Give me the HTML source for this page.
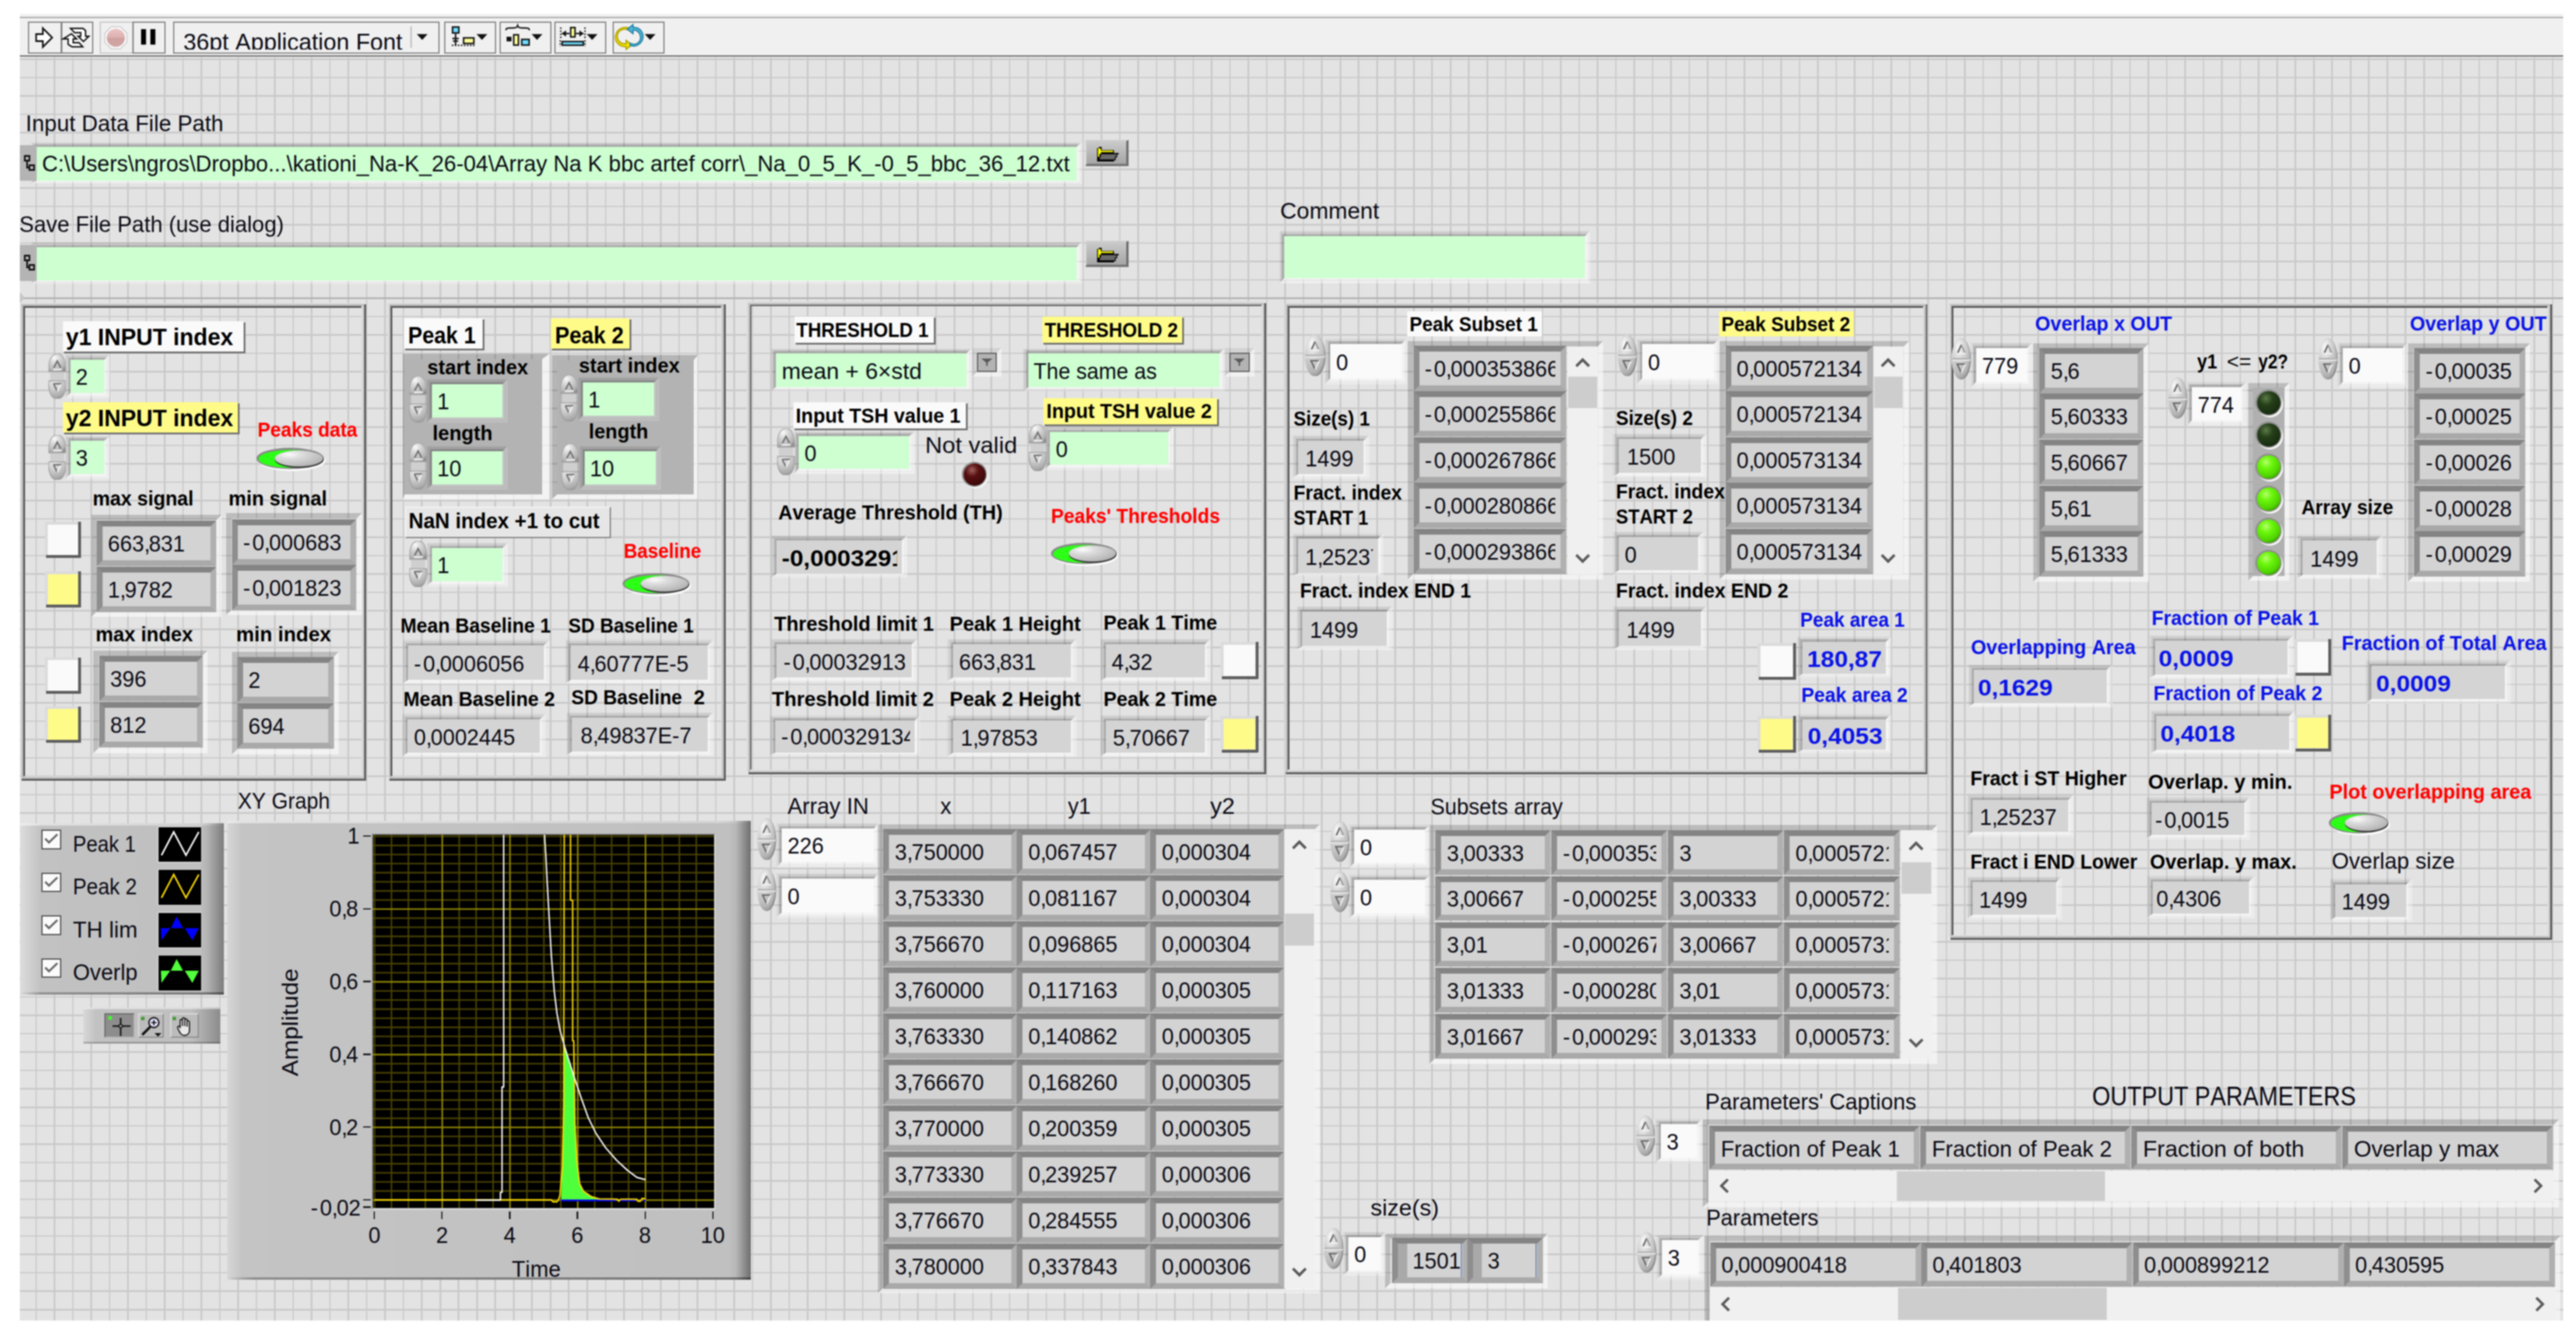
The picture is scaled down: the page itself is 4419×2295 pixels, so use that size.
<!DOCTYPE html>
<html lang="en"><head><meta charset="utf-8"><title>LabVIEW front panel</title>
<style>
html,body{margin:0;padding:0;background:#fff}
body{width:4419px;height:2295px;overflow:hidden;position:relative;font-family:"Liberation Sans",sans-serif}
#r{position:absolute;left:0;top:0;width:4419px;height:2295px;overflow:hidden;filter:blur(0.9px)}
#r div,#r span,#r svg{position:absolute;box-sizing:border-box}
.t{white-space:pre;line-height:1;transform-origin:0 0;font-kerning:none;letter-spacing:0}
#r .t span{position:static}
</style></head>
<body>
<svg width="0" height="0" style="position:absolute"><defs>
<radialGradient id="spg" cx="35%" cy="22%" r="85%"><stop offset="0" stop-color="#fafafa"/><stop offset=".35" stop-color="#d6d6d6"/><stop offset=".8" stop-color="#b4b4b4"/><stop offset="1" stop-color="#8e8e8e"/></radialGradient>
<radialGradient id="spg2" cx="35%" cy="10%" r="95%"><stop offset="0" stop-color="#e8e8e8"/><stop offset=".45" stop-color="#cacaca"/><stop offset=".85" stop-color="#a8a8a8"/><stop offset="1" stop-color="#888"/></radialGradient>
<linearGradient id="sps" x1="0" y1="0" x2="1" y2="1"><stop offset="0" stop-color="#ececec"/><stop offset=".5" stop-color="#bcbcbc"/><stop offset="1" stop-color="#7a7a7a"/></linearGradient>
<radialGradient id="knob" cx="30%" cy="25%" r="90%"><stop offset="0" stop-color="#fcfcfc"/><stop offset=".3" stop-color="#dcdcdc"/><stop offset=".75" stop-color="#bcbcbc"/><stop offset="1" stop-color="#a4a4a4"/></radialGradient>
<radialGradient id="ledon" cx="38%" cy="30%" r="75%"><stop offset="0" stop-color="#b6ff6a"/><stop offset=".35" stop-color="#6cf60e"/><stop offset=".8" stop-color="#4fd400"/><stop offset="1" stop-color="#3a9a00"/></radialGradient>
<radialGradient id="ledoff" cx="38%" cy="30%" r="75%"><stop offset="0" stop-color="#5c7a48"/><stop offset=".4" stop-color="#26401a"/><stop offset="1" stop-color="#16280e"/></radialGradient>
<radialGradient id="ledred" cx="38%" cy="30%" r="75%"><stop offset="0" stop-color="#a06060"/><stop offset=".4" stop-color="#581010"/><stop offset="1" stop-color="#380808"/></radialGradient>
<linearGradient id="abg" x1="0" y1="0" x2="0" y2="1"><stop offset="0" stop-color="#ecc4c4"/><stop offset=".5" stop-color="#dcaeae"/><stop offset=".52" stop-color="#cfa0a0"/><stop offset="1" stop-color="#d2a6a6"/></linearGradient>
</defs></svg>
<div id="r">
<div style="left:34px;top:24px;width:4362.5px;height:2241px;background:#e3e3e3"></div>
<div style="left:60.7px;top:97.5px;width:2.6px;height:2167.5px;background:#c9c9c9"></div>
<div style="left:92.21px;top:97.5px;width:2.6px;height:2167.5px;background:#c9c9c9"></div>
<div style="left:123.72px;top:97.5px;width:2.6px;height:2167.5px;background:#c9c9c9"></div>
<div style="left:155.23px;top:97.5px;width:2.6px;height:2167.5px;background:#c9c9c9"></div>
<div style="left:186.74px;top:97.5px;width:2.6px;height:2167.5px;background:#c9c9c9"></div>
<div style="left:218.25px;top:97.5px;width:2.6px;height:2167.5px;background:#c9c9c9"></div>
<div style="left:249.76px;top:97.5px;width:2.6px;height:2167.5px;background:#c9c9c9"></div>
<div style="left:281.27px;top:97.5px;width:2.6px;height:2167.5px;background:#c9c9c9"></div>
<div style="left:312.78px;top:97.5px;width:2.6px;height:2167.5px;background:#c9c9c9"></div>
<div style="left:344.29px;top:97.5px;width:2.6px;height:2167.5px;background:#c9c9c9"></div>
<div style="left:375.8px;top:97.5px;width:2.6px;height:2167.5px;background:#c9c9c9"></div>
<div style="left:407.31px;top:97.5px;width:2.6px;height:2167.5px;background:#c9c9c9"></div>
<div style="left:438.82px;top:97.5px;width:2.6px;height:2167.5px;background:#c9c9c9"></div>
<div style="left:470.33px;top:97.5px;width:2.6px;height:2167.5px;background:#c9c9c9"></div>
<div style="left:501.84px;top:97.5px;width:2.6px;height:2167.5px;background:#c9c9c9"></div>
<div style="left:533.35px;top:97.5px;width:2.6px;height:2167.5px;background:#c9c9c9"></div>
<div style="left:564.86px;top:97.5px;width:2.6px;height:2167.5px;background:#c9c9c9"></div>
<div style="left:596.37px;top:97.5px;width:2.6px;height:2167.5px;background:#c9c9c9"></div>
<div style="left:627.88px;top:97.5px;width:2.6px;height:2167.5px;background:#c9c9c9"></div>
<div style="left:659.39px;top:97.5px;width:2.6px;height:2167.5px;background:#c9c9c9"></div>
<div style="left:690.9px;top:97.5px;width:2.6px;height:2167.5px;background:#c9c9c9"></div>
<div style="left:722.41px;top:97.5px;width:2.6px;height:2167.5px;background:#c9c9c9"></div>
<div style="left:753.92px;top:97.5px;width:2.6px;height:2167.5px;background:#c9c9c9"></div>
<div style="left:785.43px;top:97.5px;width:2.6px;height:2167.5px;background:#c9c9c9"></div>
<div style="left:816.94px;top:97.5px;width:2.6px;height:2167.5px;background:#c9c9c9"></div>
<div style="left:848.45px;top:97.5px;width:2.6px;height:2167.5px;background:#c9c9c9"></div>
<div style="left:879.96px;top:97.5px;width:2.6px;height:2167.5px;background:#c9c9c9"></div>
<div style="left:911.47px;top:97.5px;width:2.6px;height:2167.5px;background:#c9c9c9"></div>
<div style="left:942.98px;top:97.5px;width:2.6px;height:2167.5px;background:#c9c9c9"></div>
<div style="left:974.49px;top:97.5px;width:2.6px;height:2167.5px;background:#c9c9c9"></div>
<div style="left:1006px;top:97.5px;width:2.6px;height:2167.5px;background:#c9c9c9"></div>
<div style="left:1037.51px;top:97.5px;width:2.6px;height:2167.5px;background:#c9c9c9"></div>
<div style="left:1069.02px;top:97.5px;width:2.6px;height:2167.5px;background:#c9c9c9"></div>
<div style="left:1100.53px;top:97.5px;width:2.6px;height:2167.5px;background:#c9c9c9"></div>
<div style="left:1132.04px;top:97.5px;width:2.6px;height:2167.5px;background:#c9c9c9"></div>
<div style="left:1163.55px;top:97.5px;width:2.6px;height:2167.5px;background:#c9c9c9"></div>
<div style="left:1195.06px;top:97.5px;width:2.6px;height:2167.5px;background:#c9c9c9"></div>
<div style="left:1226.57px;top:97.5px;width:2.6px;height:2167.5px;background:#c9c9c9"></div>
<div style="left:1258.08px;top:97.5px;width:2.6px;height:2167.5px;background:#c9c9c9"></div>
<div style="left:1289.59px;top:97.5px;width:2.6px;height:2167.5px;background:#c9c9c9"></div>
<div style="left:1321.1px;top:97.5px;width:2.6px;height:2167.5px;background:#c9c9c9"></div>
<div style="left:1352.61px;top:97.5px;width:2.6px;height:2167.5px;background:#c9c9c9"></div>
<div style="left:1384.12px;top:97.5px;width:2.6px;height:2167.5px;background:#c9c9c9"></div>
<div style="left:1415.63px;top:97.5px;width:2.6px;height:2167.5px;background:#c9c9c9"></div>
<div style="left:1447.14px;top:97.5px;width:2.6px;height:2167.5px;background:#c9c9c9"></div>
<div style="left:1478.65px;top:97.5px;width:2.6px;height:2167.5px;background:#c9c9c9"></div>
<div style="left:1510.16px;top:97.5px;width:2.6px;height:2167.5px;background:#c9c9c9"></div>
<div style="left:1541.67px;top:97.5px;width:2.6px;height:2167.5px;background:#c9c9c9"></div>
<div style="left:1573.18px;top:97.5px;width:2.6px;height:2167.5px;background:#c9c9c9"></div>
<div style="left:1604.69px;top:97.5px;width:2.6px;height:2167.5px;background:#c9c9c9"></div>
<div style="left:1636.2px;top:97.5px;width:2.6px;height:2167.5px;background:#c9c9c9"></div>
<div style="left:1667.71px;top:97.5px;width:2.6px;height:2167.5px;background:#c9c9c9"></div>
<div style="left:1699.22px;top:97.5px;width:2.6px;height:2167.5px;background:#c9c9c9"></div>
<div style="left:1730.73px;top:97.5px;width:2.6px;height:2167.5px;background:#c9c9c9"></div>
<div style="left:1762.24px;top:97.5px;width:2.6px;height:2167.5px;background:#c9c9c9"></div>
<div style="left:1793.75px;top:97.5px;width:2.6px;height:2167.5px;background:#c9c9c9"></div>
<div style="left:1825.26px;top:97.5px;width:2.6px;height:2167.5px;background:#c9c9c9"></div>
<div style="left:1856.77px;top:97.5px;width:2.6px;height:2167.5px;background:#c9c9c9"></div>
<div style="left:1888.28px;top:97.5px;width:2.6px;height:2167.5px;background:#c9c9c9"></div>
<div style="left:1919.79px;top:97.5px;width:2.6px;height:2167.5px;background:#c9c9c9"></div>
<div style="left:1951.3px;top:97.5px;width:2.6px;height:2167.5px;background:#c9c9c9"></div>
<div style="left:1982.81px;top:97.5px;width:2.6px;height:2167.5px;background:#c9c9c9"></div>
<div style="left:2014.32px;top:97.5px;width:2.6px;height:2167.5px;background:#c9c9c9"></div>
<div style="left:2045.83px;top:97.5px;width:2.6px;height:2167.5px;background:#c9c9c9"></div>
<div style="left:2077.34px;top:97.5px;width:2.6px;height:2167.5px;background:#c9c9c9"></div>
<div style="left:2108.85px;top:97.5px;width:2.6px;height:2167.5px;background:#c9c9c9"></div>
<div style="left:2140.36px;top:97.5px;width:2.6px;height:2167.5px;background:#c9c9c9"></div>
<div style="left:2171.87px;top:97.5px;width:2.6px;height:2167.5px;background:#c9c9c9"></div>
<div style="left:2203.38px;top:97.5px;width:2.6px;height:2167.5px;background:#c9c9c9"></div>
<div style="left:2234.89px;top:97.5px;width:2.6px;height:2167.5px;background:#c9c9c9"></div>
<div style="left:2266.4px;top:97.5px;width:2.6px;height:2167.5px;background:#c9c9c9"></div>
<div style="left:2297.91px;top:97.5px;width:2.6px;height:2167.5px;background:#c9c9c9"></div>
<div style="left:2329.42px;top:97.5px;width:2.6px;height:2167.5px;background:#c9c9c9"></div>
<div style="left:2360.93px;top:97.5px;width:2.6px;height:2167.5px;background:#c9c9c9"></div>
<div style="left:2392.44px;top:97.5px;width:2.6px;height:2167.5px;background:#c9c9c9"></div>
<div style="left:2423.95px;top:97.5px;width:2.6px;height:2167.5px;background:#c9c9c9"></div>
<div style="left:2455.46px;top:97.5px;width:2.6px;height:2167.5px;background:#c9c9c9"></div>
<div style="left:2486.97px;top:97.5px;width:2.6px;height:2167.5px;background:#c9c9c9"></div>
<div style="left:2518.48px;top:97.5px;width:2.6px;height:2167.5px;background:#c9c9c9"></div>
<div style="left:2549.99px;top:97.5px;width:2.6px;height:2167.5px;background:#c9c9c9"></div>
<div style="left:2581.5px;top:97.5px;width:2.6px;height:2167.5px;background:#c9c9c9"></div>
<div style="left:2613.01px;top:97.5px;width:2.6px;height:2167.5px;background:#c9c9c9"></div>
<div style="left:2644.52px;top:97.5px;width:2.6px;height:2167.5px;background:#c9c9c9"></div>
<div style="left:2676.03px;top:97.5px;width:2.6px;height:2167.5px;background:#c9c9c9"></div>
<div style="left:2707.54px;top:97.5px;width:2.6px;height:2167.5px;background:#c9c9c9"></div>
<div style="left:2739.05px;top:97.5px;width:2.6px;height:2167.5px;background:#c9c9c9"></div>
<div style="left:2770.56px;top:97.5px;width:2.6px;height:2167.5px;background:#c9c9c9"></div>
<div style="left:2802.07px;top:97.5px;width:2.6px;height:2167.5px;background:#c9c9c9"></div>
<div style="left:2833.58px;top:97.5px;width:2.6px;height:2167.5px;background:#c9c9c9"></div>
<div style="left:2865.09px;top:97.5px;width:2.6px;height:2167.5px;background:#c9c9c9"></div>
<div style="left:2896.6px;top:97.5px;width:2.6px;height:2167.5px;background:#c9c9c9"></div>
<div style="left:2928.11px;top:97.5px;width:2.6px;height:2167.5px;background:#c9c9c9"></div>
<div style="left:2959.62px;top:97.5px;width:2.6px;height:2167.5px;background:#c9c9c9"></div>
<div style="left:2991.13px;top:97.5px;width:2.6px;height:2167.5px;background:#c9c9c9"></div>
<div style="left:3022.64px;top:97.5px;width:2.6px;height:2167.5px;background:#c9c9c9"></div>
<div style="left:3054.15px;top:97.5px;width:2.6px;height:2167.5px;background:#c9c9c9"></div>
<div style="left:3085.66px;top:97.5px;width:2.6px;height:2167.5px;background:#c9c9c9"></div>
<div style="left:3117.17px;top:97.5px;width:2.6px;height:2167.5px;background:#c9c9c9"></div>
<div style="left:3148.68px;top:97.5px;width:2.6px;height:2167.5px;background:#c9c9c9"></div>
<div style="left:3180.19px;top:97.5px;width:2.6px;height:2167.5px;background:#c9c9c9"></div>
<div style="left:3211.7px;top:97.5px;width:2.6px;height:2167.5px;background:#c9c9c9"></div>
<div style="left:3243.21px;top:97.5px;width:2.6px;height:2167.5px;background:#c9c9c9"></div>
<div style="left:3274.72px;top:97.5px;width:2.6px;height:2167.5px;background:#c9c9c9"></div>
<div style="left:3306.23px;top:97.5px;width:2.6px;height:2167.5px;background:#c9c9c9"></div>
<div style="left:3337.74px;top:97.5px;width:2.6px;height:2167.5px;background:#c9c9c9"></div>
<div style="left:3369.25px;top:97.5px;width:2.6px;height:2167.5px;background:#c9c9c9"></div>
<div style="left:3400.76px;top:97.5px;width:2.6px;height:2167.5px;background:#c9c9c9"></div>
<div style="left:3432.27px;top:97.5px;width:2.6px;height:2167.5px;background:#c9c9c9"></div>
<div style="left:3463.78px;top:97.5px;width:2.6px;height:2167.5px;background:#c9c9c9"></div>
<div style="left:3495.29px;top:97.5px;width:2.6px;height:2167.5px;background:#c9c9c9"></div>
<div style="left:3526.8px;top:97.5px;width:2.6px;height:2167.5px;background:#c9c9c9"></div>
<div style="left:3558.31px;top:97.5px;width:2.6px;height:2167.5px;background:#c9c9c9"></div>
<div style="left:3589.82px;top:97.5px;width:2.6px;height:2167.5px;background:#c9c9c9"></div>
<div style="left:3621.33px;top:97.5px;width:2.6px;height:2167.5px;background:#c9c9c9"></div>
<div style="left:3652.84px;top:97.5px;width:2.6px;height:2167.5px;background:#c9c9c9"></div>
<div style="left:3684.35px;top:97.5px;width:2.6px;height:2167.5px;background:#c9c9c9"></div>
<div style="left:3715.86px;top:97.5px;width:2.6px;height:2167.5px;background:#c9c9c9"></div>
<div style="left:3747.37px;top:97.5px;width:2.6px;height:2167.5px;background:#c9c9c9"></div>
<div style="left:3778.88px;top:97.5px;width:2.6px;height:2167.5px;background:#c9c9c9"></div>
<div style="left:3810.39px;top:97.5px;width:2.6px;height:2167.5px;background:#c9c9c9"></div>
<div style="left:3841.9px;top:97.5px;width:2.6px;height:2167.5px;background:#c9c9c9"></div>
<div style="left:3873.41px;top:97.5px;width:2.6px;height:2167.5px;background:#c9c9c9"></div>
<div style="left:3904.92px;top:97.5px;width:2.6px;height:2167.5px;background:#c9c9c9"></div>
<div style="left:3936.43px;top:97.5px;width:2.6px;height:2167.5px;background:#c9c9c9"></div>
<div style="left:3967.94px;top:97.5px;width:2.6px;height:2167.5px;background:#c9c9c9"></div>
<div style="left:3999.45px;top:97.5px;width:2.6px;height:2167.5px;background:#c9c9c9"></div>
<div style="left:4030.96px;top:97.5px;width:2.6px;height:2167.5px;background:#c9c9c9"></div>
<div style="left:4062.47px;top:97.5px;width:2.6px;height:2167.5px;background:#c9c9c9"></div>
<div style="left:4093.98px;top:97.5px;width:2.6px;height:2167.5px;background:#c9c9c9"></div>
<div style="left:4125.49px;top:97.5px;width:2.6px;height:2167.5px;background:#c9c9c9"></div>
<div style="left:4157px;top:97.5px;width:2.6px;height:2167.5px;background:#c9c9c9"></div>
<div style="left:4188.51px;top:97.5px;width:2.6px;height:2167.5px;background:#c9c9c9"></div>
<div style="left:4220.02px;top:97.5px;width:2.6px;height:2167.5px;background:#c9c9c9"></div>
<div style="left:4251.53px;top:97.5px;width:2.6px;height:2167.5px;background:#c9c9c9"></div>
<div style="left:4283.04px;top:97.5px;width:2.6px;height:2167.5px;background:#c9c9c9"></div>
<div style="left:4314.55px;top:97.5px;width:2.6px;height:2167.5px;background:#c9c9c9"></div>
<div style="left:4346.06px;top:97.5px;width:2.6px;height:2167.5px;background:#c9c9c9"></div>
<div style="left:4377.57px;top:97.5px;width:2.6px;height:2167.5px;background:#c9c9c9"></div>
<div style="left:34px;top:100.2px;width:4362.5px;height:2.6px;background:#c9c9c9"></div>
<div style="left:34px;top:131.74px;width:4362.5px;height:2.6px;background:#c9c9c9"></div>
<div style="left:34px;top:163.28px;width:4362.5px;height:2.6px;background:#c9c9c9"></div>
<div style="left:34px;top:194.82px;width:4362.5px;height:2.6px;background:#c9c9c9"></div>
<div style="left:34px;top:226.36px;width:4362.5px;height:2.6px;background:#c9c9c9"></div>
<div style="left:34px;top:257.9px;width:4362.5px;height:2.6px;background:#c9c9c9"></div>
<div style="left:34px;top:289.44px;width:4362.5px;height:2.6px;background:#c9c9c9"></div>
<div style="left:34px;top:320.98px;width:4362.5px;height:2.6px;background:#c9c9c9"></div>
<div style="left:34px;top:352.52px;width:4362.5px;height:2.6px;background:#c9c9c9"></div>
<div style="left:34px;top:384.06px;width:4362.5px;height:2.6px;background:#c9c9c9"></div>
<div style="left:34px;top:415.6px;width:4362.5px;height:2.6px;background:#c9c9c9"></div>
<div style="left:34px;top:447.14px;width:4362.5px;height:2.6px;background:#c9c9c9"></div>
<div style="left:34px;top:478.68px;width:4362.5px;height:2.6px;background:#c9c9c9"></div>
<div style="left:34px;top:510.22px;width:4362.5px;height:2.6px;background:#b3b3b3"></div>
<div style="left:34px;top:541.76px;width:4362.5px;height:2.6px;background:#c9c9c9"></div>
<div style="left:34px;top:573.3px;width:4362.5px;height:2.6px;background:#c9c9c9"></div>
<div style="left:34px;top:604.84px;width:4362.5px;height:2.6px;background:#c9c9c9"></div>
<div style="left:34px;top:636.38px;width:4362.5px;height:2.6px;background:#c9c9c9"></div>
<div style="left:34px;top:667.92px;width:4362.5px;height:2.6px;background:#c9c9c9"></div>
<div style="left:34px;top:699.46px;width:4362.5px;height:2.6px;background:#c9c9c9"></div>
<div style="left:34px;top:731px;width:4362.5px;height:2.6px;background:#c9c9c9"></div>
<div style="left:34px;top:762.54px;width:4362.5px;height:2.6px;background:#c9c9c9"></div>
<div style="left:34px;top:794.08px;width:4362.5px;height:2.6px;background:#c9c9c9"></div>
<div style="left:34px;top:825.62px;width:4362.5px;height:2.6px;background:#c9c9c9"></div>
<div style="left:34px;top:857.16px;width:4362.5px;height:2.6px;background:#c9c9c9"></div>
<div style="left:34px;top:888.7px;width:4362.5px;height:2.6px;background:#c9c9c9"></div>
<div style="left:34px;top:920.24px;width:4362.5px;height:2.6px;background:#c9c9c9"></div>
<div style="left:34px;top:951.78px;width:4362.5px;height:2.6px;background:#c9c9c9"></div>
<div style="left:34px;top:983.32px;width:4362.5px;height:2.6px;background:#c9c9c9"></div>
<div style="left:34px;top:1014.86px;width:4362.5px;height:2.6px;background:#c9c9c9"></div>
<div style="left:34px;top:1046.4px;width:4362.5px;height:2.6px;background:#c9c9c9"></div>
<div style="left:34px;top:1077.94px;width:4362.5px;height:2.6px;background:#c9c9c9"></div>
<div style="left:34px;top:1109.48px;width:4362.5px;height:2.6px;background:#c9c9c9"></div>
<div style="left:34px;top:1141.02px;width:4362.5px;height:2.6px;background:#c9c9c9"></div>
<div style="left:34px;top:1172.56px;width:4362.5px;height:2.6px;background:#c9c9c9"></div>
<div style="left:34px;top:1204.1px;width:4362.5px;height:2.6px;background:#c9c9c9"></div>
<div style="left:34px;top:1235.64px;width:4362.5px;height:2.6px;background:#c9c9c9"></div>
<div style="left:34px;top:1267.18px;width:4362.5px;height:2.6px;background:#c9c9c9"></div>
<div style="left:34px;top:1298.72px;width:4362.5px;height:2.6px;background:#c9c9c9"></div>
<div style="left:34px;top:1330.26px;width:4362.5px;height:2.6px;background:#c9c9c9"></div>
<div style="left:34px;top:1361.8px;width:4362.5px;height:2.6px;background:#c9c9c9"></div>
<div style="left:34px;top:1393.34px;width:4362.5px;height:2.6px;background:#c9c9c9"></div>
<div style="left:34px;top:1424.88px;width:4362.5px;height:2.6px;background:#c9c9c9"></div>
<div style="left:34px;top:1456.42px;width:4362.5px;height:2.6px;background:#c9c9c9"></div>
<div style="left:34px;top:1487.96px;width:4362.5px;height:2.6px;background:#c9c9c9"></div>
<div style="left:34px;top:1519.5px;width:4362.5px;height:2.6px;background:#c9c9c9"></div>
<div style="left:34px;top:1551.04px;width:4362.5px;height:2.6px;background:#c9c9c9"></div>
<div style="left:34px;top:1582.58px;width:4362.5px;height:2.6px;background:#c9c9c9"></div>
<div style="left:34px;top:1614.12px;width:4362.5px;height:2.6px;background:#c9c9c9"></div>
<div style="left:34px;top:1645.66px;width:4362.5px;height:2.6px;background:#c9c9c9"></div>
<div style="left:34px;top:1677.2px;width:4362.5px;height:2.6px;background:#c9c9c9"></div>
<div style="left:34px;top:1708.74px;width:4362.5px;height:2.6px;background:#c9c9c9"></div>
<div style="left:34px;top:1740.28px;width:4362.5px;height:2.6px;background:#c9c9c9"></div>
<div style="left:34px;top:1771.82px;width:4362.5px;height:2.6px;background:#c9c9c9"></div>
<div style="left:34px;top:1803.36px;width:4362.5px;height:2.6px;background:#c9c9c9"></div>
<div style="left:34px;top:1834.9px;width:4362.5px;height:2.6px;background:#c9c9c9"></div>
<div style="left:34px;top:1866.44px;width:4362.5px;height:2.6px;background:#c9c9c9"></div>
<div style="left:34px;top:1897.98px;width:4362.5px;height:2.6px;background:#c9c9c9"></div>
<div style="left:34px;top:1929.52px;width:4362.5px;height:2.6px;background:#c9c9c9"></div>
<div style="left:34px;top:1961.06px;width:4362.5px;height:2.6px;background:#c9c9c9"></div>
<div style="left:34px;top:1992.6px;width:4362.5px;height:2.6px;background:#c9c9c9"></div>
<div style="left:34px;top:2024.14px;width:4362.5px;height:2.6px;background:#c9c9c9"></div>
<div style="left:34px;top:2055.68px;width:4362.5px;height:2.6px;background:#c9c9c9"></div>
<div style="left:34px;top:2087.22px;width:4362.5px;height:2.6px;background:#c9c9c9"></div>
<div style="left:34px;top:2118.76px;width:4362.5px;height:2.6px;background:#c9c9c9"></div>
<div style="left:34px;top:2150.3px;width:4362.5px;height:2.6px;background:#c9c9c9"></div>
<div style="left:34px;top:2181.84px;width:4362.5px;height:2.6px;background:#c9c9c9"></div>
<div style="left:34px;top:2213.38px;width:4362.5px;height:2.6px;background:#c9c9c9"></div>
<div style="left:34px;top:2244.92px;width:4362.5px;height:2.6px;background:#c9c9c9"></div>
<svg style="left:34px;top:500px" width="10" height="22" viewBox="0 0 10 22"><path d="M0 1 L8.5 10.5 L0 20 Z" fill="#c6c6c6"/></svg>
<div style="left:34px;top:24px;width:4362.5px;height:73.5px;background:#f0f0f0"></div>
<div style="left:34px;top:28.5px;width:4362.5px;height:2.5px;background:#a2a2a2"></div>
<div style="left:34px;top:94.9px;width:4362.5px;height:2.5px;background:#5c5c5c"></div>
<div style="left:48px;top:37px;width:58.6px;height:54.7px;border:2.6px solid #7f7f7f;box-sizing:border-box"></div>
<div style="left:104px;top:37px;width:56.4px;height:54.7px;border:2.6px solid #7f7f7f;box-sizing:border-box"></div>
<div style="left:171px;top:37px;width:58.6px;height:54.7px;border:2.6px solid #c6c6c6;box-sizing:border-box"></div>
<div style="left:227px;top:37px;width:56.5px;height:54.7px;border:2.6px solid #7f7f7f;box-sizing:border-box"></div>
<div style="left:297px;top:37px;width:456.6px;height:54.7px;border:2.6px solid #7f7f7f;box-sizing:border-box"></div>
<div style="left:762px;top:37px;width:89px;height:54.7px;border:2.6px solid #7f7f7f;box-sizing:border-box"></div>
<div style="left:857px;top:37px;width:88.5px;height:54.7px;border:2.6px solid #7f7f7f;box-sizing:border-box"></div>
<div style="left:951px;top:37px;width:88.8px;height:54.7px;border:2.6px solid #7f7f7f;box-sizing:border-box"></div>
<div style="left:1051px;top:37px;width:88.6px;height:54.7px;border:2.6px solid #7f7f7f;box-sizing:border-box"></div>
<svg style="left:34px;top:24px" width="1120" height="76" viewBox="34 24 1120 76"><path d="M62 58.5 L73.5 58.5 L73.5 48.5 L89.5 64.5 L73.5 80.5 L73.5 70.5 L62 70.5 Z" fill="#fff" stroke="#111" stroke-width="2.8" stroke-linejoin="miter"/><path d="M121 48.8 L142.5 48.8 L146.8 52.5 L146.8 62.3 L152.4 62.3 L143.2 71 L134 62.3 L138.5 62.3 L138.5 56 L128 56 Z" fill="#fff" stroke="#111" stroke-width="2.4" stroke-linejoin="miter"/><path d="M142 80.3 L123.5 80.3 L116.9 76 L116.9 66.8 L108.2 66.8 L122.5 58 L131.4 66.8 L125.5 66.8 L125.5 73.2 L135.5 73.2 Z" fill="#fff" stroke="#111" stroke-width="2.4" stroke-linejoin="miter"/><polygon points="217.64,72.65 206.55,83.74 190.85,83.74 179.76,72.65 179.76,56.95 190.85,45.86 206.55,45.86 217.64,56.95" fill="#fafafa" stroke="#cfcfcf" stroke-width="2"/><circle cx="198.7" cy="64.8" r="15.5" fill="url(#abg)"/><rect x="242" y="50" width="8.5" height="26.5" fill="#000"/><rect x="258" y="50" width="8.5" height="26.5" fill="#000"/><rect x="704" y="45" width="2.4" height="37" fill="#bdbdbd"/><path d="M715 58.5 L733.5 58.5 L724.25 68.5 Z" fill="#111"/><rect x="776.3" y="46.3" width="10.8" height="10.2" fill="#6fdcff" stroke="#111" stroke-width="2.6"/><path d="M781.5 58 L781.5 78" stroke="#111" stroke-width="2.6"/><path d="M776 66 L787 66 M777 70.5 L786 70.5" stroke="#111" stroke-width="2.4"/><rect x="795.3" y="65" width="17.6" height="9.5" fill="#ffff9a" stroke="#111" stroke-width="2.6"/><path d="M775 77.7 L815 77.7" stroke="#111" stroke-width="2.4" stroke-dasharray="2.6 2.6"/><path d="M817.5 58.5 L836 58.5 L826.75 68.5 Z" fill="#111"/><path d="M868 52 C868 47 872 48 880 48 C886 48 887 47 888 43.5 C889 47 890 48 896 48 C904 48 908 47 908 52" fill="none" stroke="#111" stroke-width="2.4"/><rect x="869" y="63" width="8.5" height="8" fill="#111"/><rect x="881.3" y="59.7" width="8" height="17.6" fill="#ffff9a" stroke="#111" stroke-width="2.6"/><rect x="895" y="67.6" width="12.7" height="9.7" fill="#6fdcff" stroke="#111" stroke-width="2.6"/><path d="M912 58.5 L930.5 58.5 L921.25 68.5 Z" fill="#111"/><rect x="979" y="47.3" width="7.4" height="16" fill="#ffff9a" stroke="#111" stroke-width="2.6"/><path d="M962 47 L962 67 M1003.5 47 L1003.5 67" stroke="#111" stroke-width="2.4" stroke-dasharray="2.6 2.6"/><path d="M964 57.5 L977 57.5 M988 57.5 L1001 57.5" stroke="#111" stroke-width="2.4"/><path d="M964 57.5 L971 52 L971 63 Z M1001 57.5 L994 52 L994 63 Z" fill="#111"/><rect x="964.3" y="71.3" width="36.4" height="6.2" fill="#6fdcff" stroke="#111" stroke-width="2.6"/><path d="M961 69 L961 80 M1003.7 69 L1003.7 80" stroke="#111" stroke-width="2.2" stroke-dasharray="2.6 2.6"/><path d="M1006.5 58.5 L1025 58.5 L1015.75 68.5 Z" fill="#111"/><path d="M1079 52 C1066 46 1056 56 1060 67 C1062 73 1068 76 1074 75 L1074 69 L1084 77 L1074 85 L1074 80 C1060 81 1052 68 1057 57 C1061 48 1071 45 1079 48 Z" fill="#f0e000" stroke="#a89a00" stroke-width="1.8"/><path d="M1081 74 C1093 80 1101 70 1098 60 C1096 54 1091 51 1086 52 L1086 58 L1076 50 L1086 42 L1086 47 C1099 46 1106 58 1102 69 C1098 78 1088 81 1081 78 Z" fill="#4fb4d8" stroke="#1c7a9c" stroke-width="1.8"/><path d="M1106 58.5 L1124.5 58.5 L1115.25 68.5 Z" fill="#111"/></svg>
<div style="left:300px;top:40px;width:400px;height:45px;overflow:hidden"><span class="t" style="left:14.5px;top:11.52px;font-size:40.02px;color:#0a0a14">36pt Application Font</span></div>
<span class="t" style="left:43.5px;top:193.33px;font-size:38px;color:#0a0a14;transform:scaleX(1.0108);">Input Data File Path</span>
<span class="t" style="left:33px;top:366.33px;font-size:38px;color:#0a0a14;transform:scaleX(0.9951);">Save File Path (use dialog)</span>
<span class="t" style="left:2196px;top:342.83px;font-size:38px;color:#0a0a14;transform:scaleX(1.0321);">Comment</span>
<div style="left:53.5px;top:243.5px;width:1802px;height:71.5px;border-style:solid;border-width:2.34px 2.34px 1.56px 2.34px;border-color:rgba(0,0,0,0.05) rgba(255,255,255,0.42) rgba(255,255,255,0.42) rgba(0,0,0,0.05)"></div>
<div style="left:55.84px;top:245.84px;width:1797.32px;height:67.6px;border-style:solid;border-width:2.52px 2.52px 1.68px 2.52px;border-color:rgba(0,0,0,0.13) rgba(255,255,255,0.52) rgba(255,255,255,0.52) rgba(0,0,0,0.13)"></div>
<div style="left:58.36px;top:248.36px;width:1792.28px;height:63.4px;border-style:solid;border-width:4.14px 4.14px 2.76px 4.14px;border-color:rgba(0,0,0,0.24) rgba(255,255,255,0.62) rgba(255,255,255,0.62) rgba(0,0,0,0.24);background:#cdffd0;background-clip:padding-box"></div>
<div style="left:34px;top:248.5px;width:28.5px;height:61.5px;background:#b4b4b4"></div>
<svg style="left:38px;top:263.75px" width="22" height="34" viewBox="0 0 22 34"><path d="M4.5 3.5 h8 v8 h-8 Z M12.5 19.5 h8 v8 h-8 Z M8.5 11.5 v12 h4" fill="none" stroke="#111" stroke-width="2.8"/></svg>
<div style="left:53.5px;top:415px;width:1802px;height:71.5px;border-style:solid;border-width:2.34px 2.34px 1.56px 2.34px;border-color:rgba(0,0,0,0.05) rgba(255,255,255,0.42) rgba(255,255,255,0.42) rgba(0,0,0,0.05)"></div>
<div style="left:55.84px;top:417.34px;width:1797.32px;height:67.6px;border-style:solid;border-width:2.52px 2.52px 1.68px 2.52px;border-color:rgba(0,0,0,0.13) rgba(255,255,255,0.52) rgba(255,255,255,0.52) rgba(0,0,0,0.13)"></div>
<div style="left:58.36px;top:419.86px;width:1792.28px;height:63.4px;border-style:solid;border-width:4.14px 4.14px 2.76px 4.14px;border-color:rgba(0,0,0,0.24) rgba(255,255,255,0.62) rgba(255,255,255,0.62) rgba(0,0,0,0.24);background:#cdffd0;background-clip:padding-box"></div>
<div style="left:34px;top:420px;width:28.5px;height:61.5px;background:#b4b4b4"></div>
<svg style="left:38px;top:435.25px" width="22" height="34" viewBox="0 0 22 34"><path d="M4.5 3.5 h8 v8 h-8 Z M12.5 19.5 h8 v8 h-8 Z M8.5 11.5 v12 h4" fill="none" stroke="#111" stroke-width="2.8"/></svg>
<span class="t" style="left:72px;top:262.33px;font-size:38px;color:#0a0a14;transform:scaleX(0.9984);">C:\Users\ngros\Dropbo...\kationi_Na-K_26-04\Array Na K bbc artef corr\_Na_0_5_K_-0_5_bbc_36_12.txt</span>
<div style="left:1862px;top:239.5px;width:74px;height:45px;background:linear-gradient(180deg,#cbcbcb,#b4b4b4 60%,#a6a6a6);border-style:solid;border-width:2.6px 4.5px 4px 2.6px;border-color:#cfcfcf #6e6e6e #757575 #d2d2d2;box-sizing:border-box"></div>
<svg style="left:1878px;top:248.5px" width="46" height="30" viewBox="1878 248 46 30"><path d="M1882 276 L1882 253 L1885 253 L1885 251 L1890 251 L1890 256.5 L1911 256.5 L1911 261.5 L1919 261.5 L1919 264 L1916.5 264 L1916.5 269 L1914 269 L1914 274 L1911 274 L1911 276 Z" fill="#000"/><path d="M1883.5 253.5 L1888.5 253.5 L1888.5 257.5 L1909.5 257.5 L1909.5 260 L1888.5 260 L1888.5 263 L1886 263 L1886 268 L1883.5 268 Z" fill="#ffff00"/><path d="M1888.5 263.5 L1915 263.5 L1915 267.5 L1912.5 267.5 L1912.5 272.5 L1886.5 272.5 L1886.5 268.5 L1888.5 268.5 Z" fill="#696969"/></svg>
<div style="left:1862px;top:412.5px;width:74px;height:45px;background:linear-gradient(180deg,#cbcbcb,#b4b4b4 60%,#a6a6a6);border-style:solid;border-width:2.6px 4.5px 4px 2.6px;border-color:#cfcfcf #6e6e6e #757575 #d2d2d2;box-sizing:border-box"></div>
<svg style="left:1878px;top:421.5px" width="46" height="30" viewBox="1878 248 46 30"><path d="M1882 276 L1882 253 L1885 253 L1885 251 L1890 251 L1890 256.5 L1911 256.5 L1911 261.5 L1919 261.5 L1919 264 L1916.5 264 L1916.5 269 L1914 269 L1914 274 L1911 274 L1911 276 Z" fill="#000"/><path d="M1883.5 253.5 L1888.5 253.5 L1888.5 257.5 L1909.5 257.5 L1909.5 260 L1888.5 260 L1888.5 263 L1886 263 L1886 268 L1883.5 268 Z" fill="#ffff00"/><path d="M1888.5 263.5 L1915 263.5 L1915 267.5 L1912.5 267.5 L1912.5 272.5 L1886.5 272.5 L1886.5 268.5 L1888.5 268.5 Z" fill="#696969"/></svg>
<div style="left:2194.5px;top:396px;width:533px;height:90px;border-style:solid;border-width:2.34px 2.34px 2.34px 2.34px;border-color:rgba(0,0,0,0.05) rgba(255,255,255,0.42) rgba(255,255,255,0.42) rgba(0,0,0,0.05)"></div>
<div style="left:2196.84px;top:398.34px;width:528.32px;height:85.32px;border-style:solid;border-width:2.52px 2.52px 2.52px 2.52px;border-color:rgba(0,0,0,0.13) rgba(255,255,255,0.52) rgba(255,255,255,0.52) rgba(0,0,0,0.13)"></div>
<div style="left:2199.36px;top:400.86px;width:523.28px;height:80.28px;border-style:solid;border-width:4.14px 4.14px 4.14px 4.14px;border-color:rgba(0,0,0,0.24) rgba(255,255,255,0.62) rgba(255,255,255,0.62) rgba(0,0,0,0.24);background:#cdffd0;background-clip:padding-box"></div>
<div style="left:34.84px;top:519.84px;width:587.7px;height:2.63px;background:#dbdbdb"></div>
<div style="left:34.84px;top:519.84px;width:2.63px;height:813.5px;background:#dbdbdb"></div>
<div style="left:42.73px;top:1330.71px;width:579.81px;height:2.63px;background:#dbdbdb"></div>
<div style="left:619.91px;top:527.73px;width:2.63px;height:805.61px;background:#dbdbdb"></div>
<div style="left:37.47px;top:522.47px;width:587.7px;height:2.63px;background:#b9b9b9"></div>
<div style="left:37.47px;top:522.47px;width:2.63px;height:813.5px;background:#b9b9b9"></div>
<div style="left:40.1px;top:1333.34px;width:585.07px;height:2.63px;background:#b9b9b9"></div>
<div style="left:622.54px;top:525.1px;width:2.63px;height:810.87px;background:#b9b9b9"></div>
<div style="left:40.1px;top:525.1px;width:579.81px;height:2.63px;background:#565656"></div>
<div style="left:40.1px;top:525.1px;width:2.63px;height:805.61px;background:#565656"></div>
<div style="left:37.47px;top:1335.97px;width:590.33px;height:2.63px;background:#565656"></div>
<div style="left:625.17px;top:522.47px;width:2.63px;height:816.13px;background:#565656"></div>
<div style="left:110px;top:552.5px;width:311px;height:53px;background:#6e6e6e"></div>
<div style="left:108px;top:550.5px;width:310px;height:52px;background:#fafafa"></div>
<span class="t" style="left:113px;top:557.72px;font-size:40.5px;font-weight:700;color:#000;transform:scaleX(0.9734);">y1 INPUT index</span>
<div style="left:110px;top:692px;width:300.5px;height:53px;background:#6e6e6e"></div>
<div style="left:108px;top:690px;width:299.5px;height:52px;background:#fffb88"></div>
<span class="t" style="left:113px;top:697.22px;font-size:40.5px;font-weight:700;color:#000;transform:scaleX(0.9734);">y2 INPUT index</span>
<div style="left:112px;top:608px;width:76px;height:74.5px;border-style:solid;border-width:2.34px 2.34px 2.34px 2.34px;border-color:rgba(0,0,0,0.05) rgba(255,255,255,0.42) rgba(255,255,255,0.42) rgba(0,0,0,0.05)"></div>
<div style="left:114.34px;top:610.34px;width:71.32px;height:69.82px;border-style:solid;border-width:2.52px 2.52px 2.52px 2.52px;border-color:rgba(0,0,0,0.13) rgba(255,255,255,0.52) rgba(255,255,255,0.52) rgba(0,0,0,0.13)"></div>
<div style="left:116.86px;top:612.86px;width:66.28px;height:64.78px;border-style:solid;border-width:4.14px 4.14px 4.14px 4.14px;border-color:rgba(0,0,0,0.24) rgba(255,255,255,0.62) rgba(255,255,255,0.62) rgba(0,0,0,0.24);background:#cdffd0;background-clip:padding-box"></div>
<svg style="left:82.5px;top:607px" width="30.5" height="77" viewBox="0 0 30.5 77"><rect x="3.05" y="28.8" width="24.4" height="19.4" fill="#cfcfcf"/><path d="M0 30.8 C0 6.16 7.62 0 15.25 0 C22.88 0 30.5 6.16 30.5 30.8 Z" fill="url(#spg)" stroke="#a8a8a8" stroke-width="1.5"/><path d="M0 46.2 C0 70.84 7.62 77 15.25 77 C22.88 77 30.5 70.84 30.5 46.2 Z" fill="url(#spg2)" stroke="#a0a0a0" stroke-width="1.5"/><path d="M9.25 23.8 L15.25 12.3 L21.25 23.8" fill="none" stroke="#6e6e6e" stroke-width="2.6"/><path d="M8.25 26.8 L23.25 26.8" stroke="#f4f4f4" stroke-width="2.6"/><path d="M8.25 51.2 L22.25 51.2" stroke="#707070" stroke-width="2.6"/><path d="M9.25 52.2 L15.25 64.2" stroke="#707070" stroke-width="2.6"/><path d="M15.25 64.2 L21.25 52.2" stroke="#f0f0f0" stroke-width="2.6"/></svg>
<span class="t" style="left:130px;top:628.08px;font-size:38px;color:#0a0a14;transform:scaleX(0.9800);">2</span>
<div style="left:112px;top:747.5px;width:76px;height:74px;border-style:solid;border-width:2.34px 2.34px 2.34px 2.34px;border-color:rgba(0,0,0,0.05) rgba(255,255,255,0.42) rgba(255,255,255,0.42) rgba(0,0,0,0.05)"></div>
<div style="left:114.34px;top:749.84px;width:71.32px;height:69.32px;border-style:solid;border-width:2.52px 2.52px 2.52px 2.52px;border-color:rgba(0,0,0,0.13) rgba(255,255,255,0.52) rgba(255,255,255,0.52) rgba(0,0,0,0.13)"></div>
<div style="left:116.86px;top:752.36px;width:66.28px;height:64.28px;border-style:solid;border-width:4.14px 4.14px 4.14px 4.14px;border-color:rgba(0,0,0,0.24) rgba(255,255,255,0.62) rgba(255,255,255,0.62) rgba(0,0,0,0.24);background:#cdffd0;background-clip:padding-box"></div>
<svg style="left:82.5px;top:746px" width="30.5" height="77" viewBox="0 0 30.5 77"><rect x="3.05" y="28.8" width="24.4" height="19.4" fill="#cfcfcf"/><path d="M0 30.8 C0 6.16 7.62 0 15.25 0 C22.88 0 30.5 6.16 30.5 30.8 Z" fill="url(#spg)" stroke="#a8a8a8" stroke-width="1.5"/><path d="M0 46.2 C0 70.84 7.62 77 15.25 77 C22.88 77 30.5 70.84 30.5 46.2 Z" fill="url(#spg2)" stroke="#a0a0a0" stroke-width="1.5"/><path d="M9.25 23.8 L15.25 12.3 L21.25 23.8" fill="none" stroke="#6e6e6e" stroke-width="2.6"/><path d="M8.25 26.8 L23.25 26.8" stroke="#f4f4f4" stroke-width="2.6"/><path d="M8.25 51.2 L22.25 51.2" stroke="#707070" stroke-width="2.6"/><path d="M9.25 52.2 L15.25 64.2" stroke="#707070" stroke-width="2.6"/><path d="M15.25 64.2 L21.25 52.2" stroke="#f0f0f0" stroke-width="2.6"/></svg>
<span class="t" style="left:130px;top:767.33px;font-size:38px;color:#0a0a14;transform:scaleX(0.9800);">3</span>
<span class="t" style="left:442px;top:720.3px;font-size:34.5px;font-weight:700;color:#f00;transform:scaleX(0.9485);">Peaks data</span>
<svg style="left:437px;top:764.5px" width="125.5" height="46.5" viewBox="-3 -3 125.5 46.5"><ellipse cx="60.75" cy="21.75" rx="57.75" ry="18.25" fill="#fbfbfb"/><ellipse cx="57.75" cy="18.25" rx="57.75" ry="18.25" fill="#8a8a8a"/><ellipse cx="58.25" cy="19.05" rx="54.75" ry="15.25" fill="#2bff16"/><ellipse cx="73.34" cy="19.75" rx="42.16" ry="14.75" fill="#2a2a2a"/><ellipse cx="72.77" cy="18.55" rx="41.58" ry="13.75" fill="url(#knob)"/></svg>
<span class="t" style="left:159px;top:837.8px;font-size:34.5px;font-weight:700;color:#000;transform:scaleX(0.9701);">max signal</span>
<span class="t" style="left:392px;top:837.8px;font-size:34.5px;font-weight:700;color:#000;transform:scaleX(0.9905);">min signal</span>
<div style="left:76.8px;top:895.3px;width:57.2px;height:56.7px;background:#dbdbdb"></div>
<div style="left:134px;top:895.3px;width:5px;height:61.7px;background:#5e5e5e"></div>
<div style="left:78.8px;top:952px;width:60.2px;height:5px;background:#5e5e5e"></div>
<div style="left:81.8px;top:899.9px;width:52.2px;height:52.1px;background:#fafafa"></div>
<div style="left:76.8px;top:980.3px;width:57.2px;height:56.7px;background:#dbdbdb"></div>
<div style="left:134px;top:980.3px;width:5px;height:61.7px;background:#5e5e5e"></div>
<div style="left:78.8px;top:1037px;width:60.2px;height:5px;background:#5e5e5e"></div>
<div style="left:81.8px;top:984.9px;width:52.2px;height:52.1px;background:#fffb88"></div>
<div style="left:157px;top:882.5px;width:222.5px;height:175px;border-style:solid;border-width:9px;border-color:rgba(0,0,0,.17) rgba(255,255,255,.55) rgba(255,255,255,.55) rgba(0,0,0,.17)"></div>
<div style="left:166px;top:893px;width:204.5px;height:78px;border-style:solid;border-width:10px;border-color:#848484 #b0b0b0 #a9a9a9 #8e8e8e;background:#d3d3d3"></div>
<span class="t" style="left:185px;top:914.43px;font-size:38px;color:#0a0a14;transform:scaleX(0.9800);">663<span style="letter-spacing:-2.4px">,</span>831</span>
<div style="left:166px;top:971.5px;width:204.5px;height:78px;border-style:solid;border-width:10px;border-color:#848484 #b0b0b0 #a9a9a9 #8e8e8e;background:#d3d3d3"></div>
<span class="t" style="left:185px;top:992.93px;font-size:38px;color:#0a0a14;transform:scaleX(0.9800);">1<span style="letter-spacing:-2.4px">,</span>9782</span>
<div style="left:388px;top:880px;width:232.5px;height:175px;border-style:solid;border-width:9px;border-color:rgba(0,0,0,.17) rgba(255,255,255,.55) rgba(255,255,255,.55) rgba(0,0,0,.17)"></div>
<div style="left:398px;top:890.5px;width:212.5px;height:78px;border-style:solid;border-width:10px;border-color:#848484 #b0b0b0 #a9a9a9 #8e8e8e;background:#d3d3d3"></div>
<span class="t" style="left:417px;top:911.93px;font-size:38px;color:#0a0a14;transform:scaleX(0.9800);"><span style="letter-spacing:3.3px">-</span>0<span style="letter-spacing:-2.4px">,</span>000683</span>
<div style="left:398px;top:969px;width:212.5px;height:78px;border-style:solid;border-width:10px;border-color:#848484 #b0b0b0 #a9a9a9 #8e8e8e;background:#d3d3d3"></div>
<span class="t" style="left:417px;top:990.43px;font-size:38px;color:#0a0a14;transform:scaleX(0.9800);"><span style="letter-spacing:3.3px">-</span>0<span style="letter-spacing:-2.4px">,</span>001823</span>
<span class="t" style="left:164px;top:1070.8px;font-size:34.5px;font-weight:700;color:#000;transform:scaleX(0.9897);">max index</span>
<span class="t" style="left:405px;top:1070.8px;font-size:34.5px;font-weight:700;color:#000;transform:scaleX(1.0122);">min index</span>
<div style="left:76.8px;top:1127.8px;width:57.2px;height:57.2px;background:#dbdbdb"></div>
<div style="left:134px;top:1127.8px;width:5px;height:62.2px;background:#5e5e5e"></div>
<div style="left:78.8px;top:1185px;width:60.2px;height:5px;background:#5e5e5e"></div>
<div style="left:81.8px;top:1132.4px;width:52.2px;height:52.6px;background:#fafafa"></div>
<div style="left:76.8px;top:1211.8px;width:57.2px;height:57.2px;background:#dbdbdb"></div>
<div style="left:134px;top:1211.8px;width:5px;height:62.2px;background:#5e5e5e"></div>
<div style="left:78.8px;top:1269px;width:60.2px;height:5px;background:#5e5e5e"></div>
<div style="left:81.8px;top:1216.4px;width:52.2px;height:52.6px;background:#fffb88"></div>
<div style="left:160px;top:1115.5px;width:196px;height:176px;border-style:solid;border-width:9px;border-color:rgba(0,0,0,.17) rgba(255,255,255,.55) rgba(255,255,255,.55) rgba(0,0,0,.17)"></div>
<div style="left:170px;top:1125px;width:178px;height:78px;border-style:solid;border-width:10px;border-color:#848484 #b0b0b0 #a9a9a9 #8e8e8e;background:#d3d3d3"></div>
<span class="t" style="left:189px;top:1146.43px;font-size:38px;color:#0a0a14;transform:scaleX(0.9800);">396</span>
<div style="left:170px;top:1203.5px;width:178px;height:78px;border-style:solid;border-width:10px;border-color:#848484 #b0b0b0 #a9a9a9 #8e8e8e;background:#d3d3d3"></div>
<span class="t" style="left:189px;top:1224.93px;font-size:38px;color:#0a0a14;transform:scaleX(0.9800);">812</span>
<div style="left:398px;top:1117.5px;width:183px;height:176px;border-style:solid;border-width:9px;border-color:rgba(0,0,0,.17) rgba(255,255,255,.55) rgba(255,255,255,.55) rgba(0,0,0,.17)"></div>
<div style="left:407px;top:1127px;width:166px;height:78px;border-style:solid;border-width:10px;border-color:#848484 #b0b0b0 #a9a9a9 #8e8e8e;background:#d3d3d3"></div>
<span class="t" style="left:426px;top:1148.43px;font-size:38px;color:#0a0a14;transform:scaleX(0.9800);">2</span>
<div style="left:407px;top:1205.5px;width:166px;height:78px;border-style:solid;border-width:10px;border-color:#848484 #b0b0b0 #a9a9a9 #8e8e8e;background:#d3d3d3"></div>
<span class="t" style="left:426px;top:1226.93px;font-size:38px;color:#0a0a14;transform:scaleX(0.9800);">694</span>
<div style="left:665.04px;top:519.84px;width:574.3px;height:2.63px;background:#dbdbdb"></div>
<div style="left:665.04px;top:519.84px;width:2.63px;height:813.5px;background:#dbdbdb"></div>
<div style="left:672.93px;top:1330.71px;width:566.41px;height:2.63px;background:#dbdbdb"></div>
<div style="left:1236.71px;top:527.73px;width:2.63px;height:805.61px;background:#dbdbdb"></div>
<div style="left:667.67px;top:522.47px;width:574.3px;height:2.63px;background:#b9b9b9"></div>
<div style="left:667.67px;top:522.47px;width:2.63px;height:813.5px;background:#b9b9b9"></div>
<div style="left:670.3px;top:1333.34px;width:571.67px;height:2.63px;background:#b9b9b9"></div>
<div style="left:1239.34px;top:525.1px;width:2.63px;height:810.87px;background:#b9b9b9"></div>
<div style="left:670.3px;top:525.1px;width:566.41px;height:2.63px;background:#565656"></div>
<div style="left:670.3px;top:525.1px;width:2.63px;height:805.61px;background:#565656"></div>
<div style="left:667.67px;top:1335.97px;width:576.93px;height:2.63px;background:#565656"></div>
<div style="left:1241.97px;top:522.47px;width:2.63px;height:816.13px;background:#565656"></div>
<div style="left:695px;top:548px;width:135.5px;height:52.5px;background:#6e6e6e"></div>
<div style="left:693px;top:546px;width:134.5px;height:51.5px;background:#fafafa"></div>
<span class="t" style="left:700px;top:555.29px;font-size:41px;font-weight:700;color:#000;transform:scaleX(0.8926);">Peak 1</span>
<div style="left:947px;top:548px;width:135.5px;height:52.5px;background:#6e6e6e"></div>
<div style="left:945px;top:546px;width:134.5px;height:51.5px;background:#fffb88"></div>
<span class="t" style="left:952px;top:555.29px;font-size:41px;font-weight:700;color:#000;transform:scaleX(0.9080);">Peak 2</span>
<div style="left:690.7px;top:606.9px;width:251.8px;height:249.9px;border-style:solid;border-width:9.7px 12.5px 9.4px 3.6px;border-color:rgba(0,0,0,.2) rgba(255,255,255,.6) rgba(255,255,255,.6) rgba(0,0,0,.2);background:#b3b3b3;background-clip:padding-box"></div>
<div style="left:947px;top:609px;width:250px;height:246.7px;border-style:solid;border-width:9px 7.3px 8.3px 9px;border-color:rgba(0,0,0,.2) rgba(255,255,255,.6) rgba(255,255,255,.6) rgba(0,0,0,.2);background:#b3b3b3;background-clip:padding-box"></div>
<span class="t" style="left:733px;top:612.8px;font-size:34.5px;font-weight:700;color:#000;transform:scaleX(0.9915);">start index</span>
<span class="t" style="left:993px;top:610.3px;font-size:34.5px;font-weight:700;color:#000;transform:scaleX(0.9915);">start index</span>
<span class="t" style="left:742px;top:725.8px;font-size:34.5px;font-weight:700;color:#000;transform:scaleX(0.9953);">length</span>
<span class="t" style="left:1010px;top:722.8px;font-size:34.5px;font-weight:700;color:#000;transform:scaleX(0.9856);">length</span>
<div style="left:732px;top:650px;width:139px;height:75px;border-style:solid;border-width:2.34px 2.34px 2.34px 2.34px;border-color:rgba(0,0,0,0.05) rgba(255,255,255,0.13) rgba(255,255,255,0.13) rgba(0,0,0,0.05)"></div>
<div style="left:734.34px;top:652.34px;width:134.32px;height:70.32px;border-style:solid;border-width:2.52px 2.52px 2.52px 2.52px;border-color:rgba(0,0,0,0.13) rgba(255,255,255,0.16) rgba(255,255,255,0.16) rgba(0,0,0,0.13)"></div>
<div style="left:736.86px;top:654.86px;width:129.28px;height:65.28px;border-style:solid;border-width:4.14px 4.14px 4.14px 4.14px;border-color:rgba(0,0,0,0.24) rgba(255,255,255,0.19) rgba(255,255,255,0.19) rgba(0,0,0,0.24);background:#cdffd0;background-clip:padding-box"></div>
<svg style="left:702px;top:645px" width="30.5" height="80" viewBox="0 0 30.5 80"><rect x="3.05" y="30" width="24.4" height="20" fill="#cfcfcf"/><path d="M0 32 C0 6.4 7.62 0 15.25 0 C22.88 0 30.5 6.4 30.5 32 Z" fill="url(#spg)" stroke="#a8a8a8" stroke-width="1.5"/><path d="M0 48 C0 73.6 7.62 80 15.25 80 C22.88 80 30.5 73.6 30.5 48 Z" fill="url(#spg2)" stroke="#a0a0a0" stroke-width="1.5"/><path d="M9.25 25 L15.25 13.5 L21.25 25" fill="none" stroke="#6e6e6e" stroke-width="2.6"/><path d="M8.25 28 L23.25 28" stroke="#f4f4f4" stroke-width="2.6"/><path d="M8.25 53 L22.25 53" stroke="#707070" stroke-width="2.6"/><path d="M9.25 54 L15.25 66" stroke="#707070" stroke-width="2.6"/><path d="M15.25 66 L21.25 54" stroke="#f0f0f0" stroke-width="2.6"/></svg>
<span class="t" style="left:750px;top:670.33px;font-size:38px;color:#0a0a14;transform:scaleX(0.9800);">1</span>
<div style="left:732px;top:765px;width:139px;height:75px;border-style:solid;border-width:2.34px 2.34px 2.34px 2.34px;border-color:rgba(0,0,0,0.05) rgba(255,255,255,0.13) rgba(255,255,255,0.13) rgba(0,0,0,0.05)"></div>
<div style="left:734.34px;top:767.34px;width:134.32px;height:70.32px;border-style:solid;border-width:2.52px 2.52px 2.52px 2.52px;border-color:rgba(0,0,0,0.13) rgba(255,255,255,0.16) rgba(255,255,255,0.16) rgba(0,0,0,0.13)"></div>
<div style="left:736.86px;top:769.86px;width:129.28px;height:65.28px;border-style:solid;border-width:4.14px 4.14px 4.14px 4.14px;border-color:rgba(0,0,0,0.24) rgba(255,255,255,0.19) rgba(255,255,255,0.19) rgba(0,0,0,0.24);background:#cdffd0;background-clip:padding-box"></div>
<svg style="left:702px;top:760px" width="30.5" height="80" viewBox="0 0 30.5 80"><rect x="3.05" y="30" width="24.4" height="20" fill="#cfcfcf"/><path d="M0 32 C0 6.4 7.62 0 15.25 0 C22.88 0 30.5 6.4 30.5 32 Z" fill="url(#spg)" stroke="#a8a8a8" stroke-width="1.5"/><path d="M0 48 C0 73.6 7.62 80 15.25 80 C22.88 80 30.5 73.6 30.5 48 Z" fill="url(#spg2)" stroke="#a0a0a0" stroke-width="1.5"/><path d="M9.25 25 L15.25 13.5 L21.25 25" fill="none" stroke="#6e6e6e" stroke-width="2.6"/><path d="M8.25 28 L23.25 28" stroke="#f4f4f4" stroke-width="2.6"/><path d="M8.25 53 L22.25 53" stroke="#707070" stroke-width="2.6"/><path d="M9.25 54 L15.25 66" stroke="#707070" stroke-width="2.6"/><path d="M15.25 66 L21.25 54" stroke="#f0f0f0" stroke-width="2.6"/></svg>
<span class="t" style="left:750px;top:785.33px;font-size:38px;color:#0a0a14;transform:scaleX(0.9800);">10</span>
<div style="left:991px;top:647px;width:140px;height:75px;border-style:solid;border-width:2.34px 2.34px 2.34px 2.34px;border-color:rgba(0,0,0,0.05) rgba(255,255,255,0.13) rgba(255,255,255,0.13) rgba(0,0,0,0.05)"></div>
<div style="left:993.34px;top:649.34px;width:135.32px;height:70.32px;border-style:solid;border-width:2.52px 2.52px 2.52px 2.52px;border-color:rgba(0,0,0,0.13) rgba(255,255,255,0.16) rgba(255,255,255,0.16) rgba(0,0,0,0.13)"></div>
<div style="left:995.86px;top:651.86px;width:130.28px;height:65.28px;border-style:solid;border-width:4.14px 4.14px 4.14px 4.14px;border-color:rgba(0,0,0,0.24) rgba(255,255,255,0.19) rgba(255,255,255,0.19) rgba(0,0,0,0.24);background:#cdffd0;background-clip:padding-box"></div>
<svg style="left:961px;top:643px" width="30.5" height="80" viewBox="0 0 30.5 80"><rect x="3.05" y="30" width="24.4" height="20" fill="#cfcfcf"/><path d="M0 32 C0 6.4 7.62 0 15.25 0 C22.88 0 30.5 6.4 30.5 32 Z" fill="url(#spg)" stroke="#a8a8a8" stroke-width="1.5"/><path d="M0 48 C0 73.6 7.62 80 15.25 80 C22.88 80 30.5 73.6 30.5 48 Z" fill="url(#spg2)" stroke="#a0a0a0" stroke-width="1.5"/><path d="M9.25 25 L15.25 13.5 L21.25 25" fill="none" stroke="#6e6e6e" stroke-width="2.6"/><path d="M8.25 28 L23.25 28" stroke="#f4f4f4" stroke-width="2.6"/><path d="M8.25 53 L22.25 53" stroke="#707070" stroke-width="2.6"/><path d="M9.25 54 L15.25 66" stroke="#707070" stroke-width="2.6"/><path d="M15.25 66 L21.25 54" stroke="#f0f0f0" stroke-width="2.6"/></svg>
<span class="t" style="left:1009px;top:667.33px;font-size:38px;color:#0a0a14;transform:scaleX(0.9800);">1</span>
<div style="left:994px;top:765px;width:140px;height:75px;border-style:solid;border-width:2.34px 2.34px 2.34px 2.34px;border-color:rgba(0,0,0,0.05) rgba(255,255,255,0.13) rgba(255,255,255,0.13) rgba(0,0,0,0.05)"></div>
<div style="left:996.34px;top:767.34px;width:135.32px;height:70.32px;border-style:solid;border-width:2.52px 2.52px 2.52px 2.52px;border-color:rgba(0,0,0,0.13) rgba(255,255,255,0.16) rgba(255,255,255,0.16) rgba(0,0,0,0.13)"></div>
<div style="left:998.86px;top:769.86px;width:130.28px;height:65.28px;border-style:solid;border-width:4.14px 4.14px 4.14px 4.14px;border-color:rgba(0,0,0,0.24) rgba(255,255,255,0.19) rgba(255,255,255,0.19) rgba(0,0,0,0.24);background:#cdffd0;background-clip:padding-box"></div>
<svg style="left:963px;top:761px" width="30.5" height="80" viewBox="0 0 30.5 80"><rect x="3.05" y="30" width="24.4" height="20" fill="#cfcfcf"/><path d="M0 32 C0 6.4 7.62 0 15.25 0 C22.88 0 30.5 6.4 30.5 32 Z" fill="url(#spg)" stroke="#a8a8a8" stroke-width="1.5"/><path d="M0 48 C0 73.6 7.62 80 15.25 80 C22.88 80 30.5 73.6 30.5 48 Z" fill="url(#spg2)" stroke="#a0a0a0" stroke-width="1.5"/><path d="M9.25 25 L15.25 13.5 L21.25 25" fill="none" stroke="#6e6e6e" stroke-width="2.6"/><path d="M8.25 28 L23.25 28" stroke="#f4f4f4" stroke-width="2.6"/><path d="M8.25 53 L22.25 53" stroke="#707070" stroke-width="2.6"/><path d="M9.25 54 L15.25 66" stroke="#707070" stroke-width="2.6"/><path d="M15.25 66 L21.25 54" stroke="#f0f0f0" stroke-width="2.6"/></svg>
<span class="t" style="left:1012px;top:785.33px;font-size:38px;color:#0a0a14;transform:scaleX(0.9800);">10</span>
<div style="left:695px;top:868.5px;width:352.5px;height:54.5px;background:#e6e6e6;border-style:solid;border-width:2.6px;border-color:#f4f4f4 #7a7a7a #7a7a7a #f4f4f4;box-sizing:border-box"></div>
<span class="t" style="left:700.5px;top:876.1px;font-size:36.5px;font-weight:700;color:#000;transform:scaleX(0.9640);">NaN index +1 to cut</span>
<div style="left:732px;top:931px;width:139px;height:74.5px;border-style:solid;border-width:2.34px 2.34px 2.34px 2.34px;border-color:rgba(0,0,0,0.05) rgba(255,255,255,0.42) rgba(255,255,255,0.42) rgba(0,0,0,0.05)"></div>
<div style="left:734.34px;top:933.34px;width:134.32px;height:69.82px;border-style:solid;border-width:2.52px 2.52px 2.52px 2.52px;border-color:rgba(0,0,0,0.13) rgba(255,255,255,0.52) rgba(255,255,255,0.52) rgba(0,0,0,0.13)"></div>
<div style="left:736.86px;top:935.86px;width:129.28px;height:64.78px;border-style:solid;border-width:4.14px 4.14px 4.14px 4.14px;border-color:rgba(0,0,0,0.24) rgba(255,255,255,0.62) rgba(255,255,255,0.62) rgba(0,0,0,0.24);background:#cdffd0;background-clip:padding-box"></div>
<svg style="left:702px;top:928px" width="30.5" height="79" viewBox="0 0 30.5 79"><rect x="3.05" y="29.6" width="24.4" height="19.8" fill="#cfcfcf"/><path d="M0 31.6 C0 6.32 7.62 0 15.25 0 C22.88 0 30.5 6.32 30.5 31.6 Z" fill="url(#spg)" stroke="#a8a8a8" stroke-width="1.5"/><path d="M0 47.4 C0 72.68 7.62 79 15.25 79 C22.88 79 30.5 72.68 30.5 47.4 Z" fill="url(#spg2)" stroke="#a0a0a0" stroke-width="1.5"/><path d="M9.25 24.6 L15.25 13.1 L21.25 24.6" fill="none" stroke="#6e6e6e" stroke-width="2.6"/><path d="M8.25 27.6 L23.25 27.6" stroke="#f4f4f4" stroke-width="2.6"/><path d="M8.25 52.4 L22.25 52.4" stroke="#707070" stroke-width="2.6"/><path d="M9.25 53.4 L15.25 65.4" stroke="#707070" stroke-width="2.6"/><path d="M15.25 65.4 L21.25 53.4" stroke="#f0f0f0" stroke-width="2.6"/></svg>
<span class="t" style="left:750px;top:951.08px;font-size:38px;color:#0a0a14;transform:scaleX(0.9800);">1</span>
<span class="t" style="left:1070px;top:927.8px;font-size:34.5px;font-weight:700;color:#f00;transform:scaleX(0.9372);">Baseline</span>
<svg style="left:1064.5px;top:980px" width="124.5" height="46" viewBox="-3 -3 124.5 46"><ellipse cx="60.25" cy="21.5" rx="57.25" ry="18" fill="#fbfbfb"/><ellipse cx="57.25" cy="18" rx="57.25" ry="18" fill="#8a8a8a"/><ellipse cx="57.75" cy="18.8" rx="54.25" ry="15" fill="#2bff16"/><ellipse cx="72.71" cy="19.5" rx="41.79" ry="14.5" fill="#2a2a2a"/><ellipse cx="72.14" cy="18.3" rx="41.22" ry="13.5" fill="url(#knob)"/></svg>
<span class="t" style="left:687px;top:1055.8px;font-size:34.5px;font-weight:700;color:#000;transform:scaleX(0.9610);">Mean Baseline 1</span>
<span class="t" style="left:975px;top:1055.8px;font-size:34.5px;font-weight:700;color:#000;transform:scaleX(0.9422);">SD Baseline 1</span>
<div style="left:690.5px;top:1097px;width:252px;height:76px;border-style:solid;border-width:2.73px 2.73px 2.08px 2.73px;border-color:rgba(0,0,0,0.05) rgba(255,255,255,0.42) rgba(255,255,255,0.42) rgba(0,0,0,0.05)"></div>
<div style="left:693.23px;top:1099.73px;width:246.54px;height:71.19px;border-style:solid;border-width:2.94px 2.94px 2.24px 2.94px;border-color:rgba(0,0,0,0.13) rgba(255,255,255,0.52) rgba(255,255,255,0.52) rgba(0,0,0,0.13)"></div>
<div style="left:696.17px;top:1102.67px;width:240.66px;height:66.01px;border-style:solid;border-width:4.83px 4.83px 3.68px 4.83px;border-color:rgba(0,0,0,0.24) rgba(255,255,255,0.62) rgba(255,255,255,0.62) rgba(0,0,0,0.24);background:#d4d4d4;background-clip:padding-box"></div>
<span class="t" style="left:710px;top:1119.58px;font-size:38px;color:#0a0a14;transform:scaleX(0.9800);"><span style="letter-spacing:3.3px">-</span>0<span style="letter-spacing:-2.4px">,</span>0006056</span>
<div style="left:969.5px;top:1097px;width:254px;height:76px;border-style:solid;border-width:2.73px 2.73px 2.08px 2.73px;border-color:rgba(0,0,0,0.05) rgba(255,255,255,0.42) rgba(255,255,255,0.42) rgba(0,0,0,0.05)"></div>
<div style="left:972.23px;top:1099.73px;width:248.54px;height:71.19px;border-style:solid;border-width:2.94px 2.94px 2.24px 2.94px;border-color:rgba(0,0,0,0.13) rgba(255,255,255,0.52) rgba(255,255,255,0.52) rgba(0,0,0,0.13)"></div>
<div style="left:975.17px;top:1102.67px;width:242.66px;height:66.01px;border-style:solid;border-width:4.83px 4.83px 3.68px 4.83px;border-color:rgba(0,0,0,0.24) rgba(255,255,255,0.62) rgba(255,255,255,0.62) rgba(0,0,0,0.24);background:#d4d4d4;background-clip:padding-box"></div>
<span class="t" style="left:991px;top:1119.58px;font-size:38px;color:#0a0a14;transform:scaleX(0.9800);">4<span style="letter-spacing:-2.4px">,</span>60777E-5</span>
<span class="t" style="left:692px;top:1181.8px;font-size:34.5px;font-weight:700;color:#000;transform:scaleX(0.9685);">Mean Baseline 2</span>
<span class="t" style="left:980px;top:1178.8px;font-size:34.5px;font-weight:700;color:#000;transform:scaleX(0.9527);">SD Baseline</span>
<span class="t" style="left:1190px;top:1178.8px;font-size:34.5px;font-weight:700;color:#000;transform:scaleX(1.0000);">2</span>
<div style="left:689.5px;top:1224px;width:246px;height:74.5px;border-style:solid;border-width:2.73px 2.73px 2.08px 2.73px;border-color:rgba(0,0,0,0.05) rgba(255,255,255,0.42) rgba(255,255,255,0.42) rgba(0,0,0,0.05)"></div>
<div style="left:692.23px;top:1226.73px;width:240.54px;height:69.69px;border-style:solid;border-width:2.94px 2.94px 2.24px 2.94px;border-color:rgba(0,0,0,0.13) rgba(255,255,255,0.52) rgba(255,255,255,0.52) rgba(0,0,0,0.13)"></div>
<div style="left:695.17px;top:1229.67px;width:234.66px;height:64.51px;border-style:solid;border-width:4.83px 4.83px 3.68px 4.83px;border-color:rgba(0,0,0,0.24) rgba(255,255,255,0.62) rgba(255,255,255,0.62) rgba(0,0,0,0.24);background:#d4d4d4;background-clip:padding-box"></div>
<span class="t" style="left:710px;top:1245.83px;font-size:38px;color:#0a0a14;transform:scaleX(0.9800);">0<span style="letter-spacing:-2.4px">,</span>0002445</span>
<div style="left:971.5px;top:1221.5px;width:252px;height:74.5px;border-style:solid;border-width:2.73px 2.73px 2.08px 2.73px;border-color:rgba(0,0,0,0.05) rgba(255,255,255,0.42) rgba(255,255,255,0.42) rgba(0,0,0,0.05)"></div>
<div style="left:974.23px;top:1224.23px;width:246.54px;height:69.69px;border-style:solid;border-width:2.94px 2.94px 2.24px 2.94px;border-color:rgba(0,0,0,0.13) rgba(255,255,255,0.52) rgba(255,255,255,0.52) rgba(0,0,0,0.13)"></div>
<div style="left:977.17px;top:1227.17px;width:240.66px;height:64.51px;border-style:solid;border-width:4.83px 4.83px 3.68px 4.83px;border-color:rgba(0,0,0,0.24) rgba(255,255,255,0.62) rgba(255,255,255,0.62) rgba(0,0,0,0.24);background:#d4d4d4;background-clip:padding-box"></div>
<span class="t" style="left:996px;top:1243.33px;font-size:38px;color:#0a0a14;transform:scaleX(0.9800);">8<span style="letter-spacing:-2.4px">,</span>49837E-7</span>
<div style="left:1281.34px;top:517.34px;width:885.4px;height:2.63px;background:#dbdbdb"></div>
<div style="left:1281.34px;top:517.34px;width:2.63px;height:805.2px;background:#dbdbdb"></div>
<div style="left:1289.23px;top:1319.91px;width:877.51px;height:2.63px;background:#dbdbdb"></div>
<div style="left:2164.11px;top:525.23px;width:2.63px;height:797.31px;background:#dbdbdb"></div>
<div style="left:1283.97px;top:519.97px;width:885.4px;height:2.63px;background:#b9b9b9"></div>
<div style="left:1283.97px;top:519.97px;width:2.63px;height:805.2px;background:#b9b9b9"></div>
<div style="left:1286.6px;top:1322.54px;width:882.77px;height:2.63px;background:#b9b9b9"></div>
<div style="left:2166.74px;top:522.6px;width:2.63px;height:802.57px;background:#b9b9b9"></div>
<div style="left:1286.6px;top:522.6px;width:877.51px;height:2.63px;background:#565656"></div>
<div style="left:1286.6px;top:522.6px;width:2.63px;height:797.31px;background:#565656"></div>
<div style="left:1283.97px;top:1325.17px;width:888.03px;height:2.63px;background:#565656"></div>
<div style="left:2169.37px;top:519.97px;width:2.63px;height:807.83px;background:#565656"></div>
<div style="left:1364.7px;top:545px;width:240.3px;height:45.5px;background:#6e6e6e"></div>
<div style="left:1362.7px;top:543px;width:239.3px;height:44.5px;background:#fafafa"></div>
<span class="t" style="left:1366px;top:549.16px;font-size:35.6px;font-weight:700;color:#000;transform:scaleX(0.9036);">THRESHOLD 1</span>
<div style="left:1790px;top:545px;width:240.5px;height:45.5px;background:#6e6e6e"></div>
<div style="left:1788px;top:543px;width:239.5px;height:44.5px;background:#fffb88"></div>
<span class="t" style="left:1792px;top:549.16px;font-size:35.6px;font-weight:700;color:#000;transform:scaleX(0.9116);">THRESHOLD 2</span>
<div style="left:1322.5px;top:597.5px;width:344px;height:73px;border-style:solid;border-width:2.34px 2.34px 1.82px 2.34px;border-color:rgba(0,0,0,0.05) rgba(255,255,255,0.42) rgba(255,255,255,0.42) rgba(0,0,0,0.05)"></div>
<div style="left:1324.84px;top:599.84px;width:339.32px;height:68.84px;border-style:solid;border-width:2.52px 2.52px 1.96px 2.52px;border-color:rgba(0,0,0,0.13) rgba(255,255,255,0.52) rgba(255,255,255,0.52) rgba(0,0,0,0.13)"></div>
<div style="left:1327.36px;top:602.36px;width:334.28px;height:64.36px;border-style:solid;border-width:4.14px 4.14px 3.22px 4.14px;border-color:rgba(0,0,0,0.24) rgba(255,255,255,0.62) rgba(255,255,255,0.62) rgba(0,0,0,0.24);background:#cdffd0;background-clip:padding-box"></div>
<span class="t" style="left:1341px;top:618.03px;font-size:38px;color:#0a0a14;transform:scaleX(1.0349);">mean + 6×std</span>
<div style="left:1667.6px;top:596.5px;width:50.4px;height:49.5px;border-style:solid;border-width:8px;box-sizing:border-box;border-color:rgba(0,0,0,.07) rgba(255,255,255,.5) rgba(255,255,255,.5) rgba(0,0,0,.07)"></div>
<div style="left:1675.6px;top:604.5px;width:34.4px;height:33.5px;background:#b3b3b3;border:2.6px solid #5c5c5c;box-sizing:border-box"></div>
<svg style="left:1680.8px;top:612.25px" width="24" height="20" viewBox="-12 -9 24 20"><path d="M-9.5 -6 L9.5 -6 L1.3 1 L1.3 6.5 L-1.3 6.5 L-1.3 1 Z" fill="#5a5a5a"/></svg>
<div style="left:1755px;top:597.5px;width:345.5px;height:73px;border-style:solid;border-width:2.34px 2.34px 1.82px 2.34px;border-color:rgba(0,0,0,0.05) rgba(255,255,255,0.42) rgba(255,255,255,0.42) rgba(0,0,0,0.05)"></div>
<div style="left:1757.34px;top:599.84px;width:340.82px;height:68.84px;border-style:solid;border-width:2.52px 2.52px 1.96px 2.52px;border-color:rgba(0,0,0,0.13) rgba(255,255,255,0.52) rgba(255,255,255,0.52) rgba(0,0,0,0.13)"></div>
<div style="left:1759.86px;top:602.36px;width:335.78px;height:64.36px;border-style:solid;border-width:4.14px 4.14px 3.22px 4.14px;border-color:rgba(0,0,0,0.24) rgba(255,255,255,0.62) rgba(255,255,255,0.62) rgba(0,0,0,0.24);background:#cdffd0;background-clip:padding-box"></div>
<span class="t" style="left:1773px;top:618.03px;font-size:38px;color:#0a0a14;transform:scaleX(0.9629);">The same as</span>
<div style="left:2101px;top:596.5px;width:50.5px;height:49.5px;border-style:solid;border-width:8px;box-sizing:border-box;border-color:rgba(0,0,0,.07) rgba(255,255,255,.5) rgba(255,255,255,.5) rgba(0,0,0,.07)"></div>
<div style="left:2109px;top:604.5px;width:34.5px;height:33.5px;background:#b3b3b3;border:2.6px solid #5c5c5c;box-sizing:border-box"></div>
<svg style="left:2114.25px;top:612.25px" width="24" height="20" viewBox="-12 -9 24 20"><path d="M-9.5 -6 L9.5 -6 L1.3 1 L1.3 6.5 L-1.3 6.5 L-1.3 1 Z" fill="#5a5a5a"/></svg>
<div style="left:1362.6px;top:692.4px;width:297.4px;height:45.6px;background:#6e6e6e"></div>
<div style="left:1360.6px;top:690.4px;width:296.4px;height:44.6px;background:#fafafa"></div>
<span class="t" style="left:1365px;top:696.26px;font-size:35.6px;font-weight:700;color:#000;transform:scaleX(0.9475);">Input TSH value 1</span>
<div style="left:1792px;top:684.5px;width:299px;height:46px;background:#6e6e6e"></div>
<div style="left:1790px;top:682.5px;width:298px;height:45px;background:#fffb88"></div>
<span class="t" style="left:1795px;top:688.36px;font-size:35.6px;font-weight:700;color:#000;transform:scaleX(0.9508);">Input TSH value 2</span>
<div style="left:1361.5px;top:739.5px;width:207.5px;height:73.5px;border-style:solid;border-width:2.34px 2.34px 2.34px 2.34px;border-color:rgba(0,0,0,0.05) rgba(255,255,255,0.42) rgba(255,255,255,0.42) rgba(0,0,0,0.05)"></div>
<div style="left:1363.84px;top:741.84px;width:202.82px;height:68.82px;border-style:solid;border-width:2.52px 2.52px 2.52px 2.52px;border-color:rgba(0,0,0,0.13) rgba(255,255,255,0.52) rgba(255,255,255,0.52) rgba(0,0,0,0.13)"></div>
<div style="left:1366.36px;top:744.36px;width:197.78px;height:63.78px;border-style:solid;border-width:4.14px 4.14px 4.14px 4.14px;border-color:rgba(0,0,0,0.24) rgba(255,255,255,0.62) rgba(255,255,255,0.62) rgba(0,0,0,0.24);background:#cdffd0;background-clip:padding-box"></div>
<svg style="left:1333px;top:735px" width="30.5" height="80" viewBox="0 0 30.5 80"><rect x="3.05" y="30" width="24.4" height="20" fill="#cfcfcf"/><path d="M0 32 C0 6.4 7.62 0 15.25 0 C22.88 0 30.5 6.4 30.5 32 Z" fill="url(#spg)" stroke="#a8a8a8" stroke-width="1.5"/><path d="M0 48 C0 73.6 7.62 80 15.25 80 C22.88 80 30.5 73.6 30.5 48 Z" fill="url(#spg2)" stroke="#a0a0a0" stroke-width="1.5"/><path d="M9.25 25 L15.25 13.5 L21.25 25" fill="none" stroke="#6e6e6e" stroke-width="2.6"/><path d="M8.25 28 L23.25 28" stroke="#f4f4f4" stroke-width="2.6"/><path d="M8.25 53 L22.25 53" stroke="#707070" stroke-width="2.6"/><path d="M9.25 54 L15.25 66" stroke="#707070" stroke-width="2.6"/><path d="M15.25 66 L21.25 54" stroke="#f0f0f0" stroke-width="2.6"/></svg>
<span class="t" style="left:1379.5px;top:759.08px;font-size:38px;color:#0a0a14;transform:scaleX(0.9800);">0</span>
<div style="left:1792.5px;top:732px;width:220.5px;height:73.5px;border-style:solid;border-width:2.34px 2.34px 2.34px 2.34px;border-color:rgba(0,0,0,0.05) rgba(255,255,255,0.42) rgba(255,255,255,0.42) rgba(0,0,0,0.05)"></div>
<div style="left:1794.84px;top:734.34px;width:215.82px;height:68.82px;border-style:solid;border-width:2.52px 2.52px 2.52px 2.52px;border-color:rgba(0,0,0,0.13) rgba(255,255,255,0.52) rgba(255,255,255,0.52) rgba(0,0,0,0.13)"></div>
<div style="left:1797.36px;top:736.86px;width:210.78px;height:63.78px;border-style:solid;border-width:4.14px 4.14px 4.14px 4.14px;border-color:rgba(0,0,0,0.24) rgba(255,255,255,0.62) rgba(255,255,255,0.62) rgba(0,0,0,0.24);background:#cdffd0;background-clip:padding-box"></div>
<svg style="left:1765px;top:727.5px" width="30.5" height="80" viewBox="0 0 30.5 80"><rect x="3.05" y="30" width="24.4" height="20" fill="#cfcfcf"/><path d="M0 32 C0 6.4 7.62 0 15.25 0 C22.88 0 30.5 6.4 30.5 32 Z" fill="url(#spg)" stroke="#a8a8a8" stroke-width="1.5"/><path d="M0 48 C0 73.6 7.62 80 15.25 80 C22.88 80 30.5 73.6 30.5 48 Z" fill="url(#spg2)" stroke="#a0a0a0" stroke-width="1.5"/><path d="M9.25 25 L15.25 13.5 L21.25 25" fill="none" stroke="#6e6e6e" stroke-width="2.6"/><path d="M8.25 28 L23.25 28" stroke="#f4f4f4" stroke-width="2.6"/><path d="M8.25 53 L22.25 53" stroke="#707070" stroke-width="2.6"/><path d="M9.25 54 L15.25 66" stroke="#707070" stroke-width="2.6"/><path d="M15.25 66 L21.25 54" stroke="#f0f0f0" stroke-width="2.6"/></svg>
<span class="t" style="left:1810.5px;top:751.58px;font-size:38px;color:#0a0a14;transform:scaleX(0.9800);">0</span>
<span class="t" style="left:1587px;top:745.33px;font-size:38px;color:#0a0a14;transform:scaleX(1.0687);">Not valid</span>
<svg style="left:1648px;top:790px" width="50" height="50" viewBox="-24 -24 50 50"><circle cx="2" cy="2.5" r="21.5" fill="#f6f6f6"/><circle cx="-0.5" cy="-0.5" r="21.5" fill="#8e8e8e"/><circle cx="0" cy="0" r="19" fill="url(#ledred)"/></svg>
<span class="t" style="left:1335px;top:862.3px;font-size:34.5px;font-weight:700;color:#000;transform:scaleX(0.9845);">Average Threshold (TH)</span>
<span class="t" style="left:1803px;top:868.3px;font-size:34.5px;font-weight:700;color:#f00;transform:scaleX(0.9555);">Peaks&#x27; Thresholds</span>
<svg style="left:1800px;top:928px" width="122.5" height="46.5" viewBox="-3 -3 122.5 46.5"><ellipse cx="59.25" cy="21.75" rx="56.25" ry="18.25" fill="#fbfbfb"/><ellipse cx="56.25" cy="18.25" rx="56.25" ry="18.25" fill="#8a8a8a"/><ellipse cx="56.75" cy="19.05" rx="53.25" ry="15.25" fill="#2bff16"/><ellipse cx="71.44" cy="19.75" rx="41.06" ry="14.75" fill="#2a2a2a"/><ellipse cx="70.88" cy="18.55" rx="40.5" ry="13.75" fill="url(#knob)"/></svg>
<div style="left:1323px;top:918px;width:233px;height:73px;border-style:solid;border-width:2.34px 2.34px 1.82px 2.34px;border-color:rgba(0,0,0,0.05) rgba(255,255,255,0.42) rgba(255,255,255,0.42) rgba(0,0,0,0.05)"></div>
<div style="left:1325.34px;top:920.34px;width:228.32px;height:68.84px;border-style:solid;border-width:2.52px 2.52px 1.96px 2.52px;border-color:rgba(0,0,0,0.13) rgba(255,255,255,0.52) rgba(255,255,255,0.52) rgba(0,0,0,0.13)"></div>
<div style="left:1327.86px;top:922.86px;width:223.28px;height:64.36px;border-style:solid;border-width:4.14px 4.14px 3.22px 4.14px;border-color:rgba(0,0,0,0.24) rgba(255,255,255,0.62) rgba(255,255,255,0.62) rgba(0,0,0,0.24);background:#d4d4d4;background-clip:padding-box"></div>
<div style="left:1332px;top:927px;width:207px;height:57px;overflow:hidden"><span class="t" style="left:9px;top:10.99px;font-size:39px;font-weight:700;color:#000;transform:scaleX(1.07)">-0,0003291</span></div>
<span class="t" style="left:1328px;top:1053.3px;font-size:34.5px;font-weight:700;color:#000;transform:scaleX(0.9926);">Threshold limit 1</span>
<span class="t" style="left:1629px;top:1053.3px;font-size:34.5px;font-weight:700;color:#000;transform:scaleX(0.9944);">Peak 1 Height</span>
<span class="t" style="left:1893px;top:1050.8px;font-size:34.5px;font-weight:700;color:#000;transform:scaleX(0.9777);">Peak 1 Time</span>
<div style="left:1322.5px;top:1095.5px;width:251px;height:73.5px;border-style:solid;border-width:2.73px 2.73px 2.08px 2.73px;border-color:rgba(0,0,0,0.05) rgba(255,255,255,0.42) rgba(255,255,255,0.42) rgba(0,0,0,0.05)"></div>
<div style="left:1325.23px;top:1098.23px;width:245.54px;height:68.69px;border-style:solid;border-width:2.94px 2.94px 2.24px 2.94px;border-color:rgba(0,0,0,0.13) rgba(255,255,255,0.52) rgba(255,255,255,0.52) rgba(0,0,0,0.13)"></div>
<div style="left:1328.17px;top:1101.17px;width:239.66px;height:63.51px;border-style:solid;border-width:4.83px 4.83px 3.68px 4.83px;border-color:rgba(0,0,0,0.24) rgba(255,255,255,0.62) rgba(255,255,255,0.62) rgba(0,0,0,0.24);background:#d4d4d4;background-clip:padding-box"></div>
<span class="t" style="left:1344px;top:1116.83px;font-size:38px;color:#0a0a14;transform:scaleX(0.9800);"><span style="letter-spacing:3.3px">-</span>0<span style="letter-spacing:-2.4px">,</span>00032913</span>
<div style="left:1625px;top:1095.5px;width:221.5px;height:73.5px;border-style:solid;border-width:2.73px 2.73px 2.08px 2.73px;border-color:rgba(0,0,0,0.05) rgba(255,255,255,0.42) rgba(255,255,255,0.42) rgba(0,0,0,0.05)"></div>
<div style="left:1627.73px;top:1098.23px;width:216.04px;height:68.69px;border-style:solid;border-width:2.94px 2.94px 2.24px 2.94px;border-color:rgba(0,0,0,0.13) rgba(255,255,255,0.52) rgba(255,255,255,0.52) rgba(0,0,0,0.13)"></div>
<div style="left:1630.67px;top:1101.17px;width:210.16px;height:63.51px;border-style:solid;border-width:4.83px 4.83px 3.68px 4.83px;border-color:rgba(0,0,0,0.24) rgba(255,255,255,0.62) rgba(255,255,255,0.62) rgba(0,0,0,0.24);background:#d4d4d4;background-clip:padding-box"></div>
<span class="t" style="left:1644.5px;top:1116.83px;font-size:38px;color:#0a0a14;transform:scaleX(0.9800);">663<span style="letter-spacing:-2.4px">,</span>831</span>
<div style="left:1887.5px;top:1095.5px;width:189.5px;height:73.5px;border-style:solid;border-width:2.73px 2.73px 2.08px 2.73px;border-color:rgba(0,0,0,0.05) rgba(255,255,255,0.42) rgba(255,255,255,0.42) rgba(0,0,0,0.05)"></div>
<div style="left:1890.23px;top:1098.23px;width:184.04px;height:68.69px;border-style:solid;border-width:2.94px 2.94px 2.24px 2.94px;border-color:rgba(0,0,0,0.13) rgba(255,255,255,0.52) rgba(255,255,255,0.52) rgba(0,0,0,0.13)"></div>
<div style="left:1893.17px;top:1101.17px;width:178.16px;height:63.51px;border-style:solid;border-width:4.83px 4.83px 3.68px 4.83px;border-color:rgba(0,0,0,0.24) rgba(255,255,255,0.62) rgba(255,255,255,0.62) rgba(0,0,0,0.24);background:#d4d4d4;background-clip:padding-box"></div>
<span class="t" style="left:1907px;top:1116.83px;font-size:38px;color:#0a0a14;transform:scaleX(0.9800);">4<span style="letter-spacing:-2.4px">,</span>32</span>
<div style="left:2094.4px;top:1101.3px;width:59.1px;height:58.2px;background:#dbdbdb"></div>
<div style="left:2153.5px;top:1101.3px;width:5px;height:63.2px;background:#5e5e5e"></div>
<div style="left:2096.4px;top:1159.5px;width:62.1px;height:5px;background:#5e5e5e"></div>
<div style="left:2099.4px;top:1105.9px;width:54.1px;height:53.6px;background:#fafafa"></div>
<span class="t" style="left:1324px;top:1181.8px;font-size:34.5px;font-weight:700;color:#000;transform:scaleX(1.0071);">Threshold limit 2</span>
<span class="t" style="left:1629px;top:1181.8px;font-size:34.5px;font-weight:700;color:#000;transform:scaleX(0.9944);">Peak 2 Height</span>
<span class="t" style="left:1893px;top:1181.8px;font-size:34.5px;font-weight:700;color:#000;transform:scaleX(0.9777);">Peak 2 Time</span>
<div style="left:1320.5px;top:1227px;width:257.5px;height:69px;border-style:solid;border-width:2.6px 2.6px 1.56px 2.6px;border-color:rgba(0,0,0,0.05) rgba(255,255,255,0.42) rgba(255,255,255,0.42) rgba(0,0,0,0.05)"></div>
<div style="left:1323.1px;top:1229.6px;width:252.3px;height:64.84px;border-style:solid;border-width:2.8px 2.8px 1.68px 2.8px;border-color:rgba(0,0,0,0.13) rgba(255,255,255,0.52) rgba(255,255,255,0.52) rgba(0,0,0,0.13)"></div>
<div style="left:1325.9px;top:1232.4px;width:246.7px;height:60.36px;border-style:solid;border-width:4.6px 4.6px 2.76px 4.6px;border-color:rgba(0,0,0,0.24) rgba(255,255,255,0.62) rgba(255,255,255,0.62) rgba(0,0,0,0.24);background:#d4d4d4;background-clip:padding-box"></div>
<div style="left:1330.5px;top:1237px;width:230px;height:53px;overflow:hidden"><span class="t" style="left:9px;top:8.33px;font-size:38px;color:#0a0a14;transform:scaleX(0.98)"><span style="letter-spacing:3.3px">-</span>0<span style="letter-spacing:-2.4px">,</span>000329134</span></div>
<div style="left:1625px;top:1226.5px;width:221.5px;height:71.5px;border-style:solid;border-width:2.73px 2.73px 2.08px 2.73px;border-color:rgba(0,0,0,0.05) rgba(255,255,255,0.42) rgba(255,255,255,0.42) rgba(0,0,0,0.05)"></div>
<div style="left:1627.73px;top:1229.23px;width:216.04px;height:66.69px;border-style:solid;border-width:2.94px 2.94px 2.24px 2.94px;border-color:rgba(0,0,0,0.13) rgba(255,255,255,0.52) rgba(255,255,255,0.52) rgba(0,0,0,0.13)"></div>
<div style="left:1630.67px;top:1232.17px;width:210.16px;height:61.51px;border-style:solid;border-width:4.83px 4.83px 3.68px 4.83px;border-color:rgba(0,0,0,0.24) rgba(255,255,255,0.62) rgba(255,255,255,0.62) rgba(0,0,0,0.24);background:#d4d4d4;background-clip:padding-box"></div>
<span class="t" style="left:1647.5px;top:1246.83px;font-size:38px;color:#0a0a14;transform:scaleX(0.9800);">1<span style="letter-spacing:-2.4px">,</span>97853</span>
<div style="left:1887.5px;top:1226.5px;width:189.5px;height:71.5px;border-style:solid;border-width:2.73px 2.73px 2.08px 2.73px;border-color:rgba(0,0,0,0.05) rgba(255,255,255,0.42) rgba(255,255,255,0.42) rgba(0,0,0,0.05)"></div>
<div style="left:1890.23px;top:1229.23px;width:184.04px;height:66.69px;border-style:solid;border-width:2.94px 2.94px 2.24px 2.94px;border-color:rgba(0,0,0,0.13) rgba(255,255,255,0.52) rgba(255,255,255,0.52) rgba(0,0,0,0.13)"></div>
<div style="left:1893.17px;top:1232.17px;width:178.16px;height:61.51px;border-style:solid;border-width:4.83px 4.83px 3.68px 4.83px;border-color:rgba(0,0,0,0.24) rgba(255,255,255,0.62) rgba(255,255,255,0.62) rgba(0,0,0,0.24);background:#d4d4d4;background-clip:padding-box"></div>
<span class="t" style="left:1909px;top:1246.83px;font-size:38px;color:#0a0a14;transform:scaleX(0.9800);">5<span style="letter-spacing:-2.4px">,</span>70667</span>
<div style="left:2094.4px;top:1228.3px;width:59.1px;height:57.2px;background:#dbdbdb"></div>
<div style="left:2153.5px;top:1228.3px;width:5px;height:62.2px;background:#5e5e5e"></div>
<div style="left:2096.4px;top:1285.5px;width:62.1px;height:5px;background:#5e5e5e"></div>
<div style="left:2099.4px;top:1232.9px;width:54.1px;height:52.6px;background:#fffb88"></div>
<div style="left:2203.74px;top:519.84px;width:1097.4px;height:2.63px;background:#dbdbdb"></div>
<div style="left:2203.74px;top:519.84px;width:2.63px;height:802.7px;background:#dbdbdb"></div>
<div style="left:2211.63px;top:1319.91px;width:1089.51px;height:2.63px;background:#dbdbdb"></div>
<div style="left:3298.51px;top:527.73px;width:2.63px;height:794.81px;background:#dbdbdb"></div>
<div style="left:2206.37px;top:522.47px;width:1097.4px;height:2.63px;background:#b9b9b9"></div>
<div style="left:2206.37px;top:522.47px;width:2.63px;height:802.7px;background:#b9b9b9"></div>
<div style="left:2209px;top:1322.54px;width:1094.77px;height:2.63px;background:#b9b9b9"></div>
<div style="left:3301.14px;top:525.1px;width:2.63px;height:800.07px;background:#b9b9b9"></div>
<div style="left:2209px;top:525.1px;width:1089.51px;height:2.63px;background:#565656"></div>
<div style="left:2209px;top:525.1px;width:2.63px;height:794.81px;background:#565656"></div>
<div style="left:2206.37px;top:1325.17px;width:1100.03px;height:2.63px;background:#565656"></div>
<div style="left:3303.77px;top:522.47px;width:2.63px;height:805.33px;background:#565656"></div>
<div style="left:2272.5px;top:581px;width:140.5px;height:77.5px;border-style:solid;border-width:2.6px 2.6px 2.6px 2.6px;border-color:rgba(0,0,0,0.05) rgba(255,255,255,0.42) rgba(255,255,255,0.42) rgba(0,0,0,0.05)"></div>
<div style="left:2275.1px;top:583.6px;width:135.3px;height:72.3px;border-style:solid;border-width:2.8px 2.8px 2.8px 2.8px;border-color:rgba(0,0,0,0.13) rgba(255,255,255,0.52) rgba(255,255,255,0.52) rgba(0,0,0,0.13)"></div>
<div style="left:2277.9px;top:586.4px;width:129.7px;height:66.7px;border-style:solid;border-width:4.6px 4.6px 4.6px 4.6px;border-color:rgba(0,0,0,0.24) rgba(255,255,255,0.62) rgba(255,255,255,0.62) rgba(0,0,0,0.24);background:#fafafa;background-clip:padding-box"></div>
<svg style="left:2238px;top:573.5px" width="36" height="71.5" viewBox="0 0 36 71.5"><ellipse cx="18" cy="35.75" rx="18" ry="35.75" fill="url(#spg)"/><ellipse cx="18" cy="35.75" rx="16.7" ry="34.45" fill="none" stroke="url(#sps)" stroke-width="2.6"/><rect x="1" y="34.25" width="34" height="3" fill="#b4b4b4"/><rect x="1" y="37.25" width="34" height="2" fill="#ececec"/><path d="M12 25.25 L18 11.75" fill="none" stroke="#5e5e5e" stroke-width="2.6"/><path d="M18 11.75 L24 25.25" fill="none" stroke="#9a9a9a" stroke-width="2.6"/><path d="M25 44.75 L11 44.75 L18 59.75" fill="none" stroke="#666" stroke-width="2.6"/><path d="M18 59.75 L25 44.75" fill="none" stroke="#f0f0f0" stroke-width="2.4"/><path d="M12 26.75 L25 26.75" stroke="#f2f2f2" stroke-width="2.6"/></svg>
<span class="t" style="left:2291.5px;top:602.58px;font-size:38px;color:#0a0a14;transform:scaleX(0.9800);">0</span>
<div style="left:2414px;top:534px;width:230.5px;height:42.5px;background:#fafafa"></div>
<span class="t" style="left:2418px;top:539.3px;font-size:34.5px;font-weight:700;color:#000;transform:scaleX(0.9403);">Peak Subset 1</span>
<div style="left:2415px;top:585px;width:335px;height:409px;border-style:solid;border-width:9px;border-color:rgba(0,0,0,.17) rgba(255,255,255,.55) rgba(255,255,255,.55) rgba(0,0,0,.17)"></div>
<div style="left:2425px;top:592.5px;width:261.5px;height:78px;border-style:solid;border-width:10px;border-color:#848484 #b0b0b0 #a9a9a9 #8e8e8e;background:#d3d3d3"></div>
<div style="left:2435px;top:602.5px;width:233px;height:58px;overflow:hidden"><span class="t" style="left:9px;top:11.43px;font-size:38px;color:#0a0a14;transform:scaleX(0.98)"><span style="letter-spacing:3.3px">-</span>0<span style="letter-spacing:-2.4px">,</span>000353866</span></div>
<div style="left:2425px;top:671px;width:261.5px;height:78px;border-style:solid;border-width:10px;border-color:#848484 #b0b0b0 #a9a9a9 #8e8e8e;background:#d3d3d3"></div>
<div style="left:2435px;top:681px;width:233px;height:58px;overflow:hidden"><span class="t" style="left:9px;top:11.43px;font-size:38px;color:#0a0a14;transform:scaleX(0.98)"><span style="letter-spacing:3.3px">-</span>0<span style="letter-spacing:-2.4px">,</span>000255866</span></div>
<div style="left:2425px;top:749.5px;width:261.5px;height:78px;border-style:solid;border-width:10px;border-color:#848484 #b0b0b0 #a9a9a9 #8e8e8e;background:#d3d3d3"></div>
<div style="left:2435px;top:759.5px;width:233px;height:58px;overflow:hidden"><span class="t" style="left:9px;top:11.43px;font-size:38px;color:#0a0a14;transform:scaleX(0.98)"><span style="letter-spacing:3.3px">-</span>0<span style="letter-spacing:-2.4px">,</span>000267866</span></div>
<div style="left:2425px;top:828px;width:261.5px;height:78px;border-style:solid;border-width:10px;border-color:#848484 #b0b0b0 #a9a9a9 #8e8e8e;background:#d3d3d3"></div>
<div style="left:2435px;top:838px;width:233px;height:58px;overflow:hidden"><span class="t" style="left:9px;top:11.43px;font-size:38px;color:#0a0a14;transform:scaleX(0.98)"><span style="letter-spacing:3.3px">-</span>0<span style="letter-spacing:-2.4px">,</span>000280866</span></div>
<div style="left:2425px;top:906.5px;width:261.5px;height:78px;border-style:solid;border-width:10px;border-color:#848484 #b0b0b0 #a9a9a9 #8e8e8e;background:#d3d3d3"></div>
<div style="left:2435px;top:916.5px;width:233px;height:58px;overflow:hidden"><span class="t" style="left:9px;top:11.43px;font-size:38px;color:#0a0a14;transform:scaleX(0.98)"><span style="letter-spacing:3.3px">-</span>0<span style="letter-spacing:-2.4px">,</span>000293866</span></div>
<div style="left:2688.5px;top:594.5px;width:52px;height:390px;background:#f0f0f0"></div>
<div style="left:2689.5px;top:646px;width:50px;height:54px;background:#cdcdcd"></div>
<svg style="left:2694.5px;top:601.5px" width="40" height="40" viewBox="-20 -20 40 40"><polyline points="-11,6.050000000000001 0,-4.95 11,6.050000000000001" fill="none" stroke="#5a5a5a" stroke-width="4.5"/></svg>
<svg style="left:2694.5px;top:937.5px" width="40" height="40" viewBox="-20 -20 40 40"><polyline points="-11,-6.050000000000001 0,4.95 11,-6.050000000000001" fill="none" stroke="#5a5a5a" stroke-width="4.5"/></svg>
<span class="t" style="left:2219px;top:700.8px;font-size:34.5px;font-weight:700;color:#000;transform:scaleX(0.9359);">Size(s) 1</span>
<div style="left:2217px;top:746.5px;width:131.5px;height:74px;border-style:solid;border-width:2.73px 2.73px 2.08px 2.73px;border-color:rgba(0,0,0,0.05) rgba(255,255,255,0.42) rgba(255,255,255,0.42) rgba(0,0,0,0.05)"></div>
<div style="left:2219.73px;top:749.23px;width:126.04px;height:69.19px;border-style:solid;border-width:2.94px 2.94px 2.24px 2.94px;border-color:rgba(0,0,0,0.13) rgba(255,255,255,0.52) rgba(255,255,255,0.52) rgba(0,0,0,0.13)"></div>
<div style="left:2222.67px;top:752.17px;width:120.16px;height:64.01px;border-style:solid;border-width:4.83px 4.83px 3.68px 4.83px;border-color:rgba(0,0,0,0.24) rgba(255,255,255,0.62) rgba(255,255,255,0.62) rgba(0,0,0,0.24);background:#d4d4d4;background-clip:padding-box"></div>
<span class="t" style="left:2238.5px;top:768.08px;font-size:38px;color:#0a0a14;transform:scaleX(0.9800);">1499</span>
<span class="t" style="left:2219px;top:827.8px;font-size:34.5px;font-weight:700;color:#000;transform:scaleX(0.9605);">Fract. index</span>
<span class="t" style="left:2219px;top:870.8px;font-size:34.5px;font-weight:700;color:#000;transform:scaleX(0.8903);">START 1</span>
<div style="left:2217.5px;top:915px;width:155.5px;height:73px;border-style:solid;border-width:2.6px 2.6px 1.56px 2.6px;border-color:rgba(0,0,0,0.05) rgba(255,255,255,0.42) rgba(255,255,255,0.42) rgba(0,0,0,0.05)"></div>
<div style="left:2220.1px;top:917.6px;width:150.3px;height:68.84px;border-style:solid;border-width:2.8px 2.8px 1.68px 2.8px;border-color:rgba(0,0,0,0.13) rgba(255,255,255,0.52) rgba(255,255,255,0.52) rgba(0,0,0,0.13)"></div>
<div style="left:2222.9px;top:920.4px;width:144.7px;height:64.36px;border-style:solid;border-width:4.6px 4.6px 2.76px 4.6px;border-color:rgba(0,0,0,0.24) rgba(255,255,255,0.62) rgba(255,255,255,0.62) rgba(0,0,0,0.24);background:#d4d4d4;background-clip:padding-box"></div>
<div style="left:2227.5px;top:925px;width:127px;height:57px;overflow:hidden"><span class="t" style="left:11px;top:11.83px;font-size:38px;color:#0a0a14;transform:scaleX(0.98)">1<span style="letter-spacing:-2.4px">,</span>25237</span></div>
<span class="t" style="left:2229.5px;top:995.8px;font-size:34.5px;font-weight:700;color:#000;transform:scaleX(0.9628);">Fract. index END 1</span>
<div style="left:2224.5px;top:1039.5px;width:164px;height:75.5px;border-style:solid;border-width:2.73px 2.73px 2.08px 2.73px;border-color:rgba(0,0,0,0.05) rgba(255,255,255,0.42) rgba(255,255,255,0.42) rgba(0,0,0,0.05)"></div>
<div style="left:2227.23px;top:1042.23px;width:158.54px;height:70.69px;border-style:solid;border-width:2.94px 2.94px 2.24px 2.94px;border-color:rgba(0,0,0,0.13) rgba(255,255,255,0.52) rgba(255,255,255,0.52) rgba(0,0,0,0.13)"></div>
<div style="left:2230.17px;top:1045.17px;width:152.66px;height:65.51px;border-style:solid;border-width:4.83px 4.83px 3.68px 4.83px;border-color:rgba(0,0,0,0.24) rgba(255,255,255,0.62) rgba(255,255,255,0.62) rgba(0,0,0,0.24);background:#d4d4d4;background-clip:padding-box"></div>
<span class="t" style="left:2247px;top:1061.83px;font-size:38px;color:#0a0a14;transform:scaleX(0.9800);">1499</span>
<div style="left:2807.5px;top:581px;width:141.5px;height:77.5px;border-style:solid;border-width:2.6px 2.6px 2.6px 2.6px;border-color:rgba(0,0,0,0.05) rgba(255,255,255,0.42) rgba(255,255,255,0.42) rgba(0,0,0,0.05)"></div>
<div style="left:2810.1px;top:583.6px;width:136.3px;height:72.3px;border-style:solid;border-width:2.8px 2.8px 2.8px 2.8px;border-color:rgba(0,0,0,0.13) rgba(255,255,255,0.52) rgba(255,255,255,0.52) rgba(0,0,0,0.13)"></div>
<div style="left:2812.9px;top:586.4px;width:130.7px;height:66.7px;border-style:solid;border-width:4.6px 4.6px 4.6px 4.6px;border-color:rgba(0,0,0,0.24) rgba(255,255,255,0.62) rgba(255,255,255,0.62) rgba(0,0,0,0.24);background:#fafafa;background-clip:padding-box"></div>
<svg style="left:2775px;top:573.5px" width="33" height="71.5" viewBox="0 0 33 71.5"><ellipse cx="16.5" cy="35.75" rx="16.5" ry="35.75" fill="url(#spg)"/><ellipse cx="16.5" cy="35.75" rx="15.2" ry="34.45" fill="none" stroke="url(#sps)" stroke-width="2.6"/><rect x="1" y="34.25" width="31" height="3" fill="#b4b4b4"/><rect x="1" y="37.25" width="31" height="2" fill="#ececec"/><path d="M10.5 25.25 L16.5 11.75" fill="none" stroke="#5e5e5e" stroke-width="2.6"/><path d="M16.5 11.75 L22.5 25.25" fill="none" stroke="#9a9a9a" stroke-width="2.6"/><path d="M23.5 44.75 L9.5 44.75 L16.5 59.75" fill="none" stroke="#666" stroke-width="2.6"/><path d="M16.5 59.75 L23.5 44.75" fill="none" stroke="#f0f0f0" stroke-width="2.4"/><path d="M10.5 26.75 L23.5 26.75" stroke="#f2f2f2" stroke-width="2.6"/></svg>
<span class="t" style="left:2826.5px;top:602.58px;font-size:38px;color:#0a0a14;transform:scaleX(0.9800);">0</span>
<div style="left:2949px;top:534px;width:230.5px;height:42.5px;background:#fffb88"></div>
<span class="t" style="left:2953px;top:539.3px;font-size:34.5px;font-weight:700;color:#000;transform:scaleX(0.9446);">Peak Subset 2</span>
<div style="left:2950px;top:585px;width:325px;height:409px;border-style:solid;border-width:9px;border-color:rgba(0,0,0,.17) rgba(255,255,255,.55) rgba(255,255,255,.55) rgba(0,0,0,.17)"></div>
<div style="left:2960px;top:592.5px;width:252.5px;height:78px;border-style:solid;border-width:10px;border-color:#848484 #b0b0b0 #a9a9a9 #8e8e8e;background:#d3d3d3"></div>
<div style="left:2970px;top:602.5px;width:224px;height:58px;overflow:hidden"><span class="t" style="left:9px;top:11.43px;font-size:38px;color:#0a0a14;transform:scaleX(0.98)">0<span style="letter-spacing:-2.4px">,</span>000572134</span></div>
<div style="left:2960px;top:671px;width:252.5px;height:78px;border-style:solid;border-width:10px;border-color:#848484 #b0b0b0 #a9a9a9 #8e8e8e;background:#d3d3d3"></div>
<div style="left:2970px;top:681px;width:224px;height:58px;overflow:hidden"><span class="t" style="left:9px;top:11.43px;font-size:38px;color:#0a0a14;transform:scaleX(0.98)">0<span style="letter-spacing:-2.4px">,</span>000572134</span></div>
<div style="left:2960px;top:749.5px;width:252.5px;height:78px;border-style:solid;border-width:10px;border-color:#848484 #b0b0b0 #a9a9a9 #8e8e8e;background:#d3d3d3"></div>
<div style="left:2970px;top:759.5px;width:224px;height:58px;overflow:hidden"><span class="t" style="left:9px;top:11.43px;font-size:38px;color:#0a0a14;transform:scaleX(0.98)">0<span style="letter-spacing:-2.4px">,</span>000573134</span></div>
<div style="left:2960px;top:828px;width:252.5px;height:78px;border-style:solid;border-width:10px;border-color:#848484 #b0b0b0 #a9a9a9 #8e8e8e;background:#d3d3d3"></div>
<div style="left:2970px;top:838px;width:224px;height:58px;overflow:hidden"><span class="t" style="left:9px;top:11.43px;font-size:38px;color:#0a0a14;transform:scaleX(0.98)">0<span style="letter-spacing:-2.4px">,</span>000573134</span></div>
<div style="left:2960px;top:906.5px;width:252.5px;height:78px;border-style:solid;border-width:10px;border-color:#848484 #b0b0b0 #a9a9a9 #8e8e8e;background:#d3d3d3"></div>
<div style="left:2970px;top:916.5px;width:224px;height:58px;overflow:hidden"><span class="t" style="left:9px;top:11.43px;font-size:38px;color:#0a0a14;transform:scaleX(0.98)">0<span style="letter-spacing:-2.4px">,</span>000573134</span></div>
<div style="left:3213.5px;top:594.5px;width:51.5px;height:390px;background:#f0f0f0"></div>
<div style="left:3214.5px;top:646px;width:49.5px;height:54px;background:#cdcdcd"></div>
<svg style="left:3219.25px;top:601.5px" width="40" height="40" viewBox="-20 -20 40 40"><polyline points="-11,6.050000000000001 0,-4.95 11,6.050000000000001" fill="none" stroke="#5a5a5a" stroke-width="4.5"/></svg>
<svg style="left:3219.25px;top:937.5px" width="40" height="40" viewBox="-20 -20 40 40"><polyline points="-11,-6.050000000000001 0,4.95 11,-6.050000000000001" fill="none" stroke="#5a5a5a" stroke-width="4.5"/></svg>
<span class="t" style="left:2772px;top:699.8px;font-size:34.5px;font-weight:700;color:#000;transform:scaleX(0.9430);">Size(s) 2</span>
<div style="left:2767px;top:743.5px;width:161px;height:74.5px;border-style:solid;border-width:2.73px 2.73px 2.08px 2.73px;border-color:rgba(0,0,0,0.05) rgba(255,255,255,0.42) rgba(255,255,255,0.42) rgba(0,0,0,0.05)"></div>
<div style="left:2769.73px;top:746.23px;width:155.54px;height:69.69px;border-style:solid;border-width:2.94px 2.94px 2.24px 2.94px;border-color:rgba(0,0,0,0.13) rgba(255,255,255,0.52) rgba(255,255,255,0.52) rgba(0,0,0,0.13)"></div>
<div style="left:2772.67px;top:749.17px;width:149.66px;height:64.51px;border-style:solid;border-width:4.83px 4.83px 3.68px 4.83px;border-color:rgba(0,0,0,0.24) rgba(255,255,255,0.62) rgba(255,255,255,0.62) rgba(0,0,0,0.24);background:#d4d4d4;background-clip:padding-box"></div>
<span class="t" style="left:2790.5px;top:765.33px;font-size:38px;color:#0a0a14;transform:scaleX(0.9800);">1500</span>
<span class="t" style="left:2772px;top:825.8px;font-size:34.5px;font-weight:700;color:#000;transform:scaleX(0.9657);">Fract. index</span>
<span class="t" style="left:2772px;top:868.8px;font-size:34.5px;font-weight:700;color:#000;transform:scaleX(0.9182);">START 2</span>
<div style="left:2767px;top:911.5px;width:156px;height:74px;border-style:solid;border-width:2.73px 2.73px 2.08px 2.73px;border-color:rgba(0,0,0,0.05) rgba(255,255,255,0.42) rgba(255,255,255,0.42) rgba(0,0,0,0.05)"></div>
<div style="left:2769.73px;top:914.23px;width:150.54px;height:69.19px;border-style:solid;border-width:2.94px 2.94px 2.24px 2.94px;border-color:rgba(0,0,0,0.13) rgba(255,255,255,0.52) rgba(255,255,255,0.52) rgba(0,0,0,0.13)"></div>
<div style="left:2772.67px;top:917.17px;width:144.66px;height:64.01px;border-style:solid;border-width:4.83px 4.83px 3.68px 4.83px;border-color:rgba(0,0,0,0.24) rgba(255,255,255,0.62) rgba(255,255,255,0.62) rgba(0,0,0,0.24);background:#d4d4d4;background-clip:padding-box"></div>
<span class="t" style="left:2786.5px;top:933.08px;font-size:38px;color:#0a0a14;transform:scaleX(0.9800);">0</span>
<span class="t" style="left:2772px;top:995.8px;font-size:34.5px;font-weight:700;color:#000;transform:scaleX(0.9710);">Fract. index END 2</span>
<div style="left:2767px;top:1039.5px;width:161px;height:75.5px;border-style:solid;border-width:2.73px 2.73px 2.08px 2.73px;border-color:rgba(0,0,0,0.05) rgba(255,255,255,0.42) rgba(255,255,255,0.42) rgba(0,0,0,0.05)"></div>
<div style="left:2769.73px;top:1042.23px;width:155.54px;height:70.69px;border-style:solid;border-width:2.94px 2.94px 2.24px 2.94px;border-color:rgba(0,0,0,0.13) rgba(255,255,255,0.52) rgba(255,255,255,0.52) rgba(0,0,0,0.13)"></div>
<div style="left:2772.67px;top:1045.17px;width:149.66px;height:65.51px;border-style:solid;border-width:4.83px 4.83px 3.68px 4.83px;border-color:rgba(0,0,0,0.24) rgba(255,255,255,0.62) rgba(255,255,255,0.62) rgba(0,0,0,0.24);background:#d4d4d4;background-clip:padding-box"></div>
<span class="t" style="left:2789.5px;top:1061.83px;font-size:38px;color:#0a0a14;transform:scaleX(0.9800);">1499</span>
<span class="t" style="left:3087.5px;top:1045.8px;font-size:34.5px;font-weight:700;color:#0a14e6;transform:scaleX(0.9451);">Peak area 1</span>
<div style="left:3015.4px;top:1103.3px;width:60.1px;height:57.7px;background:#dbdbdb"></div>
<div style="left:3075.5px;top:1103.3px;width:5px;height:62.7px;background:#5e5e5e"></div>
<div style="left:3017.4px;top:1161px;width:63.1px;height:5px;background:#5e5e5e"></div>
<div style="left:3020.4px;top:1107.9px;width:55.1px;height:53.1px;background:#fafafa"></div>
<div style="left:3082.5px;top:1092px;width:161.5px;height:69.5px;border-style:solid;border-width:2.6px 2.6px 1.56px 2.6px;border-color:rgba(0,0,0,0.05) rgba(255,255,255,0.42) rgba(255,255,255,0.42) rgba(0,0,0,0.05)"></div>
<div style="left:3085.1px;top:1094.6px;width:156.3px;height:65.34px;border-style:solid;border-width:2.8px 2.8px 1.68px 2.8px;border-color:rgba(0,0,0,0.13) rgba(255,255,255,0.52) rgba(255,255,255,0.52) rgba(0,0,0,0.13)"></div>
<div style="left:3087.9px;top:1097.4px;width:150.7px;height:60.86px;border-style:solid;border-width:4.6px 4.6px 2.76px 4.6px;border-color:rgba(0,0,0,0.24) rgba(255,255,255,0.62) rgba(255,255,255,0.62) rgba(0,0,0,0.24);background:#d4d4d4;background-clip:padding-box"></div>
<div style="left:3092.5px;top:1102px;width:137px;height:53.5px;overflow:hidden"><span class="t" style="left:7px;top:8.74px;font-size:39px;font-weight:700;color:#0a14e6;transform:scaleX(1.075)">180,876</span></div>
<span class="t" style="left:3089.5px;top:1174.8px;font-size:34.5px;font-weight:700;color:#0a14e6;transform:scaleX(0.9609);">Peak area 2</span>
<div style="left:3015.4px;top:1228.3px;width:60.1px;height:57.7px;background:#dbdbdb"></div>
<div style="left:3075.5px;top:1228.3px;width:5px;height:62.7px;background:#5e5e5e"></div>
<div style="left:3017.4px;top:1286px;width:63.1px;height:5px;background:#5e5e5e"></div>
<div style="left:3020.4px;top:1232.9px;width:55.1px;height:53.1px;background:#fffb88"></div>
<div style="left:3082.5px;top:1225px;width:161.5px;height:66.5px;border-style:solid;border-width:2.6px 2.6px 1.56px 2.6px;border-color:rgba(0,0,0,0.05) rgba(255,255,255,0.42) rgba(255,255,255,0.42) rgba(0,0,0,0.05)"></div>
<div style="left:3085.1px;top:1227.6px;width:156.3px;height:62.34px;border-style:solid;border-width:2.8px 2.8px 1.68px 2.8px;border-color:rgba(0,0,0,0.13) rgba(255,255,255,0.52) rgba(255,255,255,0.52) rgba(0,0,0,0.13)"></div>
<div style="left:3087.9px;top:1230.4px;width:150.7px;height:57.86px;border-style:solid;border-width:4.6px 4.6px 2.76px 4.6px;border-color:rgba(0,0,0,0.24) rgba(255,255,255,0.62) rgba(255,255,255,0.62) rgba(0,0,0,0.24);background:#d4d4d4;background-clip:padding-box"></div>
<span class="t" style="left:3100.5px;top:1242.74px;font-size:39px;font-weight:700;color:#0a14e6;transform:scaleX(1.0750);">0,4053</span>
<div style="left:3343.04px;top:519.84px;width:1029.5px;height:2.63px;background:#dbdbdb"></div>
<div style="left:3343.04px;top:519.84px;width:2.63px;height:1086.6px;background:#dbdbdb"></div>
<div style="left:3350.93px;top:1603.81px;width:1021.61px;height:2.63px;background:#dbdbdb"></div>
<div style="left:4369.91px;top:527.73px;width:2.63px;height:1078.71px;background:#dbdbdb"></div>
<div style="left:3345.67px;top:522.47px;width:1029.5px;height:2.63px;background:#b9b9b9"></div>
<div style="left:3345.67px;top:522.47px;width:2.63px;height:1086.6px;background:#b9b9b9"></div>
<div style="left:3348.3px;top:1606.44px;width:1026.87px;height:2.63px;background:#b9b9b9"></div>
<div style="left:4372.54px;top:525.1px;width:2.63px;height:1083.97px;background:#b9b9b9"></div>
<div style="left:3348.3px;top:525.1px;width:1021.61px;height:2.63px;background:#565656"></div>
<div style="left:3348.3px;top:525.1px;width:2.63px;height:1078.71px;background:#565656"></div>
<div style="left:3345.67px;top:1609.07px;width:1032.13px;height:2.63px;background:#565656"></div>
<div style="left:4375.17px;top:522.47px;width:2.63px;height:1089.23px;background:#565656"></div>
<span class="t" style="left:3491px;top:538.3px;font-size:34.5px;font-weight:700;color:#0a14e6;transform:scaleX(0.9805);">Overlap x OUT</span>
<span class="t" style="left:4133.5px;top:538.3px;font-size:34.5px;font-weight:700;color:#0a14e6;transform:scaleX(0.9785);">Overlap y OUT</span>
<div style="left:3381px;top:587.5px;width:105.5px;height:77px;border-style:solid;border-width:2.6px 2.6px 2.6px 2.6px;border-color:rgba(0,0,0,0.05) rgba(255,255,255,0.42) rgba(255,255,255,0.42) rgba(0,0,0,0.05)"></div>
<div style="left:3383.6px;top:590.1px;width:100.3px;height:71.8px;border-style:solid;border-width:2.8px 2.8px 2.8px 2.8px;border-color:rgba(0,0,0,0.13) rgba(255,255,255,0.52) rgba(255,255,255,0.52) rgba(0,0,0,0.13)"></div>
<div style="left:3386.4px;top:592.9px;width:94.7px;height:66.2px;border-style:solid;border-width:4.6px 4.6px 4.6px 4.6px;border-color:rgba(0,0,0,0.24) rgba(255,255,255,0.62) rgba(255,255,255,0.62) rgba(0,0,0,0.24);background:#fafafa;background-clip:padding-box"></div>
<svg style="left:3348px;top:580px" width="33" height="71" viewBox="0 0 33 71"><ellipse cx="16.5" cy="35.5" rx="16.5" ry="35.5" fill="url(#spg)"/><ellipse cx="16.5" cy="35.5" rx="15.2" ry="34.2" fill="none" stroke="url(#sps)" stroke-width="2.6"/><rect x="1" y="34" width="31" height="3" fill="#b4b4b4"/><rect x="1" y="37" width="31" height="2" fill="#ececec"/><path d="M10.5 25 L16.5 11.5" fill="none" stroke="#5e5e5e" stroke-width="2.6"/><path d="M16.5 11.5 L22.5 25" fill="none" stroke="#9a9a9a" stroke-width="2.6"/><path d="M23.5 44.5 L9.5 44.5 L16.5 59.5" fill="none" stroke="#666" stroke-width="2.6"/><path d="M16.5 59.5 L23.5 44.5" fill="none" stroke="#f0f0f0" stroke-width="2.4"/><path d="M10.5 26.5 L23.5 26.5" stroke="#f2f2f2" stroke-width="2.6"/></svg>
<span class="t" style="left:3400px;top:608.83px;font-size:38px;color:#0a0a14;transform:scaleX(0.9800);">779</span>
<div style="left:3488px;top:589px;width:198px;height:409px;border-style:solid;border-width:9px;border-color:rgba(0,0,0,.17) rgba(255,255,255,.55) rgba(255,255,255,.55) rgba(0,0,0,.17)"></div>
<div style="left:3497.5px;top:596.5px;width:179.5px;height:78px;border-style:solid;border-width:10px;border-color:#848484 #b0b0b0 #a9a9a9 #8e8e8e;background:#d3d3d3"></div>
<span class="t" style="left:3517.5px;top:617.93px;font-size:38px;color:#0a0a14;transform:scaleX(0.9800);">5<span style="letter-spacing:-2.4px">,</span>6</span>
<div style="left:3497.5px;top:675px;width:179.5px;height:78px;border-style:solid;border-width:10px;border-color:#848484 #b0b0b0 #a9a9a9 #8e8e8e;background:#d3d3d3"></div>
<span class="t" style="left:3517.5px;top:696.43px;font-size:38px;color:#0a0a14;transform:scaleX(0.9800);">5<span style="letter-spacing:-2.4px">,</span>60333</span>
<div style="left:3497.5px;top:754px;width:179.5px;height:78px;border-style:solid;border-width:10px;border-color:#848484 #b0b0b0 #a9a9a9 #8e8e8e;background:#d3d3d3"></div>
<span class="t" style="left:3517.5px;top:775.43px;font-size:38px;color:#0a0a14;transform:scaleX(0.9800);">5<span style="letter-spacing:-2.4px">,</span>60667</span>
<div style="left:3497.5px;top:832.5px;width:179.5px;height:78px;border-style:solid;border-width:10px;border-color:#848484 #b0b0b0 #a9a9a9 #8e8e8e;background:#d3d3d3"></div>
<span class="t" style="left:3517.5px;top:853.93px;font-size:38px;color:#0a0a14;transform:scaleX(0.9800);">5<span style="letter-spacing:-2.4px">,</span>61</span>
<div style="left:3497.5px;top:911px;width:179.5px;height:78px;border-style:solid;border-width:10px;border-color:#848484 #b0b0b0 #a9a9a9 #8e8e8e;background:#d3d3d3"></div>
<span class="t" style="left:3517.5px;top:932.43px;font-size:38px;color:#0a0a14;transform:scaleX(0.9800);">5<span style="letter-spacing:-2.4px">,</span>61333</span>
<span class="t" style="left:3768.5px;top:603.3px;font-size:34.5px;font-weight:700;color:#000;transform:scaleX(0.8990);">y1</span>
<span class="t" style="left:3820px;top:603.3px;font-size:34.5px;color:#000;transform:scaleX(1.0423);">&lt;=</span>
<span class="t" style="left:3874px;top:603.3px;font-size:34.5px;font-weight:700;color:#000;transform:scaleX(0.8579);">y2?</span>
<div style="left:3751px;top:655px;width:102.5px;height:75.5px;border-style:solid;border-width:2.6px 2.6px 2.6px 2.6px;border-color:rgba(0,0,0,0.05) rgba(255,255,255,0.42) rgba(255,255,255,0.42) rgba(0,0,0,0.05)"></div>
<div style="left:3753.6px;top:657.6px;width:97.3px;height:70.3px;border-style:solid;border-width:2.8px 2.8px 2.8px 2.8px;border-color:rgba(0,0,0,0.13) rgba(255,255,255,0.52) rgba(255,255,255,0.52) rgba(0,0,0,0.13)"></div>
<div style="left:3756.4px;top:660.4px;width:91.7px;height:64.7px;border-style:solid;border-width:4.6px 4.6px 4.6px 4.6px;border-color:rgba(0,0,0,0.24) rgba(255,255,255,0.62) rgba(255,255,255,0.62) rgba(0,0,0,0.24);background:#fafafa;background-clip:padding-box"></div>
<svg style="left:3718.5px;top:647px" width="33" height="71" viewBox="0 0 33 71"><ellipse cx="16.5" cy="35.5" rx="16.5" ry="35.5" fill="url(#spg)"/><ellipse cx="16.5" cy="35.5" rx="15.2" ry="34.2" fill="none" stroke="url(#sps)" stroke-width="2.6"/><rect x="1" y="34" width="31" height="3" fill="#b4b4b4"/><rect x="1" y="37" width="31" height="2" fill="#ececec"/><path d="M10.5 25 L16.5 11.5" fill="none" stroke="#5e5e5e" stroke-width="2.6"/><path d="M16.5 11.5 L22.5 25" fill="none" stroke="#9a9a9a" stroke-width="2.6"/><path d="M23.5 44.5 L9.5 44.5 L16.5 59.5" fill="none" stroke="#666" stroke-width="2.6"/><path d="M16.5 59.5 L23.5 44.5" fill="none" stroke="#f0f0f0" stroke-width="2.4"/><path d="M10.5 26.5 L23.5 26.5" stroke="#f2f2f2" stroke-width="2.6"/></svg>
<span class="t" style="left:3770px;top:675.58px;font-size:38px;color:#0a0a14;transform:scaleX(0.9800);">774</span>
<div style="left:3857px;top:657px;width:70px;height:339px;border-style:solid;border-width:8px;border-color:rgba(0,0,0,.17) rgba(255,255,255,.55) rgba(255,255,255,.55) rgba(0,0,0,.17)"></div>
<div style="left:3865px;top:665px;width:54px;height:323px;background:#b0b0b0"></div>
<svg style="left:3867px;top:666px" width="52" height="52" viewBox="-25 -25 52 52"><circle cx="2" cy="2.5" r="22.5" fill="#f6f6f6"/><circle cx="-0.5" cy="-0.5" r="22.5" fill="#8e8e8e"/><circle cx="0" cy="0" r="20" fill="url(#ledoff)"/></svg>
<svg style="left:3867px;top:721px" width="52" height="52" viewBox="-25 -25 52 52"><circle cx="2" cy="2.5" r="22.5" fill="#f6f6f6"/><circle cx="-0.5" cy="-0.5" r="22.5" fill="#8e8e8e"/><circle cx="0" cy="0" r="20" fill="url(#ledoff)"/></svg>
<svg style="left:3867px;top:776px" width="52" height="52" viewBox="-25 -25 52 52"><circle cx="2" cy="2.5" r="22.5" fill="#f6f6f6"/><circle cx="-0.5" cy="-0.5" r="22.5" fill="#8e8e8e"/><circle cx="0" cy="0" r="20" fill="url(#ledon)"/></svg>
<svg style="left:3867px;top:831px" width="52" height="52" viewBox="-25 -25 52 52"><circle cx="2" cy="2.5" r="22.5" fill="#f6f6f6"/><circle cx="-0.5" cy="-0.5" r="22.5" fill="#8e8e8e"/><circle cx="0" cy="0" r="20" fill="url(#ledon)"/></svg>
<svg style="left:3867px;top:886px" width="52" height="52" viewBox="-25 -25 52 52"><circle cx="2" cy="2.5" r="22.5" fill="#f6f6f6"/><circle cx="-0.5" cy="-0.5" r="22.5" fill="#8e8e8e"/><circle cx="0" cy="0" r="20" fill="url(#ledon)"/></svg>
<svg style="left:3867px;top:941px" width="52" height="52" viewBox="-25 -25 52 52"><circle cx="2" cy="2.5" r="22.5" fill="#f6f6f6"/><circle cx="-0.5" cy="-0.5" r="22.5" fill="#8e8e8e"/><circle cx="0" cy="0" r="20" fill="url(#ledon)"/></svg>
<span class="t" style="left:3947.5px;top:853.3px;font-size:34.5px;font-weight:700;color:#000;transform:scaleX(0.9549);">Array size</span>
<div style="left:3940.5px;top:917px;width:146px;height:76px;border-style:solid;border-width:2.73px 2.73px 2.08px 2.73px;border-color:rgba(0,0,0,0.05) rgba(255,255,255,0.42) rgba(255,255,255,0.42) rgba(0,0,0,0.05)"></div>
<div style="left:3943.23px;top:919.73px;width:140.54px;height:71.19px;border-style:solid;border-width:2.94px 2.94px 2.24px 2.94px;border-color:rgba(0,0,0,0.13) rgba(255,255,255,0.52) rgba(255,255,255,0.52) rgba(0,0,0,0.13)"></div>
<div style="left:3946.17px;top:922.67px;width:134.66px;height:66.01px;border-style:solid;border-width:4.83px 4.83px 3.68px 4.83px;border-color:rgba(0,0,0,0.24) rgba(255,255,255,0.62) rgba(255,255,255,0.62) rgba(0,0,0,0.24);background:#d4d4d4;background-clip:padding-box"></div>
<span class="t" style="left:3963px;top:939.58px;font-size:38px;color:#0a0a14;transform:scaleX(0.9800);">1499</span>
<div style="left:4010px;top:587.5px;width:120px;height:77px;border-style:solid;border-width:2.6px 2.6px 2.6px 2.6px;border-color:rgba(0,0,0,0.05) rgba(255,255,255,0.42) rgba(255,255,255,0.42) rgba(0,0,0,0.05)"></div>
<div style="left:4012.6px;top:590.1px;width:114.8px;height:71.8px;border-style:solid;border-width:2.8px 2.8px 2.8px 2.8px;border-color:rgba(0,0,0,0.13) rgba(255,255,255,0.52) rgba(255,255,255,0.52) rgba(0,0,0,0.13)"></div>
<div style="left:4015.4px;top:592.9px;width:109.2px;height:66.2px;border-style:solid;border-width:4.6px 4.6px 4.6px 4.6px;border-color:rgba(0,0,0,0.24) rgba(255,255,255,0.62) rgba(255,255,255,0.62) rgba(0,0,0,0.24);background:#fafafa;background-clip:padding-box"></div>
<svg style="left:3977px;top:580px" width="33" height="71" viewBox="0 0 33 71"><ellipse cx="16.5" cy="35.5" rx="16.5" ry="35.5" fill="url(#spg)"/><ellipse cx="16.5" cy="35.5" rx="15.2" ry="34.2" fill="none" stroke="url(#sps)" stroke-width="2.6"/><rect x="1" y="34" width="31" height="3" fill="#b4b4b4"/><rect x="1" y="37" width="31" height="2" fill="#ececec"/><path d="M10.5 25 L16.5 11.5" fill="none" stroke="#5e5e5e" stroke-width="2.6"/><path d="M16.5 11.5 L22.5 25" fill="none" stroke="#9a9a9a" stroke-width="2.6"/><path d="M23.5 44.5 L9.5 44.5 L16.5 59.5" fill="none" stroke="#666" stroke-width="2.6"/><path d="M16.5 59.5 L23.5 44.5" fill="none" stroke="#f0f0f0" stroke-width="2.4"/><path d="M10.5 26.5 L23.5 26.5" stroke="#f2f2f2" stroke-width="2.6"/></svg>
<span class="t" style="left:4029px;top:608.83px;font-size:38px;color:#0a0a14;transform:scaleX(0.9800);">0</span>
<div style="left:4131px;top:589px;width:209px;height:409px;border-style:solid;border-width:9px;border-color:rgba(0,0,0,.17) rgba(255,255,255,.55) rgba(255,255,255,.55) rgba(0,0,0,.17)"></div>
<div style="left:4141px;top:596.5px;width:190.5px;height:78px;border-style:solid;border-width:10px;border-color:#848484 #b0b0b0 #a9a9a9 #8e8e8e;background:#d3d3d3"></div>
<div style="left:4151px;top:606.5px;width:159px;height:58px;overflow:hidden"><span class="t" style="left:10px;top:11.43px;font-size:38px;color:#0a0a14;transform:scaleX(0.98)"><span style="letter-spacing:3.3px">-</span>0<span style="letter-spacing:-2.4px">,</span>000353</span></div>
<div style="left:4141px;top:675px;width:190.5px;height:78px;border-style:solid;border-width:10px;border-color:#848484 #b0b0b0 #a9a9a9 #8e8e8e;background:#d3d3d3"></div>
<div style="left:4151px;top:685px;width:159px;height:58px;overflow:hidden"><span class="t" style="left:10px;top:11.43px;font-size:38px;color:#0a0a14;transform:scaleX(0.98)"><span style="letter-spacing:3.3px">-</span>0<span style="letter-spacing:-2.4px">,</span>000255</span></div>
<div style="left:4141px;top:754px;width:190.5px;height:78px;border-style:solid;border-width:10px;border-color:#848484 #b0b0b0 #a9a9a9 #8e8e8e;background:#d3d3d3"></div>
<div style="left:4151px;top:764px;width:159px;height:58px;overflow:hidden"><span class="t" style="left:10px;top:11.43px;font-size:38px;color:#0a0a14;transform:scaleX(0.98)"><span style="letter-spacing:3.3px">-</span>0<span style="letter-spacing:-2.4px">,</span>000267</span></div>
<div style="left:4141px;top:832.5px;width:190.5px;height:78px;border-style:solid;border-width:10px;border-color:#848484 #b0b0b0 #a9a9a9 #8e8e8e;background:#d3d3d3"></div>
<div style="left:4151px;top:842.5px;width:159px;height:58px;overflow:hidden"><span class="t" style="left:10px;top:11.43px;font-size:38px;color:#0a0a14;transform:scaleX(0.98)"><span style="letter-spacing:3.3px">-</span>0<span style="letter-spacing:-2.4px">,</span>000280</span></div>
<div style="left:4141px;top:911px;width:190.5px;height:78px;border-style:solid;border-width:10px;border-color:#848484 #b0b0b0 #a9a9a9 #8e8e8e;background:#d3d3d3"></div>
<div style="left:4151px;top:921px;width:159px;height:58px;overflow:hidden"><span class="t" style="left:10px;top:11.43px;font-size:38px;color:#0a0a14;transform:scaleX(0.98)"><span style="letter-spacing:3.3px">-</span>0<span style="letter-spacing:-2.4px">,</span>000293</span></div>
<span class="t" style="left:3691px;top:1043.3px;font-size:34.5px;font-weight:700;color:#0a14e6;transform:scaleX(0.9657);">Fraction of Peak 1</span>
<div style="left:3687px;top:1089.5px;width:247px;height:74.5px;border-style:solid;border-width:2.73px 2.73px 2.08px 2.73px;border-color:rgba(0,0,0,0.05) rgba(255,255,255,0.42) rgba(255,255,255,0.42) rgba(0,0,0,0.05)"></div>
<div style="left:3689.73px;top:1092.23px;width:241.54px;height:69.69px;border-style:solid;border-width:2.94px 2.94px 2.24px 2.94px;border-color:rgba(0,0,0,0.13) rgba(255,255,255,0.52) rgba(255,255,255,0.52) rgba(0,0,0,0.13)"></div>
<div style="left:3692.67px;top:1095.17px;width:235.66px;height:64.51px;border-style:solid;border-width:4.83px 4.83px 3.68px 4.83px;border-color:rgba(0,0,0,0.24) rgba(255,255,255,0.62) rgba(255,255,255,0.62) rgba(0,0,0,0.24);background:#d4d4d4;background-clip:padding-box"></div>
<span class="t" style="left:3702.5px;top:1110.49px;font-size:39px;font-weight:700;color:#0a14e6;transform:scaleX(1.0750);">0,0009</span>
<div style="left:3936.4px;top:1096.3px;width:57.6px;height:57.2px;background:#dbdbdb"></div>
<div style="left:3994px;top:1096.3px;width:5px;height:62.2px;background:#5e5e5e"></div>
<div style="left:3938.4px;top:1153.5px;width:60.6px;height:5px;background:#5e5e5e"></div>
<div style="left:3941.4px;top:1100.9px;width:52.6px;height:52.6px;background:#fafafa"></div>
<span class="t" style="left:3381px;top:1093.3px;font-size:34.5px;font-weight:700;color:#0a14e6;transform:scaleX(0.9823);">Overlapping Area</span>
<div style="left:3376.5px;top:1139.5px;width:247.5px;height:73.5px;border-style:solid;border-width:2.73px 2.73px 2.08px 2.73px;border-color:rgba(0,0,0,0.05) rgba(255,255,255,0.42) rgba(255,255,255,0.42) rgba(0,0,0,0.05)"></div>
<div style="left:3379.23px;top:1142.23px;width:242.04px;height:68.69px;border-style:solid;border-width:2.94px 2.94px 2.24px 2.94px;border-color:rgba(0,0,0,0.13) rgba(255,255,255,0.52) rgba(255,255,255,0.52) rgba(0,0,0,0.13)"></div>
<div style="left:3382.17px;top:1145.17px;width:236.16px;height:63.51px;border-style:solid;border-width:4.83px 4.83px 3.68px 4.83px;border-color:rgba(0,0,0,0.24) rgba(255,255,255,0.62) rgba(255,255,255,0.62) rgba(0,0,0,0.24);background:#d4d4d4;background-clip:padding-box"></div>
<span class="t" style="left:3393px;top:1159.99px;font-size:39px;font-weight:700;color:#0a14e6;transform:scaleX(1.0750);">0,1629</span>
<span class="t" style="left:4017px;top:1085.8px;font-size:34.5px;font-weight:700;color:#0a14e6;transform:scaleX(0.9858);">Fraction of Total Area</span>
<div style="left:4058px;top:1132px;width:248.5px;height:74.5px;border-style:solid;border-width:2.73px 2.73px 2.08px 2.73px;border-color:rgba(0,0,0,0.05) rgba(255,255,255,0.42) rgba(255,255,255,0.42) rgba(0,0,0,0.05)"></div>
<div style="left:4060.73px;top:1134.73px;width:243.04px;height:69.69px;border-style:solid;border-width:2.94px 2.94px 2.24px 2.94px;border-color:rgba(0,0,0,0.13) rgba(255,255,255,0.52) rgba(255,255,255,0.52) rgba(0,0,0,0.13)"></div>
<div style="left:4063.67px;top:1137.67px;width:237.16px;height:64.51px;border-style:solid;border-width:4.83px 4.83px 3.68px 4.83px;border-color:rgba(0,0,0,0.24) rgba(255,255,255,0.62) rgba(255,255,255,0.62) rgba(0,0,0,0.24);background:#d4d4d4;background-clip:padding-box"></div>
<span class="t" style="left:4075.5px;top:1152.99px;font-size:39px;font-weight:700;color:#0a14e6;transform:scaleX(1.0750);">0,0009</span>
<span class="t" style="left:3693.5px;top:1172.3px;font-size:34.5px;font-weight:700;color:#0a14e6;transform:scaleX(0.9758);">Fraction of Peak 2</span>
<div style="left:3689.5px;top:1218px;width:247px;height:75px;border-style:solid;border-width:2.73px 2.73px 2.08px 2.73px;border-color:rgba(0,0,0,0.05) rgba(255,255,255,0.42) rgba(255,255,255,0.42) rgba(0,0,0,0.05)"></div>
<div style="left:3692.23px;top:1220.73px;width:241.54px;height:70.19px;border-style:solid;border-width:2.94px 2.94px 2.24px 2.94px;border-color:rgba(0,0,0,0.13) rgba(255,255,255,0.52) rgba(255,255,255,0.52) rgba(0,0,0,0.13)"></div>
<div style="left:3695.17px;top:1223.67px;width:235.66px;height:65.01px;border-style:solid;border-width:4.83px 4.83px 3.68px 4.83px;border-color:rgba(0,0,0,0.24) rgba(255,255,255,0.62) rgba(255,255,255,0.62) rgba(0,0,0,0.24);background:#d4d4d4;background-clip:padding-box"></div>
<span class="t" style="left:3706px;top:1239.24px;font-size:39px;font-weight:700;color:#0a14e6;transform:scaleX(1.0750);">0,4018</span>
<div style="left:3936.4px;top:1226.3px;width:57.6px;height:57.2px;background:#dbdbdb"></div>
<div style="left:3994px;top:1226.3px;width:5px;height:62.2px;background:#5e5e5e"></div>
<div style="left:3938.4px;top:1283.5px;width:60.6px;height:5px;background:#5e5e5e"></div>
<div style="left:3941.4px;top:1230.9px;width:52.6px;height:52.6px;background:#fffb88"></div>
<span class="t" style="left:3379.5px;top:1318.3px;font-size:34.5px;font-weight:700;color:#000;transform:scaleX(0.9708);">Fract i ST Higher</span>
<div style="left:3374.5px;top:1362px;width:183.5px;height:72.5px;border-style:solid;border-width:2.73px 2.73px 2.08px 2.73px;border-color:rgba(0,0,0,0.05) rgba(255,255,255,0.42) rgba(255,255,255,0.42) rgba(0,0,0,0.05)"></div>
<div style="left:3377.23px;top:1364.73px;width:178.04px;height:67.69px;border-style:solid;border-width:2.94px 2.94px 2.24px 2.94px;border-color:rgba(0,0,0,0.13) rgba(255,255,255,0.52) rgba(255,255,255,0.52) rgba(0,0,0,0.13)"></div>
<div style="left:3380.17px;top:1367.67px;width:172.16px;height:62.51px;border-style:solid;border-width:4.83px 4.83px 3.68px 4.83px;border-color:rgba(0,0,0,0.24) rgba(255,255,255,0.62) rgba(255,255,255,0.62) rgba(0,0,0,0.24);background:#d4d4d4;background-clip:padding-box"></div>
<span class="t" style="left:3396px;top:1382.83px;font-size:38px;color:#0a0a14;transform:scaleX(0.9800);">1<span style="letter-spacing:-2.4px">,</span>25237</span>
<span class="t" style="left:3685px;top:1324.3px;font-size:34.5px;font-weight:700;color:#000;transform:scaleX(1.0006);">Overlap. y min.</span>
<div style="left:3681.5px;top:1367px;width:178.5px;height:72.5px;border-style:solid;border-width:2.73px 2.73px 2.08px 2.73px;border-color:rgba(0,0,0,0.05) rgba(255,255,255,0.42) rgba(255,255,255,0.42) rgba(0,0,0,0.05)"></div>
<div style="left:3684.23px;top:1369.73px;width:173.04px;height:67.69px;border-style:solid;border-width:2.94px 2.94px 2.24px 2.94px;border-color:rgba(0,0,0,0.13) rgba(255,255,255,0.52) rgba(255,255,255,0.52) rgba(0,0,0,0.13)"></div>
<div style="left:3687.17px;top:1372.67px;width:167.16px;height:62.51px;border-style:solid;border-width:4.83px 4.83px 3.68px 4.83px;border-color:rgba(0,0,0,0.24) rgba(255,255,255,0.62) rgba(255,255,255,0.62) rgba(0,0,0,0.24);background:#d4d4d4;background-clip:padding-box"></div>
<span class="t" style="left:3697px;top:1387.83px;font-size:38px;color:#0a0a14;transform:scaleX(0.9800);"><span style="letter-spacing:3.3px">-</span>0<span style="letter-spacing:-2.4px">,</span>0015</span>
<span class="t" style="left:3996px;top:1340.8px;font-size:34.5px;font-weight:700;color:#f00;transform:scaleX(0.9876);">Plot overlapping area</span>
<svg style="left:3992px;top:1389.5px" width="112" height="46.5" viewBox="-3 -3 112 46.5"><ellipse cx="54" cy="21.75" rx="51" ry="18.25" fill="#fbfbfb"/><ellipse cx="51" cy="18.25" rx="51" ry="18.25" fill="#8a8a8a"/><ellipse cx="51.5" cy="19.05" rx="48" ry="15.25" fill="#2bff16"/><ellipse cx="64.77" cy="19.75" rx="37.23" ry="14.75" fill="#2a2a2a"/><ellipse cx="64.26" cy="18.55" rx="36.72" ry="13.75" fill="url(#knob)"/></svg>
<span class="t" style="left:3379.5px;top:1460.8px;font-size:34.5px;font-weight:700;color:#000;transform:scaleX(0.9642);">Fract i END Lower</span>
<div style="left:3374.5px;top:1503.5px;width:162px;height:73px;border-style:solid;border-width:2.73px 2.73px 2.08px 2.73px;border-color:rgba(0,0,0,0.05) rgba(255,255,255,0.42) rgba(255,255,255,0.42) rgba(0,0,0,0.05)"></div>
<div style="left:3377.23px;top:1506.23px;width:156.54px;height:68.19px;border-style:solid;border-width:2.94px 2.94px 2.24px 2.94px;border-color:rgba(0,0,0,0.13) rgba(255,255,255,0.52) rgba(255,255,255,0.52) rgba(0,0,0,0.13)"></div>
<div style="left:3380.17px;top:1509.17px;width:150.66px;height:63.01px;border-style:solid;border-width:4.83px 4.83px 3.68px 4.83px;border-color:rgba(0,0,0,0.24) rgba(255,255,255,0.62) rgba(255,255,255,0.62) rgba(0,0,0,0.24);background:#d4d4d4;background-clip:padding-box"></div>
<span class="t" style="left:3395px;top:1524.58px;font-size:38px;color:#0a0a14;transform:scaleX(0.9800);">1499</span>
<span class="t" style="left:3687.5px;top:1460.8px;font-size:34.5px;font-weight:700;color:#000;transform:scaleX(0.9880);">Overlap. y max.</span>
<div style="left:3683px;top:1502px;width:185px;height:72.5px;border-style:solid;border-width:2.73px 2.73px 2.08px 2.73px;border-color:rgba(0,0,0,0.05) rgba(255,255,255,0.42) rgba(255,255,255,0.42) rgba(0,0,0,0.05)"></div>
<div style="left:3685.73px;top:1504.73px;width:179.54px;height:67.69px;border-style:solid;border-width:2.94px 2.94px 2.24px 2.94px;border-color:rgba(0,0,0,0.13) rgba(255,255,255,0.52) rgba(255,255,255,0.52) rgba(0,0,0,0.13)"></div>
<div style="left:3688.67px;top:1507.67px;width:173.66px;height:62.51px;border-style:solid;border-width:4.83px 4.83px 3.68px 4.83px;border-color:rgba(0,0,0,0.24) rgba(255,255,255,0.62) rgba(255,255,255,0.62) rgba(0,0,0,0.24);background:#d4d4d4;background-clip:padding-box"></div>
<span class="t" style="left:3698.5px;top:1522.83px;font-size:38px;color:#0a0a14;transform:scaleX(0.9800);">0<span style="letter-spacing:-2.4px">,</span>4306</span>
<span class="t" style="left:4000px;top:1457.83px;font-size:38px;color:#0a0a14;transform:scaleX(0.9991);">Overlap size</span>
<div style="left:3996.5px;top:1507px;width:141.5px;height:73.5px;border-style:solid;border-width:2.73px 2.73px 2.08px 2.73px;border-color:rgba(0,0,0,0.05) rgba(255,255,255,0.42) rgba(255,255,255,0.42) rgba(0,0,0,0.05)"></div>
<div style="left:3999.23px;top:1509.73px;width:136.04px;height:68.69px;border-style:solid;border-width:2.94px 2.94px 2.24px 2.94px;border-color:rgba(0,0,0,0.13) rgba(255,255,255,0.52) rgba(255,255,255,0.52) rgba(0,0,0,0.13)"></div>
<div style="left:4002.17px;top:1512.67px;width:130.16px;height:63.51px;border-style:solid;border-width:4.83px 4.83px 3.68px 4.83px;border-color:rgba(0,0,0,0.24) rgba(255,255,255,0.62) rgba(255,255,255,0.62) rgba(0,0,0,0.24);background:#d4d4d4;background-clip:padding-box"></div>
<span class="t" style="left:4017px;top:1528.33px;font-size:38px;color:#0a0a14;transform:scaleX(0.9800);">1499</span>
<span class="t" style="left:408px;top:1355.33px;font-size:38px;color:#0a0a14;transform:scaleX(0.9469);">XY Graph</span>
<div style="left:34.5px;top:1412px;width:349.5px;height:294px;background:linear-gradient(90deg,#dcdcdc 0,#c2c2c2 34px,#c0c0c0 306px,#b4b4b4 320px,#7c7c7c 349px)"></div>
<div style="left:34.5px;top:1412px;width:349.5px;height:4px;background:linear-gradient(90deg,rgba(255,255,255,.55),rgba(255,255,255,.3) 88%,rgba(255,255,255,0))"></div>
<div style="left:34.5px;top:1702px;width:349.5px;height:4px;background:linear-gradient(90deg,rgba(0,0,0,.0),rgba(0,0,0,.25) 10%,rgba(0,0,0,.38))"></div>
<div style="left:71px;top:1423px;width:34px;height:33.5px;background:#fbfbfb;border:2.6px solid #4a4a4a;box-sizing:border-box"></div>
<svg style="left:71px;top:1423px" width="34" height="34" viewBox="0 0 34 34"><polyline points="6.5,15.5 13,22 27.5,8" fill="none" stroke="#686868" stroke-width="3.4"/></svg>
<span class="t" style="left:125px;top:1428.83px;font-size:38px;color:#0a0a14;transform:scaleX(0.9129);">Peak 1</span>
<div style="left:270px;top:1417px;width:76px;height:62.5px;background:#d6d6d6"></div>
<div style="left:271.5px;top:1418.5px;width:73px;height:59.5px;background:#000"></div>
<svg style="left:271.5px;top:1418.5px" width="73" height="60" viewBox="0 0 73 60"><polyline points="5,48 26,8 47,48 69,8" fill="none" stroke="#fff" stroke-width="2.7"/></svg>
<div style="left:71px;top:1496.5px;width:34px;height:33.5px;background:#fbfbfb;border:2.6px solid #4a4a4a;box-sizing:border-box"></div>
<svg style="left:71px;top:1496.5px" width="34" height="34" viewBox="0 0 34 34"><polyline points="6.5,15.5 13,22 27.5,8" fill="none" stroke="#686868" stroke-width="3.4"/></svg>
<span class="t" style="left:125px;top:1502.33px;font-size:38px;color:#0a0a14;transform:scaleX(0.9298);">Peak 2</span>
<div style="left:270px;top:1490.5px;width:76px;height:62.5px;background:#d6d6d6"></div>
<div style="left:271.5px;top:1492px;width:73px;height:59.5px;background:#000"></div>
<svg style="left:271.5px;top:1492px" width="73" height="60" viewBox="0 0 73 60"><polyline points="5,48 26,8 47,48 69,8" fill="none" stroke="#ffdc00" stroke-width="2.7"/></svg>
<div style="left:71px;top:1570px;width:34px;height:33.5px;background:#fbfbfb;border:2.6px solid #4a4a4a;box-sizing:border-box"></div>
<svg style="left:71px;top:1570px" width="34" height="34" viewBox="0 0 34 34"><polyline points="6.5,15.5 13,22 27.5,8" fill="none" stroke="#686868" stroke-width="3.4"/></svg>
<span class="t" style="left:125px;top:1575.83px;font-size:38px;color:#0a0a14;transform:scaleX(1.0113);">TH lim</span>
<div style="left:270px;top:1564px;width:76px;height:62.5px;background:#d6d6d6"></div>
<div style="left:271.5px;top:1565.5px;width:73px;height:59.5px;background:#000"></div>
<svg style="left:271.5px;top:1565.5px" width="73" height="60" viewBox="0 0 73 60"><path d="M4 26 L21 26 L31 6 L42 26 L69 26 L58 47 L45 26 L20 26 L5 47 Z" fill="#0000ff"/></svg>
<div style="left:71px;top:1643.5px;width:34px;height:33.5px;background:#fbfbfb;border:2.6px solid #4a4a4a;box-sizing:border-box"></div>
<svg style="left:71px;top:1643.5px" width="34" height="34" viewBox="0 0 34 34"><polyline points="6.5,15.5 13,22 27.5,8" fill="none" stroke="#686868" stroke-width="3.4"/></svg>
<span class="t" style="left:125px;top:1649.33px;font-size:38px;color:#0a0a14;transform:scaleX(0.9917);">Overlp</span>
<div style="left:270px;top:1637.5px;width:76px;height:62.5px;background:#d6d6d6"></div>
<div style="left:271.5px;top:1639px;width:73px;height:59.5px;background:#000"></div>
<svg style="left:271.5px;top:1639px" width="73" height="60" viewBox="0 0 73 60"><path d="M4 26 L21 26 L31 6 L42 26 L69 26 L58 47 L45 26 L20 26 L5 47 Z" fill="#52ff3c"/></svg>
<div style="left:143px;top:1728px;width:235px;height:62px;background:linear-gradient(90deg,#d8d8d8 0,#c2c2c2 22px,#bfbfbf 185px,#8c8c8c 235px)"></div>
<div style="left:143px;top:1728px;width:235px;height:3px;background:rgba(255,255,255,.45)"></div>
<div style="left:143px;top:1787px;width:235px;height:3px;background:rgba(0,0,0,.22)"></div>
<div style="left:179px;top:1738px;width:52px;height:42px;background:#8d8d8d;border-style:solid;border-width:2.6px;border-color:#6a6a6a #b4b4b4 #b4b4b4 #6a6a6a;box-sizing:border-box"></div>
<div style="left:237px;top:1738px;width:44px;height:42px;background:#bcbcbc;border-style:solid;border-width:2.6px;border-color:#dcdcdc #8c8c8c #8c8c8c #dcdcdc;box-sizing:border-box"></div>
<div style="left:291.5px;top:1738px;width:49.5px;height:42px;background:#bcbcbc;border-style:solid;border-width:2.6px;border-color:#dcdcdc #8c8c8c #8c8c8c #dcdcdc;box-sizing:border-box"></div>
<svg style="left:179px;top:1738px" width="165" height="44" viewBox="179 1738 165 44"><path d="M193 1760 L224 1760 M207 1746 L207 1777" stroke="#111" stroke-width="2.6"/><circle cx="207" cy="1760" r="3" fill="#8d8d8d" stroke="#111" stroke-width="1.6"/><rect x="186" y="1743" width="6" height="6" fill="#3cff28"/><rect x="242" y="1744" width="6" height="6" fill="#4a9a3a"/><circle cx="264" cy="1754" r="8.5" fill="#e4e4ff" stroke="#111" stroke-width="2.4"/><path d="M259.5 1754 L268.5 1754 M264 1749.5 L264 1758.5" stroke="#111" stroke-width="2.2"/><path d="M258 1761 L244 1775" stroke="#111" stroke-width="4.2"/><path d="M265 1772 L277 1772 L271 1778 Z" fill="#111"/><rect x="296" y="1744" width="6" height="6" fill="#4a9a3a"/><path d="M306 1766 C303 1761 306 1758 309 1762 L309 1751 C309 1748 313 1748 313 1751 L313 1748 C313 1745 317 1745 317 1748 L317 1750 C317 1747 321 1747 321 1750 L321 1753 C321 1750 325 1750 325 1754 L325 1767 C325 1773 321 1776 316 1776 C311 1776 309 1772 306 1766 Z M313 1751 L313 1760 M317 1750 L317 1760 M321 1753 L321 1761" fill="#e8e8e8" stroke="#111" stroke-width="1.9"/></svg>
<div style="left:389.5px;top:1408px;width:898px;height:787px;background:linear-gradient(90deg,#d6d6d6 0,#c4c4c4 26px,#c0c0c0 860px,#b8b8b8 872px,#6e6e6e 898px)"></div>
<div style="left:389.5px;top:1408px;width:898px;height:4px;background:linear-gradient(90deg,rgba(255,255,255,.5),rgba(255,255,255,.3) 94%,rgba(255,255,255,0))"></div>
<div style="left:389.5px;top:2191px;width:898px;height:4px;background:linear-gradient(90deg,rgba(0,0,0,0),rgba(0,0,0,.28) 5%,rgba(0,0,0,.4))"></div>
<div style="left:637.5px;top:1429.5px;width:589.5px;height:645px;border-style:solid;border-width:2.5px;border-color:#8a8a8a #dedede #dedede #8a8a8a;box-sizing:border-box"></div>
<svg style="left:639.5px;top:1431.5px" width="585" height="640.5" viewBox="639.5 1431.5 585 640.5"><rect x="639.5" y="1431.5" width="585.0" height="640.5" fill="#000"/><path d="M671.05 1431.5 V2072 M700.1 1431.5 V2072 M729.15 1431.5 V2072 M787.25 1431.5 V2072 M816.3 1431.5 V2072 M845.35 1431.5 V2072 M903.45 1431.5 V2072 M932.5 1431.5 V2072 M961.55 1431.5 V2072 M1019.65 1431.5 V2072 M1048.7 1431.5 V2072 M1077.75 1431.5 V2072 M1135.85 1431.5 V2072 M1164.9 1431.5 V2072 M1193.95 1431.5 V2072 M639.5 2042.4 H1224.5 M639.5 2026.8 H1224.5 M639.5 2011.2 H1224.5 M639.5 1995.6 H1224.5 M639.5 1980 H1224.5 M639.5 1964.4 H1224.5 M639.5 1948.8 H1224.5 M639.5 1917.6 H1224.5 M639.5 1902 H1224.5 M639.5 1886.4 H1224.5 M639.5 1870.8 H1224.5 M639.5 1855.2 H1224.5 M639.5 1839.6 H1224.5 M639.5 1824 H1224.5 M639.5 1792.8 H1224.5 M639.5 1777.2 H1224.5 M639.5 1761.6 H1224.5 M639.5 1746 H1224.5 M639.5 1730.4 H1224.5 M639.5 1714.8 H1224.5 M639.5 1699.2 H1224.5 M639.5 1668 H1224.5 M639.5 1652.4 H1224.5 M639.5 1636.8 H1224.5 M639.5 1621.2 H1224.5 M639.5 1605.6 H1224.5 M639.5 1590 H1224.5 M639.5 1574.4 H1224.5 M639.5 1543.2 H1224.5 M639.5 1527.6 H1224.5 M639.5 1512 H1224.5 M639.5 1496.4 H1224.5 M639.5 1480.8 H1224.5 M639.5 1465.2 H1224.5 M639.5 1449.6 H1224.5 M639.5 1434 H1224.5 M642 1431.5 V2072" stroke="#4a4300" stroke-width="2.6" fill="none"/><path d="M758.2 1431.5 V2072 M874.4 1431.5 V2072 M990.6 1431.5 V2072 M1106.8 1431.5 V2072 M639.5 2058 H1224.5 M639.5 1933.2 H1224.5 M639.5 1808.4 H1224.5 M639.5 1683.6 H1224.5 M639.5 1558.8 H1224.5" stroke="#948a00" stroke-width="2.6" fill="none"/><path d="M962 2058 L964 2003 L966.5 1797 L968.3 1796 L976 1822 L984.5 1847 L985.8 1925 L989 1989 L994 2030 L1000.5 2043 L1014 2052 L1027.5 2056 L1040 2058 Z" fill="#50ff3c"/><path d="M961.6 2058.5 H1055.8 M1063.8 2058.5 H1089.4 M1102.8 2058.5 H1107" stroke="#0000ff" stroke-width="3.2" fill="none"/><path d="M642 2057.5 L945.5 2057.5 L948 2061 L955 2061 L958 2056 L960 2050 L964 2003 L966.4 1900 L967.5 1431 M978.2 1431 L978.2 1543.6 L981.8 1543.6 L981.8 1784.6 L983.7 1784.6 L985.8 1925 L989 1989.4 L993.9 2029.8 L1000.6 2043 L1014 2052 L1027.5 2056 L1059 2056.5 L1061 2060 L1064 2056.5 L1092 2056.5 L1094 2060 L1098 2060 L1101 2055 L1107 2056" stroke="#ffdc00" stroke-width="2.4" fill="none" stroke-linejoin="round"/><path d="M815 2058 L858 2058 L858 2044.6 L860.7 2044.6 L860.7 1864 L863.5 1864 L863.5 1431 M933.6 1431 L936 1470 L938 1509.6 L940.7 1557.9 L945.4 1640 L950.4 1700.7 L955 1738 L960.5 1768 L968.3 1795.7 L984.5 1846.9 L995.2 1879 L1008.7 1916.8 L1022 1943.7 L1038.3 1968 L1057 1989.4 L1076 2007 L1092 2019 L1106.9 2023" stroke="#fff" stroke-width="2.4" fill="none" stroke-linejoin="round"/></svg>
<div style="left:623px;top:1432.7px;width:12.5px;height:2.6px;background:#1a1a1a"></div>
<span class="t" style="left:596.29px;top:1415.33px;font-size:38px;color:#0a0a14;transform:scaleX(0.9800);">1</span>
<div style="left:623px;top:1557.5px;width:12.5px;height:2.6px;background:#1a1a1a"></div>
<span class="t" style="left:565.23px;top:1540.13px;font-size:38px;color:#0a0a14;transform:scaleX(0.9800);">0<span style="letter-spacing:-2.4px">,</span>8</span>
<div style="left:623px;top:1682.3px;width:12.5px;height:2.6px;background:#1a1a1a"></div>
<span class="t" style="left:565.23px;top:1664.93px;font-size:38px;color:#0a0a14;transform:scaleX(0.9800);">0<span style="letter-spacing:-2.4px">,</span>6</span>
<div style="left:623px;top:1807.1px;width:12.5px;height:2.6px;background:#1a1a1a"></div>
<span class="t" style="left:565.23px;top:1789.73px;font-size:38px;color:#0a0a14;transform:scaleX(0.9800);">0<span style="letter-spacing:-2.4px">,</span>4</span>
<div style="left:623px;top:1931.9px;width:12.5px;height:2.6px;background:#1a1a1a"></div>
<span class="t" style="left:565.23px;top:1914.53px;font-size:38px;color:#0a0a14;transform:scaleX(0.9800);">0<span style="letter-spacing:-2.4px">,</span>2</span>
<div style="left:623px;top:2056.7px;width:12.5px;height:2.6px;background:#1a1a1a"></div>
<div style="left:623px;top:2069.2px;width:12.5px;height:2.6px;background:#1a1a1a"></div>
<span class="t" style="left:532.62px;top:2052.83px;font-size:38px;color:#0a0a14;transform:scaleX(0.9800);"><span style="letter-spacing:3.3px">-</span>0<span style="letter-spacing:-2.4px">,</span>02</span>
<div style="left:640.7px;top:2078px;width:2.6px;height:13px;background:#1a1a1a"></div>
<span class="t" style="left:631.64px;top:2100.33px;font-size:38px;color:#0a0a14;transform:scaleX(0.9800);">0</span>
<div style="left:756.9px;top:2078px;width:2.6px;height:13px;background:#1a1a1a"></div>
<span class="t" style="left:747.84px;top:2100.33px;font-size:38px;color:#0a0a14;transform:scaleX(0.9800);">2</span>
<div style="left:873.1px;top:2078px;width:2.6px;height:13px;background:#1a1a1a"></div>
<span class="t" style="left:864.04px;top:2100.33px;font-size:38px;color:#0a0a14;transform:scaleX(0.9800);">4</span>
<div style="left:989.3px;top:2078px;width:2.6px;height:13px;background:#1a1a1a"></div>
<span class="t" style="left:980.24px;top:2100.33px;font-size:38px;color:#0a0a14;transform:scaleX(0.9800);">6</span>
<div style="left:1105.5px;top:2078px;width:2.6px;height:13px;background:#1a1a1a"></div>
<span class="t" style="left:1096.44px;top:2100.33px;font-size:38px;color:#0a0a14;transform:scaleX(0.9800);">8</span>
<div style="left:1221.7px;top:2078px;width:2.6px;height:13px;background:#1a1a1a"></div>
<span class="t" style="left:1202.29px;top:2100.33px;font-size:38px;color:#0a0a14;transform:scaleX(0.9800);">10</span>
<span class="t" style="left:878px;top:2157.83px;font-size:38px;color:#0a0a14;transform:scaleX(0.9947);">Time</span>
<span class="t" style="left:478.5px;top:1846px;font-size:38px;color:#0a0a14;transform-origin:0 0;transform:rotate(-90deg) scaleX(1.0948);line-height:1">Amplitude</span>
<span class="t" style="left:1350.5px;top:1364.33px;font-size:38px;color:#0a0a14;transform:scaleX(1.0011);">Array IN</span>
<span class="t" style="left:1613px;top:1364.33px;font-size:38px;color:#0a0a14;transform:scaleX(1.0000);">x</span>
<span class="t" style="left:1831.5px;top:1364.33px;font-size:38px;color:#0a0a14;transform:scaleX(0.9717);">y1</span>
<span class="t" style="left:2075.5px;top:1364.33px;font-size:38px;color:#0a0a14;transform:scaleX(1.0589);">y2</span>
<div style="left:1332px;top:1411.5px;width:176px;height:76px;border-style:solid;border-width:2.6px 2.6px 2.6px 2.6px;border-color:rgba(0,0,0,0.05) rgba(255,255,255,0.42) rgba(255,255,255,0.42) rgba(0,0,0,0.05)"></div>
<div style="left:1334.6px;top:1414.1px;width:170.8px;height:70.8px;border-style:solid;border-width:2.8px 2.8px 2.8px 2.8px;border-color:rgba(0,0,0,0.13) rgba(255,255,255,0.52) rgba(255,255,255,0.52) rgba(0,0,0,0.13)"></div>
<div style="left:1337.4px;top:1416.9px;width:165.2px;height:65.2px;border-style:solid;border-width:4.6px 4.6px 4.6px 4.6px;border-color:rgba(0,0,0,0.24) rgba(255,255,255,0.62) rgba(255,255,255,0.62) rgba(0,0,0,0.24);background:#fafafa;background-clip:padding-box"></div>
<svg style="left:1299px;top:1402.5px" width="32.5" height="72.5" viewBox="0 0 32.5 72.5"><ellipse cx="16.25" cy="36.25" rx="16.25" ry="36.25" fill="url(#spg)"/><ellipse cx="16.25" cy="36.25" rx="14.95" ry="34.95" fill="none" stroke="url(#sps)" stroke-width="2.6"/><rect x="1" y="34.75" width="30.5" height="3" fill="#b4b4b4"/><rect x="1" y="37.75" width="30.5" height="2" fill="#ececec"/><path d="M10.25 25.75 L16.25 12.25" fill="none" stroke="#5e5e5e" stroke-width="2.6"/><path d="M16.25 12.25 L22.25 25.75" fill="none" stroke="#9a9a9a" stroke-width="2.6"/><path d="M23.25 45.25 L9.25 45.25 L16.25 60.25" fill="none" stroke="#666" stroke-width="2.6"/><path d="M16.25 60.25 L23.25 45.25" fill="none" stroke="#f0f0f0" stroke-width="2.4"/><path d="M10.25 27.25 L23.25 27.25" stroke="#f2f2f2" stroke-width="2.6"/></svg>
<span class="t" style="left:1351px;top:1432.33px;font-size:38px;color:#0a0a14;transform:scaleX(0.9800);">226</span>
<div style="left:1332px;top:1497.5px;width:176px;height:76.5px;border-style:solid;border-width:2.6px 2.6px 2.6px 2.6px;border-color:rgba(0,0,0,0.05) rgba(255,255,255,0.42) rgba(255,255,255,0.42) rgba(0,0,0,0.05)"></div>
<div style="left:1334.6px;top:1500.1px;width:170.8px;height:71.3px;border-style:solid;border-width:2.8px 2.8px 2.8px 2.8px;border-color:rgba(0,0,0,0.13) rgba(255,255,255,0.52) rgba(255,255,255,0.52) rgba(0,0,0,0.13)"></div>
<div style="left:1337.4px;top:1502.9px;width:165.2px;height:65.7px;border-style:solid;border-width:4.6px 4.6px 4.6px 4.6px;border-color:rgba(0,0,0,0.24) rgba(255,255,255,0.62) rgba(255,255,255,0.62) rgba(0,0,0,0.24);background:#fafafa;background-clip:padding-box"></div>
<svg style="left:1299px;top:1490px" width="32.5" height="72.5" viewBox="0 0 32.5 72.5"><ellipse cx="16.25" cy="36.25" rx="16.25" ry="36.25" fill="url(#spg)"/><ellipse cx="16.25" cy="36.25" rx="14.95" ry="34.95" fill="none" stroke="url(#sps)" stroke-width="2.6"/><rect x="1" y="34.75" width="30.5" height="3" fill="#b4b4b4"/><rect x="1" y="37.75" width="30.5" height="2" fill="#ececec"/><path d="M10.25 25.75 L16.25 12.25" fill="none" stroke="#5e5e5e" stroke-width="2.6"/><path d="M16.25 12.25 L22.25 25.75" fill="none" stroke="#9a9a9a" stroke-width="2.6"/><path d="M23.25 45.25 L9.25 45.25 L16.25 60.25" fill="none" stroke="#666" stroke-width="2.6"/><path d="M16.25 60.25 L23.25 45.25" fill="none" stroke="#f0f0f0" stroke-width="2.4"/><path d="M10.25 27.25 L23.25 27.25" stroke="#f2f2f2" stroke-width="2.6"/></svg>
<span class="t" style="left:1351px;top:1518.58px;font-size:38px;color:#0a0a14;transform:scaleX(0.9800);">0</span>
<div style="left:1506px;top:1414px;width:758px;height:803.5px;border-style:solid;border-width:9px;border-color:rgba(0,0,0,.17) rgba(255,255,255,.55) rgba(255,255,255,.55) rgba(0,0,0,.17)"></div>
<div style="left:1515px;top:1422px;width:229.5px;height:77.5px;border-style:solid;border-width:10px;border-color:#848484 #b0b0b0 #a9a9a9 #8e8e8e;background:#d3d3d3"></div>
<span class="t" style="left:1535px;top:1443.18px;font-size:38px;color:#0a0a14;transform:scaleX(0.9800);">3<span style="letter-spacing:-2.4px">,</span>750000</span>
<div style="left:1744px;top:1422px;width:229.5px;height:77.5px;border-style:solid;border-width:10px;border-color:#848484 #b0b0b0 #a9a9a9 #8e8e8e;background:#d3d3d3"></div>
<span class="t" style="left:1764px;top:1443.18px;font-size:38px;color:#0a0a14;transform:scaleX(0.9800);">0<span style="letter-spacing:-2.4px">,</span>067457</span>
<div style="left:1973px;top:1422px;width:229.5px;height:77.5px;border-style:solid;border-width:10px;border-color:#848484 #b0b0b0 #a9a9a9 #8e8e8e;background:#d3d3d3"></div>
<span class="t" style="left:1993px;top:1443.18px;font-size:38px;color:#0a0a14;transform:scaleX(0.9800);">0<span style="letter-spacing:-2.4px">,</span>000304</span>
<div style="left:1515px;top:1501px;width:229.5px;height:77.5px;border-style:solid;border-width:10px;border-color:#848484 #b0b0b0 #a9a9a9 #8e8e8e;background:#d3d3d3"></div>
<span class="t" style="left:1535px;top:1522.18px;font-size:38px;color:#0a0a14;transform:scaleX(0.9800);">3<span style="letter-spacing:-2.4px">,</span>753330</span>
<div style="left:1744px;top:1501px;width:229.5px;height:77.5px;border-style:solid;border-width:10px;border-color:#848484 #b0b0b0 #a9a9a9 #8e8e8e;background:#d3d3d3"></div>
<span class="t" style="left:1764px;top:1522.18px;font-size:38px;color:#0a0a14;transform:scaleX(0.9800);">0<span style="letter-spacing:-2.4px">,</span>081167</span>
<div style="left:1973px;top:1501px;width:229.5px;height:77.5px;border-style:solid;border-width:10px;border-color:#848484 #b0b0b0 #a9a9a9 #8e8e8e;background:#d3d3d3"></div>
<span class="t" style="left:1993px;top:1522.18px;font-size:38px;color:#0a0a14;transform:scaleX(0.9800);">0<span style="letter-spacing:-2.4px">,</span>000304</span>
<div style="left:1515px;top:1580px;width:229.5px;height:77.5px;border-style:solid;border-width:10px;border-color:#848484 #b0b0b0 #a9a9a9 #8e8e8e;background:#d3d3d3"></div>
<span class="t" style="left:1535px;top:1601.18px;font-size:38px;color:#0a0a14;transform:scaleX(0.9800);">3<span style="letter-spacing:-2.4px">,</span>756670</span>
<div style="left:1744px;top:1580px;width:229.5px;height:77.5px;border-style:solid;border-width:10px;border-color:#848484 #b0b0b0 #a9a9a9 #8e8e8e;background:#d3d3d3"></div>
<span class="t" style="left:1764px;top:1601.18px;font-size:38px;color:#0a0a14;transform:scaleX(0.9800);">0<span style="letter-spacing:-2.4px">,</span>096865</span>
<div style="left:1973px;top:1580px;width:229.5px;height:77.5px;border-style:solid;border-width:10px;border-color:#848484 #b0b0b0 #a9a9a9 #8e8e8e;background:#d3d3d3"></div>
<span class="t" style="left:1993px;top:1601.18px;font-size:38px;color:#0a0a14;transform:scaleX(0.9800);">0<span style="letter-spacing:-2.4px">,</span>000304</span>
<div style="left:1515px;top:1659px;width:229.5px;height:77.5px;border-style:solid;border-width:10px;border-color:#848484 #b0b0b0 #a9a9a9 #8e8e8e;background:#d3d3d3"></div>
<span class="t" style="left:1535px;top:1680.18px;font-size:38px;color:#0a0a14;transform:scaleX(0.9800);">3<span style="letter-spacing:-2.4px">,</span>760000</span>
<div style="left:1744px;top:1659px;width:229.5px;height:77.5px;border-style:solid;border-width:10px;border-color:#848484 #b0b0b0 #a9a9a9 #8e8e8e;background:#d3d3d3"></div>
<span class="t" style="left:1764px;top:1680.18px;font-size:38px;color:#0a0a14;transform:scaleX(0.9800);">0<span style="letter-spacing:-2.4px">,</span>117163</span>
<div style="left:1973px;top:1659px;width:229.5px;height:77.5px;border-style:solid;border-width:10px;border-color:#848484 #b0b0b0 #a9a9a9 #8e8e8e;background:#d3d3d3"></div>
<span class="t" style="left:1993px;top:1680.18px;font-size:38px;color:#0a0a14;transform:scaleX(0.9800);">0<span style="letter-spacing:-2.4px">,</span>000305</span>
<div style="left:1515px;top:1738px;width:229.5px;height:77.5px;border-style:solid;border-width:10px;border-color:#848484 #b0b0b0 #a9a9a9 #8e8e8e;background:#d3d3d3"></div>
<span class="t" style="left:1535px;top:1759.18px;font-size:38px;color:#0a0a14;transform:scaleX(0.9800);">3<span style="letter-spacing:-2.4px">,</span>763330</span>
<div style="left:1744px;top:1738px;width:229.5px;height:77.5px;border-style:solid;border-width:10px;border-color:#848484 #b0b0b0 #a9a9a9 #8e8e8e;background:#d3d3d3"></div>
<span class="t" style="left:1764px;top:1759.18px;font-size:38px;color:#0a0a14;transform:scaleX(0.9800);">0<span style="letter-spacing:-2.4px">,</span>140862</span>
<div style="left:1973px;top:1738px;width:229.5px;height:77.5px;border-style:solid;border-width:10px;border-color:#848484 #b0b0b0 #a9a9a9 #8e8e8e;background:#d3d3d3"></div>
<span class="t" style="left:1993px;top:1759.18px;font-size:38px;color:#0a0a14;transform:scaleX(0.9800);">0<span style="letter-spacing:-2.4px">,</span>000305</span>
<div style="left:1515px;top:1817px;width:229.5px;height:77.5px;border-style:solid;border-width:10px;border-color:#848484 #b0b0b0 #a9a9a9 #8e8e8e;background:#d3d3d3"></div>
<span class="t" style="left:1535px;top:1838.18px;font-size:38px;color:#0a0a14;transform:scaleX(0.9800);">3<span style="letter-spacing:-2.4px">,</span>766670</span>
<div style="left:1744px;top:1817px;width:229.5px;height:77.5px;border-style:solid;border-width:10px;border-color:#848484 #b0b0b0 #a9a9a9 #8e8e8e;background:#d3d3d3"></div>
<span class="t" style="left:1764px;top:1838.18px;font-size:38px;color:#0a0a14;transform:scaleX(0.9800);">0<span style="letter-spacing:-2.4px">,</span>168260</span>
<div style="left:1973px;top:1817px;width:229.5px;height:77.5px;border-style:solid;border-width:10px;border-color:#848484 #b0b0b0 #a9a9a9 #8e8e8e;background:#d3d3d3"></div>
<span class="t" style="left:1993px;top:1838.18px;font-size:38px;color:#0a0a14;transform:scaleX(0.9800);">0<span style="letter-spacing:-2.4px">,</span>000305</span>
<div style="left:1515px;top:1896px;width:229.5px;height:77.5px;border-style:solid;border-width:10px;border-color:#848484 #b0b0b0 #a9a9a9 #8e8e8e;background:#d3d3d3"></div>
<span class="t" style="left:1535px;top:1917.18px;font-size:38px;color:#0a0a14;transform:scaleX(0.9800);">3<span style="letter-spacing:-2.4px">,</span>770000</span>
<div style="left:1744px;top:1896px;width:229.5px;height:77.5px;border-style:solid;border-width:10px;border-color:#848484 #b0b0b0 #a9a9a9 #8e8e8e;background:#d3d3d3"></div>
<span class="t" style="left:1764px;top:1917.18px;font-size:38px;color:#0a0a14;transform:scaleX(0.9800);">0<span style="letter-spacing:-2.4px">,</span>200359</span>
<div style="left:1973px;top:1896px;width:229.5px;height:77.5px;border-style:solid;border-width:10px;border-color:#848484 #b0b0b0 #a9a9a9 #8e8e8e;background:#d3d3d3"></div>
<span class="t" style="left:1993px;top:1917.18px;font-size:38px;color:#0a0a14;transform:scaleX(0.9800);">0<span style="letter-spacing:-2.4px">,</span>000305</span>
<div style="left:1515px;top:1975px;width:229.5px;height:77.5px;border-style:solid;border-width:10px;border-color:#848484 #b0b0b0 #a9a9a9 #8e8e8e;background:#d3d3d3"></div>
<span class="t" style="left:1535px;top:1996.18px;font-size:38px;color:#0a0a14;transform:scaleX(0.9800);">3<span style="letter-spacing:-2.4px">,</span>773330</span>
<div style="left:1744px;top:1975px;width:229.5px;height:77.5px;border-style:solid;border-width:10px;border-color:#848484 #b0b0b0 #a9a9a9 #8e8e8e;background:#d3d3d3"></div>
<span class="t" style="left:1764px;top:1996.18px;font-size:38px;color:#0a0a14;transform:scaleX(0.9800);">0<span style="letter-spacing:-2.4px">,</span>239257</span>
<div style="left:1973px;top:1975px;width:229.5px;height:77.5px;border-style:solid;border-width:10px;border-color:#848484 #b0b0b0 #a9a9a9 #8e8e8e;background:#d3d3d3"></div>
<span class="t" style="left:1993px;top:1996.18px;font-size:38px;color:#0a0a14;transform:scaleX(0.9800);">0<span style="letter-spacing:-2.4px">,</span>000306</span>
<div style="left:1515px;top:2054px;width:229.5px;height:77.5px;border-style:solid;border-width:10px;border-color:#848484 #b0b0b0 #a9a9a9 #8e8e8e;background:#d3d3d3"></div>
<span class="t" style="left:1535px;top:2075.18px;font-size:38px;color:#0a0a14;transform:scaleX(0.9800);">3<span style="letter-spacing:-2.4px">,</span>776670</span>
<div style="left:1744px;top:2054px;width:229.5px;height:77.5px;border-style:solid;border-width:10px;border-color:#848484 #b0b0b0 #a9a9a9 #8e8e8e;background:#d3d3d3"></div>
<span class="t" style="left:1764px;top:2075.18px;font-size:38px;color:#0a0a14;transform:scaleX(0.9800);">0<span style="letter-spacing:-2.4px">,</span>284555</span>
<div style="left:1973px;top:2054px;width:229.5px;height:77.5px;border-style:solid;border-width:10px;border-color:#848484 #b0b0b0 #a9a9a9 #8e8e8e;background:#d3d3d3"></div>
<span class="t" style="left:1993px;top:2075.18px;font-size:38px;color:#0a0a14;transform:scaleX(0.9800);">0<span style="letter-spacing:-2.4px">,</span>000306</span>
<div style="left:1515px;top:2133px;width:229.5px;height:77.5px;border-style:solid;border-width:10px;border-color:#848484 #b0b0b0 #a9a9a9 #8e8e8e;background:#d3d3d3"></div>
<span class="t" style="left:1535px;top:2154.18px;font-size:38px;color:#0a0a14;transform:scaleX(0.9800);">3<span style="letter-spacing:-2.4px">,</span>780000</span>
<div style="left:1744px;top:2133px;width:229.5px;height:77.5px;border-style:solid;border-width:10px;border-color:#848484 #b0b0b0 #a9a9a9 #8e8e8e;background:#d3d3d3"></div>
<span class="t" style="left:1764px;top:2154.18px;font-size:38px;color:#0a0a14;transform:scaleX(0.9800);">0<span style="letter-spacing:-2.4px">,</span>337843</span>
<div style="left:1973px;top:2133px;width:229.5px;height:77.5px;border-style:solid;border-width:10px;border-color:#848484 #b0b0b0 #a9a9a9 #8e8e8e;background:#d3d3d3"></div>
<span class="t" style="left:1993px;top:2154.18px;font-size:38px;color:#0a0a14;transform:scaleX(0.9800);">0<span style="letter-spacing:-2.4px">,</span>000306</span>
<div style="left:2202.5px;top:1422px;width:52px;height:786.5px;background:#f0f0f0"></div>
<div style="left:2203.5px;top:1567px;width:50px;height:55px;background:#cdcdcd"></div>
<svg style="left:2208.5px;top:1429px" width="40" height="40" viewBox="-20 -20 40 40"><polyline points="-11,6.050000000000001 0,-4.95 11,6.050000000000001" fill="none" stroke="#5a5a5a" stroke-width="4.5"/></svg>
<svg style="left:2208.5px;top:2161.5px" width="40" height="40" viewBox="-20 -20 40 40"><polyline points="-11,-6.050000000000001 0,4.95 11,-6.050000000000001" fill="none" stroke="#5a5a5a" stroke-width="4.5"/></svg>
<span class="t" style="left:2454px;top:1365.33px;font-size:38px;color:#0a0a14;transform:scaleX(0.9682);">Subsets array</span>
<div style="left:2314px;top:1414px;width:139.5px;height:75.5px;border-style:solid;border-width:2.6px 2.6px 2.6px 2.6px;border-color:rgba(0,0,0,0.05) rgba(255,255,255,0.42) rgba(255,255,255,0.42) rgba(0,0,0,0.05)"></div>
<div style="left:2316.6px;top:1416.6px;width:134.3px;height:70.3px;border-style:solid;border-width:2.8px 2.8px 2.8px 2.8px;border-color:rgba(0,0,0,0.13) rgba(255,255,255,0.52) rgba(255,255,255,0.52) rgba(0,0,0,0.13)"></div>
<div style="left:2319.4px;top:1419.4px;width:128.7px;height:64.7px;border-style:solid;border-width:4.6px 4.6px 4.6px 4.6px;border-color:rgba(0,0,0,0.24) rgba(255,255,255,0.62) rgba(255,255,255,0.62) rgba(0,0,0,0.24);background:#fafafa;background-clip:padding-box"></div>
<svg style="left:2282px;top:1407.5px" width="33" height="70.5" viewBox="0 0 33 70.5"><ellipse cx="16.5" cy="35.25" rx="16.5" ry="35.25" fill="url(#spg)"/><ellipse cx="16.5" cy="35.25" rx="15.2" ry="33.95" fill="none" stroke="url(#sps)" stroke-width="2.6"/><rect x="1" y="33.75" width="31" height="3" fill="#b4b4b4"/><rect x="1" y="36.75" width="31" height="2" fill="#ececec"/><path d="M10.5 24.75 L16.5 11.25" fill="none" stroke="#5e5e5e" stroke-width="2.6"/><path d="M16.5 11.25 L22.5 24.75" fill="none" stroke="#9a9a9a" stroke-width="2.6"/><path d="M23.5 44.25 L9.5 44.25 L16.5 59.25" fill="none" stroke="#666" stroke-width="2.6"/><path d="M16.5 59.25 L23.5 44.25" fill="none" stroke="#f0f0f0" stroke-width="2.4"/><path d="M10.5 26.25 L23.5 26.25" stroke="#f2f2f2" stroke-width="2.6"/></svg>
<span class="t" style="left:2333px;top:1434.58px;font-size:38px;color:#0a0a14;transform:scaleX(0.9800);">0</span>
<div style="left:2314px;top:1500px;width:139.5px;height:76px;border-style:solid;border-width:2.6px 2.6px 2.6px 2.6px;border-color:rgba(0,0,0,0.05) rgba(255,255,255,0.42) rgba(255,255,255,0.42) rgba(0,0,0,0.05)"></div>
<div style="left:2316.6px;top:1502.6px;width:134.3px;height:70.8px;border-style:solid;border-width:2.8px 2.8px 2.8px 2.8px;border-color:rgba(0,0,0,0.13) rgba(255,255,255,0.52) rgba(255,255,255,0.52) rgba(0,0,0,0.13)"></div>
<div style="left:2319.4px;top:1505.4px;width:128.7px;height:65.2px;border-style:solid;border-width:4.6px 4.6px 4.6px 4.6px;border-color:rgba(0,0,0,0.24) rgba(255,255,255,0.62) rgba(255,255,255,0.62) rgba(0,0,0,0.24);background:#fafafa;background-clip:padding-box"></div>
<svg style="left:2282px;top:1494px" width="33" height="70.5" viewBox="0 0 33 70.5"><ellipse cx="16.5" cy="35.25" rx="16.5" ry="35.25" fill="url(#spg)"/><ellipse cx="16.5" cy="35.25" rx="15.2" ry="33.95" fill="none" stroke="url(#sps)" stroke-width="2.6"/><rect x="1" y="33.75" width="31" height="3" fill="#b4b4b4"/><rect x="1" y="36.75" width="31" height="2" fill="#ececec"/><path d="M10.5 24.75 L16.5 11.25" fill="none" stroke="#5e5e5e" stroke-width="2.6"/><path d="M16.5 11.25 L22.5 24.75" fill="none" stroke="#9a9a9a" stroke-width="2.6"/><path d="M23.5 44.25 L9.5 44.25 L16.5 59.25" fill="none" stroke="#666" stroke-width="2.6"/><path d="M16.5 59.25 L23.5 44.25" fill="none" stroke="#f0f0f0" stroke-width="2.4"/><path d="M10.5 26.25 L23.5 26.25" stroke="#f2f2f2" stroke-width="2.6"/></svg>
<span class="t" style="left:2333px;top:1520.83px;font-size:38px;color:#0a0a14;transform:scaleX(0.9800);">0</span>
<div style="left:2452px;top:1415px;width:871px;height:410px;border-style:solid;border-width:9px;border-color:rgba(0,0,0,.17) rgba(255,255,255,.55) rgba(255,255,255,.55) rgba(0,0,0,.17)"></div>
<div style="left:2461.5px;top:1424px;width:198.5px;height:76.5px;border-style:solid;border-width:10px;border-color:#848484 #b0b0b0 #a9a9a9 #8e8e8e;background:#d3d3d3"></div>
<div style="left:2471.5px;top:1434px;width:170px;height:56.5px;overflow:hidden"><span class="t" style="left:10px;top:10.68px;font-size:38px;color:#0a0a14;transform:scaleX(0.98)">3<span style="letter-spacing:-2.4px">,</span>00333</span></div>
<div style="left:2661px;top:1424px;width:198.5px;height:76.5px;border-style:solid;border-width:10px;border-color:#848484 #b0b0b0 #a9a9a9 #8e8e8e;background:#d3d3d3"></div>
<div style="left:2671px;top:1434px;width:170px;height:56.5px;overflow:hidden"><span class="t" style="left:10px;top:10.68px;font-size:38px;color:#0a0a14;transform:scaleX(0.98)"><span style="letter-spacing:3.3px">-</span>0<span style="letter-spacing:-2.4px">,</span>000353866</span></div>
<div style="left:2860.5px;top:1424px;width:198.5px;height:76.5px;border-style:solid;border-width:10px;border-color:#848484 #b0b0b0 #a9a9a9 #8e8e8e;background:#d3d3d3"></div>
<div style="left:2870.5px;top:1434px;width:170px;height:56.5px;overflow:hidden"><span class="t" style="left:10px;top:10.68px;font-size:38px;color:#0a0a14;transform:scaleX(0.98)">3</span></div>
<div style="left:3060px;top:1424px;width:198.5px;height:76.5px;border-style:solid;border-width:10px;border-color:#848484 #b0b0b0 #a9a9a9 #8e8e8e;background:#d3d3d3"></div>
<div style="left:3070px;top:1434px;width:170px;height:56.5px;overflow:hidden"><span class="t" style="left:10px;top:10.68px;font-size:38px;color:#0a0a14;transform:scaleX(0.98)">0<span style="letter-spacing:-2.4px">,</span>000572134</span></div>
<div style="left:2461.5px;top:1502.75px;width:198.5px;height:76.5px;border-style:solid;border-width:10px;border-color:#848484 #b0b0b0 #a9a9a9 #8e8e8e;background:#d3d3d3"></div>
<div style="left:2471.5px;top:1512.75px;width:170px;height:56.5px;overflow:hidden"><span class="t" style="left:10px;top:10.68px;font-size:38px;color:#0a0a14;transform:scaleX(0.98)">3<span style="letter-spacing:-2.4px">,</span>00667</span></div>
<div style="left:2661px;top:1502.75px;width:198.5px;height:76.5px;border-style:solid;border-width:10px;border-color:#848484 #b0b0b0 #a9a9a9 #8e8e8e;background:#d3d3d3"></div>
<div style="left:2671px;top:1512.75px;width:170px;height:56.5px;overflow:hidden"><span class="t" style="left:10px;top:10.68px;font-size:38px;color:#0a0a14;transform:scaleX(0.98)"><span style="letter-spacing:3.3px">-</span>0<span style="letter-spacing:-2.4px">,</span>000255866</span></div>
<div style="left:2860.5px;top:1502.75px;width:198.5px;height:76.5px;border-style:solid;border-width:10px;border-color:#848484 #b0b0b0 #a9a9a9 #8e8e8e;background:#d3d3d3"></div>
<div style="left:2870.5px;top:1512.75px;width:170px;height:56.5px;overflow:hidden"><span class="t" style="left:10px;top:10.68px;font-size:38px;color:#0a0a14;transform:scaleX(0.98)">3<span style="letter-spacing:-2.4px">,</span>00333</span></div>
<div style="left:3060px;top:1502.75px;width:198.5px;height:76.5px;border-style:solid;border-width:10px;border-color:#848484 #b0b0b0 #a9a9a9 #8e8e8e;background:#d3d3d3"></div>
<div style="left:3070px;top:1512.75px;width:170px;height:56.5px;overflow:hidden"><span class="t" style="left:10px;top:10.68px;font-size:38px;color:#0a0a14;transform:scaleX(0.98)">0<span style="letter-spacing:-2.4px">,</span>000572134</span></div>
<div style="left:2461.5px;top:1581.5px;width:198.5px;height:76.5px;border-style:solid;border-width:10px;border-color:#848484 #b0b0b0 #a9a9a9 #8e8e8e;background:#d3d3d3"></div>
<div style="left:2471.5px;top:1591.5px;width:170px;height:56.5px;overflow:hidden"><span class="t" style="left:10px;top:10.68px;font-size:38px;color:#0a0a14;transform:scaleX(0.98)">3<span style="letter-spacing:-2.4px">,</span>01</span></div>
<div style="left:2661px;top:1581.5px;width:198.5px;height:76.5px;border-style:solid;border-width:10px;border-color:#848484 #b0b0b0 #a9a9a9 #8e8e8e;background:#d3d3d3"></div>
<div style="left:2671px;top:1591.5px;width:170px;height:56.5px;overflow:hidden"><span class="t" style="left:10px;top:10.68px;font-size:38px;color:#0a0a14;transform:scaleX(0.98)"><span style="letter-spacing:3.3px">-</span>0<span style="letter-spacing:-2.4px">,</span>000267866</span></div>
<div style="left:2860.5px;top:1581.5px;width:198.5px;height:76.5px;border-style:solid;border-width:10px;border-color:#848484 #b0b0b0 #a9a9a9 #8e8e8e;background:#d3d3d3"></div>
<div style="left:2870.5px;top:1591.5px;width:170px;height:56.5px;overflow:hidden"><span class="t" style="left:10px;top:10.68px;font-size:38px;color:#0a0a14;transform:scaleX(0.98)">3<span style="letter-spacing:-2.4px">,</span>00667</span></div>
<div style="left:3060px;top:1581.5px;width:198.5px;height:76.5px;border-style:solid;border-width:10px;border-color:#848484 #b0b0b0 #a9a9a9 #8e8e8e;background:#d3d3d3"></div>
<div style="left:3070px;top:1591.5px;width:170px;height:56.5px;overflow:hidden"><span class="t" style="left:10px;top:10.68px;font-size:38px;color:#0a0a14;transform:scaleX(0.98)">0<span style="letter-spacing:-2.4px">,</span>000573134</span></div>
<div style="left:2461.5px;top:1660.25px;width:198.5px;height:76.5px;border-style:solid;border-width:10px;border-color:#848484 #b0b0b0 #a9a9a9 #8e8e8e;background:#d3d3d3"></div>
<div style="left:2471.5px;top:1670.25px;width:170px;height:56.5px;overflow:hidden"><span class="t" style="left:10px;top:10.68px;font-size:38px;color:#0a0a14;transform:scaleX(0.98)">3<span style="letter-spacing:-2.4px">,</span>01333</span></div>
<div style="left:2661px;top:1660.25px;width:198.5px;height:76.5px;border-style:solid;border-width:10px;border-color:#848484 #b0b0b0 #a9a9a9 #8e8e8e;background:#d3d3d3"></div>
<div style="left:2671px;top:1670.25px;width:170px;height:56.5px;overflow:hidden"><span class="t" style="left:10px;top:10.68px;font-size:38px;color:#0a0a14;transform:scaleX(0.98)"><span style="letter-spacing:3.3px">-</span>0<span style="letter-spacing:-2.4px">,</span>000280866</span></div>
<div style="left:2860.5px;top:1660.25px;width:198.5px;height:76.5px;border-style:solid;border-width:10px;border-color:#848484 #b0b0b0 #a9a9a9 #8e8e8e;background:#d3d3d3"></div>
<div style="left:2870.5px;top:1670.25px;width:170px;height:56.5px;overflow:hidden"><span class="t" style="left:10px;top:10.68px;font-size:38px;color:#0a0a14;transform:scaleX(0.98)">3<span style="letter-spacing:-2.4px">,</span>01</span></div>
<div style="left:3060px;top:1660.25px;width:198.5px;height:76.5px;border-style:solid;border-width:10px;border-color:#848484 #b0b0b0 #a9a9a9 #8e8e8e;background:#d3d3d3"></div>
<div style="left:3070px;top:1670.25px;width:170px;height:56.5px;overflow:hidden"><span class="t" style="left:10px;top:10.68px;font-size:38px;color:#0a0a14;transform:scaleX(0.98)">0<span style="letter-spacing:-2.4px">,</span>000573134</span></div>
<div style="left:2461.5px;top:1739px;width:198.5px;height:76.5px;border-style:solid;border-width:10px;border-color:#848484 #b0b0b0 #a9a9a9 #8e8e8e;background:#d3d3d3"></div>
<div style="left:2471.5px;top:1749px;width:170px;height:56.5px;overflow:hidden"><span class="t" style="left:10px;top:10.68px;font-size:38px;color:#0a0a14;transform:scaleX(0.98)">3<span style="letter-spacing:-2.4px">,</span>01667</span></div>
<div style="left:2661px;top:1739px;width:198.5px;height:76.5px;border-style:solid;border-width:10px;border-color:#848484 #b0b0b0 #a9a9a9 #8e8e8e;background:#d3d3d3"></div>
<div style="left:2671px;top:1749px;width:170px;height:56.5px;overflow:hidden"><span class="t" style="left:10px;top:10.68px;font-size:38px;color:#0a0a14;transform:scaleX(0.98)"><span style="letter-spacing:3.3px">-</span>0<span style="letter-spacing:-2.4px">,</span>000293866</span></div>
<div style="left:2860.5px;top:1739px;width:198.5px;height:76.5px;border-style:solid;border-width:10px;border-color:#848484 #b0b0b0 #a9a9a9 #8e8e8e;background:#d3d3d3"></div>
<div style="left:2870.5px;top:1749px;width:170px;height:56.5px;overflow:hidden"><span class="t" style="left:10px;top:10.68px;font-size:38px;color:#0a0a14;transform:scaleX(0.98)">3<span style="letter-spacing:-2.4px">,</span>01333</span></div>
<div style="left:3060px;top:1739px;width:198.5px;height:76.5px;border-style:solid;border-width:10px;border-color:#848484 #b0b0b0 #a9a9a9 #8e8e8e;background:#d3d3d3"></div>
<div style="left:3070px;top:1749px;width:170px;height:56.5px;overflow:hidden"><span class="t" style="left:10px;top:10.68px;font-size:38px;color:#0a0a14;transform:scaleX(0.98)">0<span style="letter-spacing:-2.4px">,</span>000573134</span></div>
<div style="left:3260.5px;top:1424px;width:53.5px;height:391.5px;background:#f0f0f0"></div>
<div style="left:3261.5px;top:1479px;width:51.5px;height:53.5px;background:#cdcdcd"></div>
<svg style="left:3267.25px;top:1431px" width="40" height="40" viewBox="-20 -20 40 40"><polyline points="-11,6.050000000000001 0,-4.95 11,6.050000000000001" fill="none" stroke="#5a5a5a" stroke-width="4.5"/></svg>
<svg style="left:3267.25px;top:1768.5px" width="40" height="40" viewBox="-20 -20 40 40"><polyline points="-11,-6.050000000000001 0,4.95 11,-6.050000000000001" fill="none" stroke="#5a5a5a" stroke-width="4.5"/></svg>
<span class="t" style="left:2350.5px;top:2052.83px;font-size:38px;color:#0a0a14;transform:scaleX(1.0501);">size(s)</span>
<div style="left:2304px;top:2112.5px;width:73.5px;height:75.5px;border-style:solid;border-width:2.6px 2.6px 2.6px 2.6px;border-color:rgba(0,0,0,0.05) rgba(255,255,255,0.42) rgba(255,255,255,0.42) rgba(0,0,0,0.05)"></div>
<div style="left:2306.6px;top:2115.1px;width:68.3px;height:70.3px;border-style:solid;border-width:2.8px 2.8px 2.8px 2.8px;border-color:rgba(0,0,0,0.13) rgba(255,255,255,0.52) rgba(255,255,255,0.52) rgba(0,0,0,0.13)"></div>
<div style="left:2309.4px;top:2117.9px;width:62.7px;height:64.7px;border-style:solid;border-width:4.6px 4.6px 4.6px 4.6px;border-color:rgba(0,0,0,0.24) rgba(255,255,255,0.62) rgba(255,255,255,0.62) rgba(0,0,0,0.24);background:#fafafa;background-clip:padding-box"></div>
<svg style="left:2271px;top:2106px" width="33.5" height="70.5" viewBox="0 0 33.5 70.5"><ellipse cx="16.75" cy="35.25" rx="16.75" ry="35.25" fill="url(#spg)"/><ellipse cx="16.75" cy="35.25" rx="15.45" ry="33.95" fill="none" stroke="url(#sps)" stroke-width="2.6"/><rect x="1" y="33.75" width="31.5" height="3" fill="#b4b4b4"/><rect x="1" y="36.75" width="31.5" height="2" fill="#ececec"/><path d="M10.75 24.75 L16.75 11.25" fill="none" stroke="#5e5e5e" stroke-width="2.6"/><path d="M16.75 11.25 L22.75 24.75" fill="none" stroke="#9a9a9a" stroke-width="2.6"/><path d="M23.75 44.25 L9.75 44.25 L16.75 59.25" fill="none" stroke="#666" stroke-width="2.6"/><path d="M16.75 59.25 L23.75 44.25" fill="none" stroke="#f0f0f0" stroke-width="2.4"/><path d="M10.75 26.25 L23.75 26.25" stroke="#f2f2f2" stroke-width="2.6"/></svg>
<span class="t" style="left:2323px;top:2133.08px;font-size:38px;color:#0a0a14;transform:scaleX(0.9800);">0</span>
<div style="left:2376px;top:2115.5px;width:278.5px;height:94.5px;border-style:solid;border-width:9px;border-color:rgba(0,0,0,.17) rgba(255,255,255,.55) rgba(255,255,255,.55) rgba(0,0,0,.17)"></div>
<div style="left:2387.5px;top:2122.8px;width:131px;height:78.4px;border-style:solid;border-width:10.5px;border-color:#848484 #b0b0b0 #a9a9a9 #8e8e8e;background:#d3d3d3"></div>
<div style="left:2398px;top:2133.3px;width:15.7px;height:57.4px;background:#a9a9a9"></div>
<span class="t" style="left:2423px;top:2144.43px;font-size:38px;color:#0a0a14;transform:scaleX(0.9800);">1501</span>
<div style="left:2516.5px;top:2122.8px;width:130.4px;height:78.4px;border-style:solid;border-width:10.5px;border-color:#848484 #b0b0b0 #a9a9a9 #8e8e8e;background:#d3d3d3"></div>
<div style="left:2527px;top:2133.3px;width:15px;height:57.4px;background:#a9a9a9"></div>
<span class="t" style="left:2551.5px;top:2144.43px;font-size:38px;color:#0a0a14;transform:scaleX(0.9800);">3</span>
<div style="left:2505.8px;top:2133.3px;width:2.2px;height:57.4px;background:#7489b2"></div>
<div style="left:2634.2px;top:2133.3px;width:2.2px;height:57.4px;background:#7489b2"></div>
<span class="t" style="left:2924.5px;top:1871.33px;font-size:38px;color:#0a0a14;transform:scaleX(0.9953);">Parameters&#x27; Captions</span>
<span class="t" style="left:3588.5px;top:1856.64px;font-size:46.5px;color:#0a0a14;transform:scaleX(0.8628);">OUTPUT PARAMETERS</span>
<div style="left:2839.5px;top:1919px;width:80.5px;height:76px;border-style:solid;border-width:2.6px 2.6px 2.6px 2.6px;border-color:rgba(0,0,0,0.05) rgba(255,255,255,0.42) rgba(255,255,255,0.42) rgba(0,0,0,0.05)"></div>
<div style="left:2842.1px;top:1921.6px;width:75.3px;height:70.8px;border-style:solid;border-width:2.8px 2.8px 2.8px 2.8px;border-color:rgba(0,0,0,0.13) rgba(255,255,255,0.52) rgba(255,255,255,0.52) rgba(0,0,0,0.13)"></div>
<div style="left:2844.9px;top:1924.4px;width:69.7px;height:65.2px;border-style:solid;border-width:4.6px 4.6px 4.6px 4.6px;border-color:rgba(0,0,0,0.24) rgba(255,255,255,0.62) rgba(255,255,255,0.62) rgba(0,0,0,0.24);background:#fafafa;background-clip:padding-box"></div>
<svg style="left:2805.5px;top:1912.5px" width="33.5" height="70" viewBox="0 0 33.5 70"><ellipse cx="16.75" cy="35" rx="16.75" ry="35" fill="url(#spg)"/><ellipse cx="16.75" cy="35" rx="15.45" ry="33.7" fill="none" stroke="url(#sps)" stroke-width="2.6"/><rect x="1" y="33.5" width="31.5" height="3" fill="#b4b4b4"/><rect x="1" y="36.5" width="31.5" height="2" fill="#ececec"/><path d="M10.75 24.5 L16.75 11" fill="none" stroke="#5e5e5e" stroke-width="2.6"/><path d="M16.75 11 L22.75 24.5" fill="none" stroke="#9a9a9a" stroke-width="2.6"/><path d="M23.75 44 L9.75 44 L16.75 59" fill="none" stroke="#666" stroke-width="2.6"/><path d="M16.75 59 L23.75 44" fill="none" stroke="#f0f0f0" stroke-width="2.4"/><path d="M10.75 26 L23.75 26" stroke="#f2f2f2" stroke-width="2.6"/></svg>
<span class="t" style="left:2858.5px;top:1939.83px;font-size:38px;color:#0a0a14;transform:scaleX(0.9800);">3</span>
<div style="left:2921px;top:1919.5px;width:1468.5px;height:151.5px;border-style:solid;border-width:9px;border-color:rgba(0,0,0,.17) rgba(255,255,255,.55) rgba(255,255,255,.55) rgba(0,0,0,.17)"></div>
<div style="left:2931.5px;top:1930.5px;width:361px;height:75.5px;border-style:solid;border-width:10px;border-color:#848484 #b0b0b0 #a9a9a9 #8e8e8e;background:#d3d3d3"></div>
<span class="t" style="left:2951.5px;top:1951.83px;font-size:38px;color:#0a0a14;transform:scaleX(0.9955);">Fraction of Peak 1</span>
<div style="left:3293.8px;top:1930.5px;width:361px;height:75.5px;border-style:solid;border-width:10px;border-color:#848484 #b0b0b0 #a9a9a9 #8e8e8e;background:#d3d3d3"></div>
<span class="t" style="left:3313.8px;top:1951.83px;font-size:38px;color:#0a0a14;transform:scaleX(1.0020);">Fraction of Peak 2</span>
<div style="left:3656.1px;top:1930.5px;width:361px;height:75.5px;border-style:solid;border-width:10px;border-color:#848484 #b0b0b0 #a9a9a9 #8e8e8e;background:#d3d3d3"></div>
<span class="t" style="left:3676.1px;top:1951.83px;font-size:38px;color:#0a0a14;transform:scaleX(1.0491);">Fraction of both</span>
<div style="left:4018.4px;top:1930.5px;width:361px;height:75.5px;border-style:solid;border-width:10px;border-color:#848484 #b0b0b0 #a9a9a9 #8e8e8e;background:#d3d3d3"></div>
<span class="t" style="left:4038.4px;top:1951.83px;font-size:38px;color:#0a0a14;transform:scaleX(1.0165);">Overlap y max</span>
<div style="left:2930.5px;top:2007.5px;width:1450.5px;height:53.5px;background:#f0f0f0"></div>
<div style="left:3253.5px;top:2008.5px;width:357.5px;height:51.5px;background:#cdcdcd"></div>
<svg style="left:2937.5px;top:2014.25px" width="40" height="40" viewBox="-20 -20 40 40"><polyline points="6.050000000000001,-11 -4.95,0 6.050000000000001,11" fill="none" stroke="#5a5a5a" stroke-width="4.5"/></svg>
<svg style="left:4334px;top:2014.25px" width="40" height="40" viewBox="-20 -20 40 40"><polyline points="-6.050000000000001,-11 4.95,0 -6.050000000000001,11" fill="none" stroke="#5a5a5a" stroke-width="4.5"/></svg>
<span class="t" style="left:2926.5px;top:2070.33px;font-size:38px;color:#0a0a14;transform:scaleX(0.9801);">Parameters</span>
<div style="left:2842px;top:2117.5px;width:80.5px;height:77.5px;border-style:solid;border-width:2.6px 2.6px 2.6px 2.6px;border-color:rgba(0,0,0,0.05) rgba(255,255,255,0.42) rgba(255,255,255,0.42) rgba(0,0,0,0.05)"></div>
<div style="left:2844.6px;top:2120.1px;width:75.3px;height:72.3px;border-style:solid;border-width:2.8px 2.8px 2.8px 2.8px;border-color:rgba(0,0,0,0.13) rgba(255,255,255,0.52) rgba(255,255,255,0.52) rgba(0,0,0,0.13)"></div>
<div style="left:2847.4px;top:2122.9px;width:69.7px;height:66.7px;border-style:solid;border-width:4.6px 4.6px 4.6px 4.6px;border-color:rgba(0,0,0,0.24) rgba(255,255,255,0.62) rgba(255,255,255,0.62) rgba(0,0,0,0.24);background:#fafafa;background-clip:padding-box"></div>
<svg style="left:2808px;top:2112.5px" width="33.5" height="70" viewBox="0 0 33.5 70"><ellipse cx="16.75" cy="35" rx="16.75" ry="35" fill="url(#spg)"/><ellipse cx="16.75" cy="35" rx="15.45" ry="33.7" fill="none" stroke="url(#sps)" stroke-width="2.6"/><rect x="1" y="33.5" width="31.5" height="3" fill="#b4b4b4"/><rect x="1" y="36.5" width="31.5" height="2" fill="#ececec"/><path d="M10.75 24.5 L16.75 11" fill="none" stroke="#5e5e5e" stroke-width="2.6"/><path d="M16.75 11 L22.75 24.5" fill="none" stroke="#9a9a9a" stroke-width="2.6"/><path d="M23.75 44 L9.75 44 L16.75 59" fill="none" stroke="#666" stroke-width="2.6"/><path d="M16.75 59 L23.75 44" fill="none" stroke="#f0f0f0" stroke-width="2.4"/><path d="M10.75 26 L23.75 26" stroke="#f2f2f2" stroke-width="2.6"/></svg>
<span class="t" style="left:2861px;top:2139.08px;font-size:38px;color:#0a0a14;transform:scaleX(0.9800);">3</span>
<div style="left:2923.5px;top:2119.5px;width:1468.5px;height:160.5px;border-style:solid;border-width:9px;border-color:rgba(0,0,0,.17) rgba(255,255,255,.55) rgba(255,255,255,.55) rgba(0,0,0,.17)"></div>
<div style="left:2934px;top:2130.5px;width:362px;height:76.5px;border-style:solid;border-width:10px;border-color:#848484 #b0b0b0 #a9a9a9 #8e8e8e;background:#d3d3d3"></div>
<span class="t" style="left:2953px;top:2151.33px;font-size:38px;color:#0a0a14;transform:scaleX(0.9800);">0<span style="letter-spacing:-2.4px">,</span>000900418</span>
<div style="left:3296.3px;top:2130.5px;width:362px;height:76.5px;border-style:solid;border-width:10px;border-color:#848484 #b0b0b0 #a9a9a9 #8e8e8e;background:#d3d3d3"></div>
<span class="t" style="left:3315.3px;top:2151.33px;font-size:38px;color:#0a0a14;transform:scaleX(0.9800);">0<span style="letter-spacing:-2.4px">,</span>401803</span>
<div style="left:3658.6px;top:2130.5px;width:362px;height:76.5px;border-style:solid;border-width:10px;border-color:#848484 #b0b0b0 #a9a9a9 #8e8e8e;background:#d3d3d3"></div>
<span class="t" style="left:3677.6px;top:2151.33px;font-size:38px;color:#0a0a14;transform:scaleX(0.9800);">0<span style="letter-spacing:-2.4px">,</span>000899212</span>
<div style="left:4020.9px;top:2130.5px;width:362px;height:76.5px;border-style:solid;border-width:10px;border-color:#848484 #b0b0b0 #a9a9a9 #8e8e8e;background:#d3d3d3"></div>
<span class="t" style="left:4039.9px;top:2151.33px;font-size:38px;color:#0a0a14;transform:scaleX(0.9800);">0<span style="letter-spacing:-2.4px">,</span>430595</span>
<div style="left:2933px;top:2208px;width:1450.5px;height:57px;background:#f0f0f0"></div>
<div style="left:3256px;top:2209px;width:357.5px;height:55px;background:#cdcdcd"></div>
<svg style="left:2940px;top:2216.5px" width="40" height="40" viewBox="-20 -20 40 40"><polyline points="6.050000000000001,-11 -4.95,0 6.050000000000001,11" fill="none" stroke="#5a5a5a" stroke-width="4.5"/></svg>
<svg style="left:4336.5px;top:2216.5px" width="40" height="40" viewBox="-20 -20 40 40"><polyline points="-6.050000000000001,-11 4.95,0 -6.050000000000001,11" fill="none" stroke="#5a5a5a" stroke-width="4.5"/></svg>
<div style="left:0px;top:0px;width:4419px;height:24px;background:#fff"></div>
<div style="left:0px;top:2265px;width:4419px;height:30px;background:#fff"></div>
<div style="left:0px;top:0px;width:34px;height:2295px;background:#fff"></div>
<div style="left:4396.5px;top:0px;width:22.5px;height:2295px;background:#fff"></div>
</div>
</body></html>
